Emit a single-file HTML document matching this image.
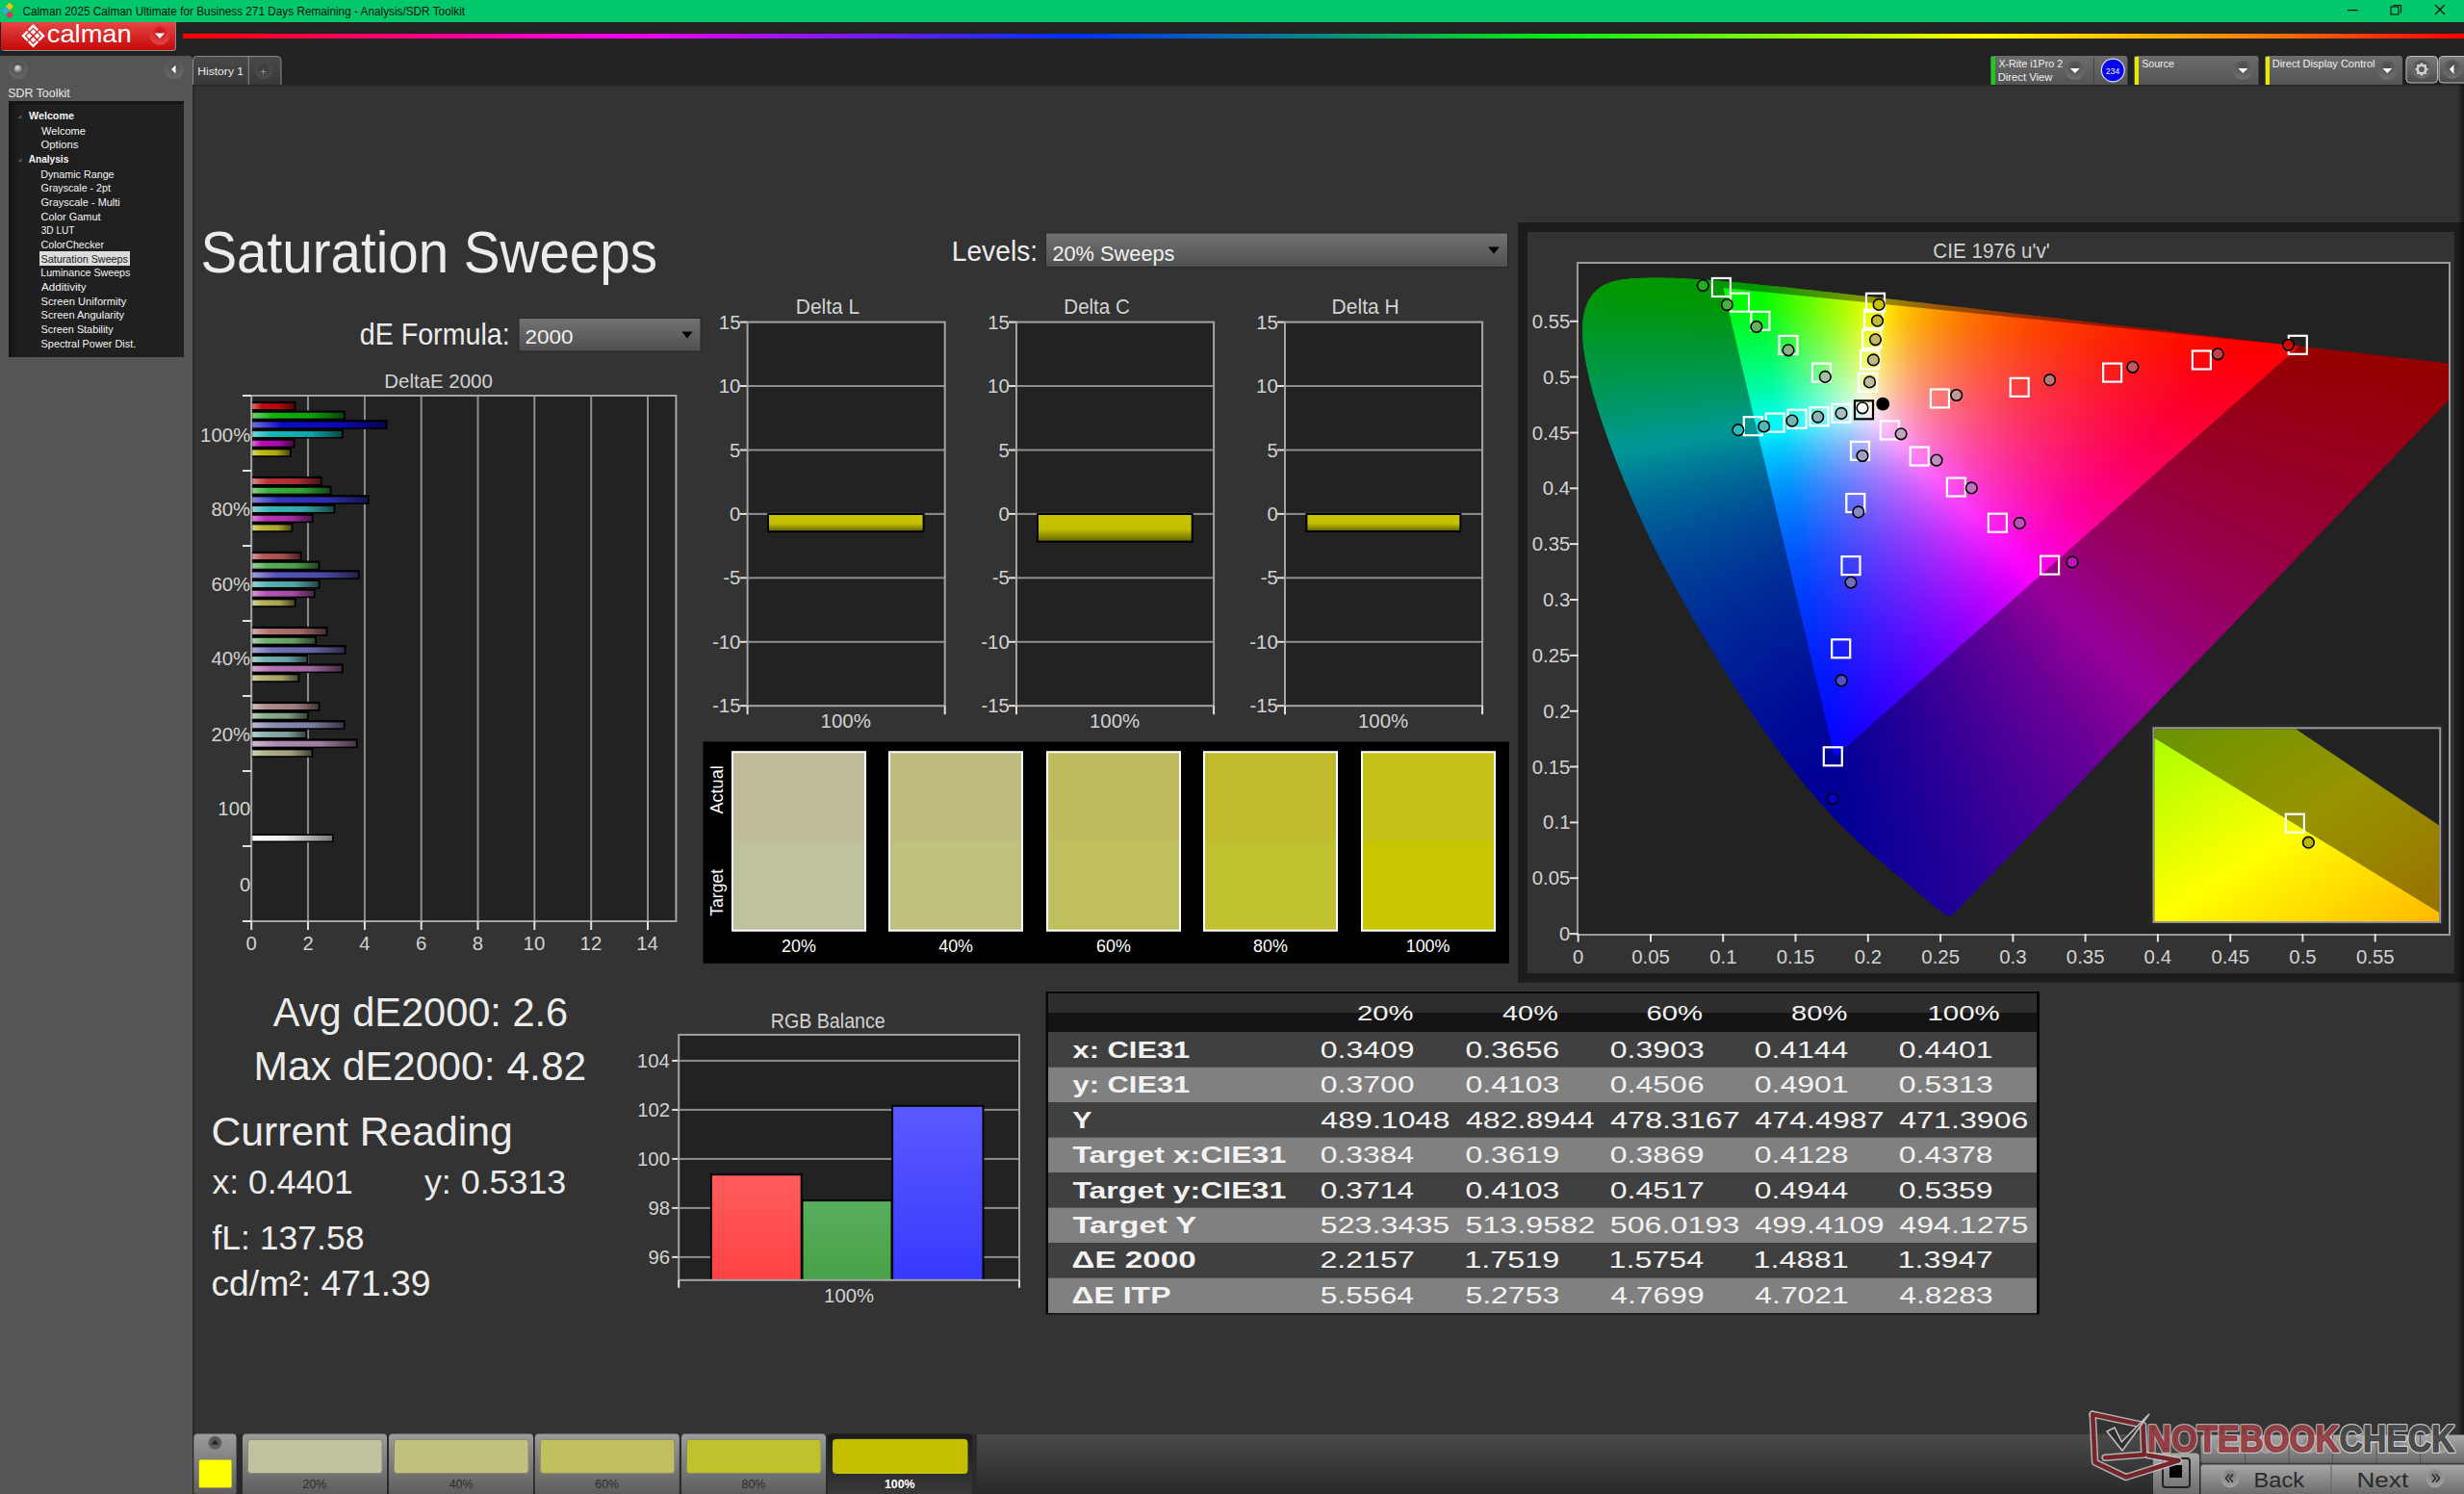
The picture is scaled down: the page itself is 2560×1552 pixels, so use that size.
<!DOCTYPE html>
<html><head><meta charset="utf-8"><title>Calman Saturation Sweeps</title><style>html,body{margin:0;padding:0;width:2560px;height:1552px;overflow:hidden;background:#222;font-family:"Liberation Sans",sans-serif}</style></head><body>
<svg width="2560" height="1552" viewBox="0 0 2560 1552" font-family="Liberation Sans, sans-serif" style="position:absolute;left:0;top:0;display:block">
<defs>
<linearGradient id="redbtn" x1="0" x2="0" y1="0" y2="1"><stop offset="0" stop-color="#e84545"/><stop offset="1" stop-color="#c50808"/></linearGradient>
<radialGradient id="reddd" cx="0.5" cy="0.3" r="0.6"><stop offset="0" stop-color="#c81018"/><stop offset="1" stop-color="#e04444"/></radialGradient>
<linearGradient id="rainbow" x1="0" x2="1" y1="0" y2="0"><stop offset="0" stop-color="#ff0000"/><stop offset="0.19" stop-color="#ff00f0"/><stop offset="0.39" stop-color="#0030ff"/><stop offset="0.50" stop-color="#008a80"/><stop offset="0.60" stop-color="#00ee10"/><stop offset="0.79" stop-color="#ffff00"/><stop offset="0.90" stop-color="#ff8800"/><stop offset="1" stop-color="#ff0000"/></linearGradient>
<radialGradient id="knob" cx="0.5" cy="0.35" r="0.65"><stop offset="0" stop-color="#4a4a4a"/><stop offset="1" stop-color="#6a6a6a"/></radialGradient>
<radialGradient id="ball" cx="0.4" cy="0.35" r="0.6"><stop offset="0" stop-color="#e0e0e0"/><stop offset="1" stop-color="#777"/></radialGradient>
<linearGradient id="treesh" x1="0" x2="1" y1="0" y2="0"><stop offset="0" stop-color="#121212"/><stop offset="0.06" stop-color="#1f1f1f"/><stop offset="1" stop-color="#202020"/></linearGradient>
<linearGradient id="tab" x1="0" x2="0" y1="0" y2="1"><stop offset="0" stop-color="#4a4a4a"/><stop offset="1" stop-color="#383838"/></linearGradient>
<radialGradient id="knob2" cx="0.5" cy="0.4" r="0.6"><stop offset="0" stop-color="#383838"/><stop offset="1" stop-color="#505050"/></radialGradient>
<linearGradient id="ctl" x1="0" x2="0" y1="0" y2="1"><stop offset="0" stop-color="#6c6c6c"/><stop offset="1" stop-color="#545454"/></linearGradient>
<radialGradient id="ddk" cx="0.5" cy="0.3" r="0.65"><stop offset="0" stop-color="#4a4a4a"/><stop offset="1" stop-color="#6e6e6e"/></radialGradient>
<linearGradient id="gbtn" x1="0" x2="0" y1="0" y2="1"><stop offset="0" stop-color="#7a7a7a"/><stop offset="1" stop-color="#4a4a4a"/></linearGradient>
<linearGradient id="dd" x1="0" x2="0" y1="0" y2="1"><stop offset="0" stop-color="#727272"/><stop offset="1" stop-color="#505050"/></linearGradient>
<linearGradient id="bg1" x1="0" x2="1" y1="0" y2="0"><stop offset="0" stop-color="rgb(219, 109, 109)"/><stop offset="0.22" stop-color="rgb(195, 12, 12)"/><stop offset="0.65" stop-color="rgb(175, 10, 10)"/><stop offset="1" stop-color="rgb(78, 4, 4)"/></linearGradient>
<linearGradient id="bg2" x1="0" x2="1" y1="0" y2="0"><stop offset="0" stop-color="rgb(111, 208, 111)"/><stop offset="0.22" stop-color="rgb(16, 178, 16)"/><stop offset="0.65" stop-color="rgb(14, 160, 14)"/><stop offset="1" stop-color="rgb(6, 71, 6)"/></linearGradient>
<linearGradient id="bg3" x1="0" x2="1" y1="0" y2="0"><stop offset="0" stop-color="rgb(109, 109, 222)"/><stop offset="0.22" stop-color="rgb(12, 12, 200)"/><stop offset="0.65" stop-color="rgb(10, 10, 180)"/><stop offset="1" stop-color="rgb(4, 4, 80)"/></linearGradient>
<linearGradient id="bg4" x1="0" x2="1" y1="0" y2="0"><stop offset="0" stop-color="rgb(111, 213, 213)"/><stop offset="0.22" stop-color="rgb(16, 186, 186)"/><stop offset="0.65" stop-color="rgb(14, 167, 167)"/><stop offset="1" stop-color="rgb(6, 74, 74)"/></linearGradient>
<linearGradient id="bg5" x1="0" x2="1" y1="0" y2="0"><stop offset="0" stop-color="rgb(214, 109, 214)"/><stop offset="0.22" stop-color="rgb(188, 12, 188)"/><stop offset="0.65" stop-color="rgb(169, 10, 169)"/><stop offset="1" stop-color="rgb(75, 4, 75)"/></linearGradient>
<linearGradient id="bg6" x1="0" x2="1" y1="0" y2="0"><stop offset="0" stop-color="rgb(218, 213, 111)"/><stop offset="0.22" stop-color="rgb(194, 186, 16)"/><stop offset="0.65" stop-color="rgb(174, 167, 14)"/><stop offset="1" stop-color="rgb(77, 74, 6)"/></linearGradient>
<linearGradient id="bg7" x1="0" x2="1" y1="0" y2="0"><stop offset="0" stop-color="rgb(216, 133, 133)"/><stop offset="0.22" stop-color="rgb(190, 52, 52)"/><stop offset="0.65" stop-color="rgb(171, 46, 46)"/><stop offset="1" stop-color="rgb(76, 20, 20)"/></linearGradient>
<linearGradient id="bg8" x1="0" x2="1" y1="0" y2="0"><stop offset="0" stop-color="rgb(135, 208, 135)"/><stop offset="0.22" stop-color="rgb(55, 177, 55)"/><stop offset="0.65" stop-color="rgb(49, 159, 49)"/><stop offset="1" stop-color="rgb(22, 70, 22)"/></linearGradient>
<linearGradient id="bg9" x1="0" x2="1" y1="0" y2="0"><stop offset="0" stop-color="rgb(133, 133, 217)"/><stop offset="0.22" stop-color="rgb(52, 52, 193)"/><stop offset="0.65" stop-color="rgb(46, 46, 173)"/><stop offset="1" stop-color="rgb(20, 20, 77)"/></linearGradient>
<linearGradient id="bg10" x1="0" x2="1" y1="0" y2="0"><stop offset="0" stop-color="rgb(135, 211, 211)"/><stop offset="0.22" stop-color="rgb(55, 183, 183)"/><stop offset="0.65" stop-color="rgb(49, 164, 164)"/><stop offset="1" stop-color="rgb(22, 73, 73)"/></linearGradient>
<linearGradient id="bg11" x1="0" x2="1" y1="0" y2="0"><stop offset="0" stop-color="rgb(212, 133, 212)"/><stop offset="0.22" stop-color="rgb(184, 52, 184)"/><stop offset="0.65" stop-color="rgb(165, 46, 165)"/><stop offset="1" stop-color="rgb(73, 20, 73)"/></linearGradient>
<linearGradient id="bg12" x1="0" x2="1" y1="0" y2="0"><stop offset="0" stop-color="rgb(215, 211, 135)"/><stop offset="0.22" stop-color="rgb(189, 183, 55)"/><stop offset="0.65" stop-color="rgb(170, 164, 49)"/><stop offset="1" stop-color="rgb(75, 73, 22)"/></linearGradient>
<linearGradient id="bg13" x1="0" x2="1" y1="0" y2="0"><stop offset="0" stop-color="rgb(213, 153, 153)"/><stop offset="0.22" stop-color="rgb(186, 85, 85)"/><stop offset="0.65" stop-color="rgb(167, 76, 76)"/><stop offset="1" stop-color="rgb(74, 34, 34)"/></linearGradient>
<linearGradient id="bg14" x1="0" x2="1" y1="0" y2="0"><stop offset="0" stop-color="rgb(154, 207, 154)"/><stop offset="0.22" stop-color="rgb(87, 176, 87)"/><stop offset="0.65" stop-color="rgb(78, 158, 78)"/><stop offset="1" stop-color="rgb(34, 70, 34)"/></linearGradient>
<linearGradient id="bg15" x1="0" x2="1" y1="0" y2="0"><stop offset="0" stop-color="rgb(153, 153, 214)"/><stop offset="0.22" stop-color="rgb(85, 85, 188)"/><stop offset="0.65" stop-color="rgb(76, 76, 169)"/><stop offset="1" stop-color="rgb(34, 34, 75)"/></linearGradient>
<linearGradient id="bg16" x1="0" x2="1" y1="0" y2="0"><stop offset="0" stop-color="rgb(154, 210, 210)"/><stop offset="0.22" stop-color="rgb(87, 181, 181)"/><stop offset="0.65" stop-color="rgb(78, 162, 162)"/><stop offset="1" stop-color="rgb(34, 72, 72)"/></linearGradient>
<linearGradient id="bg17" x1="0" x2="1" y1="0" y2="0"><stop offset="0" stop-color="rgb(211, 153, 211)"/><stop offset="0.22" stop-color="rgb(182, 85, 182)"/><stop offset="0.65" stop-color="rgb(163, 76, 163)"/><stop offset="1" stop-color="rgb(72, 34, 72)"/></linearGradient>
<linearGradient id="bg18" x1="0" x2="1" y1="0" y2="0"><stop offset="0" stop-color="rgb(213, 210, 154)"/><stop offset="0.22" stop-color="rgb(185, 181, 87)"/><stop offset="0.65" stop-color="rgb(166, 162, 78)"/><stop offset="1" stop-color="rgb(74, 72, 34)"/></linearGradient>
<linearGradient id="bg19" x1="0" x2="1" y1="0" y2="0"><stop offset="0" stop-color="rgb(211, 169, 169)"/><stop offset="0.22" stop-color="rgb(182, 113, 113)"/><stop offset="0.65" stop-color="rgb(163, 101, 101)"/><stop offset="1" stop-color="rgb(72, 45, 45)"/></linearGradient>
<linearGradient id="bg20" x1="0" x2="1" y1="0" y2="0"><stop offset="0" stop-color="rgb(170, 207, 170)"/><stop offset="0.22" stop-color="rgb(114, 176, 114)"/><stop offset="0.65" stop-color="rgb(102, 158, 102)"/><stop offset="1" stop-color="rgb(45, 70, 45)"/></linearGradient>
<linearGradient id="bg21" x1="0" x2="1" y1="0" y2="0"><stop offset="0" stop-color="rgb(169, 169, 212)"/><stop offset="0.22" stop-color="rgb(113, 113, 184)"/><stop offset="0.65" stop-color="rgb(101, 101, 165)"/><stop offset="1" stop-color="rgb(45, 45, 73)"/></linearGradient>
<linearGradient id="bg22" x1="0" x2="1" y1="0" y2="0"><stop offset="0" stop-color="rgb(170, 209, 209)"/><stop offset="0.22" stop-color="rgb(114, 179, 179)"/><stop offset="0.65" stop-color="rgb(102, 161, 161)"/><stop offset="1" stop-color="rgb(45, 71, 71)"/></linearGradient>
<linearGradient id="bg23" x1="0" x2="1" y1="0" y2="0"><stop offset="0" stop-color="rgb(209, 169, 209)"/><stop offset="0.22" stop-color="rgb(179, 113, 179)"/><stop offset="0.65" stop-color="rgb(161, 101, 161)"/><stop offset="1" stop-color="rgb(71, 45, 71)"/></linearGradient>
<linearGradient id="bg24" x1="0" x2="1" y1="0" y2="0"><stop offset="0" stop-color="rgb(211, 209, 170)"/><stop offset="0.22" stop-color="rgb(182, 179, 114)"/><stop offset="0.65" stop-color="rgb(163, 161, 102)"/><stop offset="1" stop-color="rgb(72, 71, 45)"/></linearGradient>
<linearGradient id="bg25" x1="0" x2="1" y1="0" y2="0"><stop offset="0" stop-color="rgb(209, 185, 185)"/><stop offset="0.22" stop-color="rgb(179, 139, 139)"/><stop offset="0.65" stop-color="rgb(161, 125, 125)"/><stop offset="1" stop-color="rgb(71, 55, 55)"/></linearGradient>
<linearGradient id="bg26" x1="0" x2="1" y1="0" y2="0"><stop offset="0" stop-color="rgb(186, 207, 186)"/><stop offset="0.22" stop-color="rgb(140, 175, 140)"/><stop offset="0.65" stop-color="rgb(126, 157, 126)"/><stop offset="1" stop-color="rgb(56, 70, 56)"/></linearGradient>
<linearGradient id="bg27" x1="0" x2="1" y1="0" y2="0"><stop offset="0" stop-color="rgb(185, 185, 210)"/><stop offset="0.22" stop-color="rgb(139, 139, 180)"/><stop offset="0.65" stop-color="rgb(125, 125, 162)"/><stop offset="1" stop-color="rgb(55, 55, 72)"/></linearGradient>
<linearGradient id="bg28" x1="0" x2="1" y1="0" y2="0"><stop offset="0" stop-color="rgb(186, 208, 208)"/><stop offset="0.22" stop-color="rgb(140, 177, 177)"/><stop offset="0.65" stop-color="rgb(126, 159, 159)"/><stop offset="1" stop-color="rgb(56, 70, 70)"/></linearGradient>
<linearGradient id="bg29" x1="0" x2="1" y1="0" y2="0"><stop offset="0" stop-color="rgb(208, 185, 208)"/><stop offset="0.22" stop-color="rgb(177, 139, 177)"/><stop offset="0.65" stop-color="rgb(159, 125, 159)"/><stop offset="1" stop-color="rgb(70, 55, 70)"/></linearGradient>
<linearGradient id="bg30" x1="0" x2="1" y1="0" y2="0"><stop offset="0" stop-color="rgb(209, 208, 186)"/><stop offset="0.22" stop-color="rgb(179, 177, 140)"/><stop offset="0.65" stop-color="rgb(161, 159, 126)"/><stop offset="1" stop-color="rgb(71, 70, 56)"/></linearGradient>
<linearGradient id="bgw" x1="0" x2="1" y1="0" y2="0"><stop offset="0" stop-color="#fff"/><stop offset="0.4" stop-color="#eee"/><stop offset="1" stop-color="#777"/></linearGradient>
<linearGradient id="ybar" x1="0" x2="0" y1="0" y2="1"><stop offset="0" stop-color="#c8c400"/><stop offset="0.55" stop-color="#c4c000"/><stop offset="1" stop-color="#6e6a00"/></linearGradient>
<linearGradient id="rb" x1="0" x2="0" y1="0" y2="1"><stop offset="0" stop-color="#ff5c5c"/><stop offset="1" stop-color="#ff4242"/></linearGradient>
<linearGradient id="gb" x1="0" x2="0" y1="0" y2="1"><stop offset="0" stop-color="#5aae5e"/><stop offset="1" stop-color="#46a246"/></linearGradient>
<linearGradient id="bb" x1="0" x2="0" y1="0" y2="1"><stop offset="0" stop-color="#5a5aff"/><stop offset="1" stop-color="#3838ff"/></linearGradient>
<clipPath id="plotclip"><rect x="1640" y="274" width="905" height="696"/></clipPath>
<clipPath id="locclip"><path d="M2028.6 950.5 L2028.6 950.5 L2028.6 950.5 L2028.5 950.5 L2028.5 950.5 L2028.4 950.5 L2028.4 950.5 L2028.3 950.6 L2028.3 950.6 L2028.2 950.7 L2028.2 950.8 L2028.1 950.9 L2028.0 950.9 L2028.0 950.9 L2027.9 950.9 L2027.8 950.9 L2027.7 950.9 L2027.6 950.9 L2027.5 950.9 L2027.4 951.0 L2027.4 951.0 L2027.3 951.1 L2027.2 951.2 L2027.1 951.3 L2027.0 951.3 L2026.8 951.3 L2026.7 951.3 L2026.6 951.3 L2026.5 951.3 L2026.3 951.3 L2026.2 951.3 L2026.1 951.3 L2025.9 951.3 L2025.7 951.3 L2025.6 951.3 L2025.4 951.3 L2025.2 951.3 L2025.0 951.3 L2024.8 951.4 L2024.7 951.4 L2024.5 951.4 L2024.2 951.4 L2024.0 951.3 L2023.7 951.2 L2023.3 951.1 L2023.0 950.9 L2022.6 950.7 L2022.2 950.5 L2021.7 950.2 L2021.2 949.9 L2020.6 949.5 L2019.9 949.1 L2019.3 948.6 L2018.5 948.1 L2017.8 947.6 L2017.0 947.0 L2016.2 946.4 L2015.4 945.8 L2014.5 945.1 L2013.6 944.4 L2012.5 943.5 L2011.4 942.7 L2010.2 941.7 L2009.0 940.7 L2007.7 939.6 L2006.3 938.5 L2004.9 937.4 L2003.5 936.1 L2002.0 934.8 L2000.4 933.5 L1998.8 932.1 L1997.1 930.7 L1995.3 929.2 L1993.5 927.6 L1991.6 926.0 L1989.7 924.4 L1987.6 922.7 L1985.5 921.0 L1983.2 919.1 L1980.8 917.1 L1978.3 915.1 L1975.7 912.9 L1973.0 910.7 L1970.2 908.4 L1967.3 906.0 L1964.3 903.6 L1961.3 901.1 L1958.2 898.5 L1955.0 895.8 L1951.6 893.0 L1948.1 889.9 L1944.5 886.8 L1940.8 883.5 L1936.9 880.1 L1933.0 876.5 L1928.9 872.7 L1924.6 868.7 L1920.3 864.5 L1915.9 860.2 L1911.4 855.7 L1906.6 850.9 L1901.7 845.7 L1896.4 839.8 L1890.7 833.4 L1884.8 826.6 L1878.6 819.2 L1872.2 811.5 L1865.6 803.2 L1858.9 794.5 L1852.0 785.3 L1844.8 775.6 L1837.4 765.5 L1829.9 754.9 L1822.3 743.9 L1814.7 732.5 L1806.9 720.6 L1798.9 708.2 L1790.8 695.3 L1782.7 682.1 L1774.6 668.8 L1766.7 655.4 L1758.8 641.8 L1750.8 627.9 L1742.8 613.8 L1735.1 599.7 L1727.6 585.7 L1720.5 571.9 L1713.8 558.3 L1707.3 544.5 L1701.1 530.9 L1695.2 517.5 L1689.6 504.4 L1684.4 491.8 L1679.5 479.7 L1674.9 467.8 L1670.7 456.2 L1666.8 445.1 L1663.2 434.4 L1659.9 424.3 L1657.0 414.8 L1654.4 405.7 L1652.2 397.2 L1650.3 389.1 L1648.6 381.4 L1647.2 374.1 L1646.1 367.3 L1645.2 360.9 L1644.6 355.0 L1644.2 349.5 L1644.1 344.2 L1644.2 339.2 L1644.4 334.5 L1644.9 330.1 L1645.7 326.0 L1646.6 322.1 L1647.7 318.5 L1649.0 315.2 L1650.5 312.0 L1652.2 309.2 L1654.0 306.5 L1656.1 304.1 L1658.2 301.9 L1660.5 299.9 L1662.9 298.2 L1665.5 296.6 L1668.2 295.3 L1671.0 294.1 L1673.8 293.1 L1676.8 292.2 L1679.8 291.4 L1683.0 290.8 L1686.2 290.3 L1689.5 289.9 L1692.8 289.6 L1696.2 289.3 L1699.6 289.0 L1703.1 288.9 L1706.7 288.7 L1710.2 288.7 L1713.8 288.6 L1717.4 288.6 L1720.9 288.6 L1724.5 288.6 L1728.0 288.6 L1731.6 288.7 L1735.2 288.7 L1738.9 288.8 L1742.5 289.0 L1746.2 289.1 L1749.9 289.3 L1753.6 289.5 L1757.4 289.7 L1761.3 289.9 L1765.2 290.1 L1769.1 290.4 L1773.1 290.7 L1777.2 291.0 L1781.3 291.3 L1785.4 291.6 L1789.7 292.0 L1793.9 292.4 L1798.3 292.8 L1802.7 293.2 L1807.1 293.6 L1811.7 294.0 L1816.3 294.5 L1821.0 294.9 L1825.7 295.4 L1830.6 295.9 L1835.5 296.4 L1840.5 296.9 L1845.6 297.5 L1850.8 298.0 L1856.1 298.6 L1861.5 299.2 L1866.9 299.8 L1872.5 300.4 L1878.1 301.0 L1883.9 301.6 L1889.7 302.3 L1895.7 303.0 L1901.7 303.6 L1907.9 304.3 L1914.1 305.0 L1920.5 305.8 L1927.0 306.5 L1933.5 307.2 L1940.2 308.0 L1947.0 308.8 L1953.9 309.6 L1960.9 310.4 L1968.0 311.2 L1975.3 312.0 L1982.6 312.9 L1990.0 313.7 L1997.6 314.6 L2005.2 315.5 L2013.0 316.4 L2020.9 317.3 L2028.9 318.2 L2037.0 319.1 L2045.1 320.1 L2053.4 321.0 L2061.8 322.0 L2070.3 323.0 L2078.9 324.0 L2087.6 325.0 L2096.3 326.0 L2105.1 327.0 L2114.1 328.0 L2123.0 329.0 L2132.1 330.1 L2141.1 331.1 L2150.2 332.2 L2159.4 333.2 L2168.6 334.3 L2177.9 335.4 L2187.0 336.4 L2196.1 337.5 L2205.1 338.5 L2214.1 339.6 L2223.0 340.6 L2231.8 341.6 L2240.6 342.6 L2249.4 343.6 L2258.2 344.6 L2267.0 345.7 L2275.8 346.7 L2284.4 347.7 L2293.0 348.7 L2301.3 349.6 L2309.5 350.5 L2317.6 351.5 L2325.5 352.4 L2333.3 353.3 L2340.9 354.1 L2348.3 355.0 L2355.6 355.8 L2362.8 356.7 L2369.8 357.5 L2376.7 358.3 L2383.4 359.0 L2389.9 359.8 L2396.2 360.5 L2402.3 361.2 L2408.3 361.9 L2414.1 362.6 L2419.8 363.2 L2425.2 363.9 L2430.6 364.5 L2435.7 365.1 L2440.7 365.6 L2445.5 366.2 L2450.3 366.7 L2454.8 367.3 L2459.3 367.8 L2463.6 368.3 L2467.8 368.8 L2471.9 369.2 L2475.9 369.7 L2479.8 370.2 L2483.7 370.6 L2487.4 371.0 L2491.1 371.5 L2494.6 371.9 L2498.1 372.3 L2501.5 372.7 L2504.7 373.0 L2507.9 373.4 L2511.0 373.8 L2514.0 374.1 L2517.0 374.5 L2519.8 374.8 L2522.5 375.1 L2525.1 375.4 L2527.6 375.7 L2530.0 375.9 L2532.3 376.2 L2534.6 376.4 L2536.6 376.7 L2538.5 376.9 L2540.3 377.1 L2542.0 377.3 L2543.9 377.5 L2546.0 377.8 L2548.5 378.1 L2551.2 378.4 L2554.1 378.7 L2556.9 379.0 L2559.5 379.3 L2561.7 379.6 L2563.5 379.8 L2565.0 380.0 L2566.3 380.1 L2567.4 380.3 L2568.5 380.4 L2569.6 380.5 L2570.7 380.7 L2571.7 380.9 L2572.6 381.1 L2573.5 381.2 L2574.4 381.3 L2575.3 381.2 L2576.2 380.8 L2577.2 380.2 L2578.2 379.5 L2579.2 378.8 L2579.9 378.2 L2580.5 377.8 Z"/></clipPath>
<filter id="bl" x="-5%" y="-5%" width="110%" height="110%" color-interpolation-filters="sRGB"><feGaussianBlur stdDeviation="6"/></filter>
<linearGradient id="insb" x1="0" y1="0" x2="1" y2="1"><stop offset="0" stop-color="#a8ff00"/><stop offset="0.5" stop-color="#ffff00"/><stop offset="1" stop-color="#ffb800"/></linearGradient>
<linearGradient id="insd" x1="0" y1="0" x2="1" y2="1"><stop offset="0" stop-color="#689400"/><stop offset="0.5" stop-color="#989400"/><stop offset="1" stop-color="#987000"/></linearGradient>
<linearGradient id="rshadow" x1="0" x2="1" y1="0" y2="0"><stop offset="0" stop-color="#000" stop-opacity="0"/><stop offset="1" stop-color="#000" stop-opacity="0.55"/></linearGradient>
<linearGradient id="bbar" x1="0" x2="0" y1="0" y2="1"><stop offset="0" stop-color="#4a4a4a"/><stop offset="1" stop-color="#2a2a2a"/></linearGradient>
<linearGradient id="sbtn" x1="0" x2="0" y1="0" y2="1"><stop offset="0" stop-color="#9c9c9c"/><stop offset="1" stop-color="#5c5c5c"/></linearGradient>
<linearGradient id="sbtn2" x1="0" x2="0" y1="0" y2="1"><stop offset="0" stop-color="#1a1a1a"/><stop offset="1" stop-color="#3a3a3a"/></linearGradient>
<linearGradient id="cbtn" x1="0" x2="0" y1="0" y2="1"><stop offset="0" stop-color="#a8a8a8"/><stop offset="1" stop-color="#6a6a6a"/></linearGradient>
<radialGradient id="mknob" cx="0.5" cy="0.35" r="0.65"><stop offset="0" stop-color="#777"/><stop offset="1" stop-color="#a4a4a4"/></radialGradient>
</defs>
<rect x="0" y="0" width="2560" height="1552" fill="#222"/>
<rect x="200" y="88" width="2360" height="1402" fill="#333"/>
<rect x="200" y="88" width="2" height="1402" fill="#2a2a2a"/>
<rect x="200" y="88" width="2360" height="1.3" fill="#262626"/>
<rect x="0" y="0" width="2560" height="23" fill="#00c86b"/>
<path d="M10.0 2.5L14.0 6.5L10.0 10.5L6.0 6.5Z" fill="#f5c400"/>
<path d="M5.5 7.0L9.5 11.0L5.5 15.0L1.5 11.0Z" fill="#2ab0f0"/>
<path d="M14.5 7.0L18.5 11.0L14.5 15.0L10.5 11.0Z" fill="#22c040"/>
<path d="M10.0 11.5L14.0 15.5L10.0 19.5L6.0 15.5Z" fill="#e03060"/>
<text x="23.4" y="15.8" font-size="12.65" fill="#101010" textLength="459.7" lengthAdjust="spacingAndGlyphs">Calman 2025 Calman Ultimate for Business 271 Days Remaining  - Analysis/SDR Toolkit</text>
<rect x="2439" y="10" width="11" height="1.2" fill="#111"/>
<rect x="2484" y="7" width="8" height="8" fill="none" stroke="#111" stroke-width="1.1"/><path d="M2486.5 5.5H2494.5V13.5" fill="none" stroke="#111" stroke-width="1.1"/>
<path d="M2530 5L2540 15M2540 5L2530 15" stroke="#111" stroke-width="1.2"/>
<path d="M1 23H183V49A4 4 0 0 1 179 53H5A4 4 0 0 1 1 49Z" fill="#8a8a8a"/>
<path d="M1 23H182V48.5A3.5 3.5 0 0 1 178.5 52H4.5A3.5 3.5 0 0 1 1 48.5Z" fill="url(#redbtn)"/>
<path d="M34.5 25.1L46.7 37.3L34.5 49.5L22.3 37.3Z M34.5 28.5L43.3 37.3L34.5 46.1L25.7 37.3Z" fill="#fff" fill-rule="evenodd"/>
<rect x="28.60" y="29.55" width="1.3" height="5" fill="#d82424" transform="rotate(-45 29.25 32.05)"/>
<rect x="39.10" y="29.55" width="1.3" height="5" fill="#d82424" transform="rotate(45 39.75 32.05)"/>
<rect x="39.10" y="40.05" width="1.3" height="5" fill="#d82424" transform="rotate(-45 39.75 42.55)"/>
<rect x="28.60" y="40.05" width="1.3" height="5" fill="#d82424" transform="rotate(45 29.25 42.55)"/>
<path d="M30.4 34.4L33.3 37.3L30.4 40.2L27.5 37.3Z" fill="#fff"/>
<path d="M38.6 34.4L41.5 37.3L38.6 40.2L35.7 37.3Z" fill="#fff"/>
<path d="M34.5 30.3L37.4 33.2L34.5 36.1L31.6 33.2Z" fill="#fff"/>
<path d="M34.5 38.5L37.4 41.4L34.5 44.3L31.6 41.4Z" fill="#fff"/>
<text x="48.8" y="43.9" font-size="25.36" fill="#fff" textLength="87.9" lengthAdjust="spacingAndGlyphs">calman</text>
<circle cx="166" cy="37" r="10" fill="url(#reddd)"/>
<path d="M161 34.5H171L166 40Z" fill="#fff"/>
<rect x="190" y="35" width="2370" height="5" fill="url(#rainbow)"/>
<path d="M0 58H196A4 4 0 0 1 200 62V1552H0Z" fill="#555"/>
<circle cx="18.8" cy="72" r="10" fill="url(#knob)"/>
<circle cx="18.8" cy="71.5" r="4" fill="url(#ball)"/>
<circle cx="181" cy="72" r="10" fill="url(#knob)"/>
<path d="M178 72L182.5 67.5V76.5Z" fill="#fff"/>
<text x="8.3" y="100.6" font-size="12.21" fill="#e8e8e8" textLength="64.5" lengthAdjust="spacingAndGlyphs">SDR Toolkit</text>
<rect x="9" y="105" width="182" height="266" fill="url(#treesh)"/>
<rect x="9" y="105" width="182" height="3" fill="#151515"/>
<text x="30.0" y="124.0" font-size="11.63" font-weight="bold" fill="#f4f4f4" textLength="46.9" lengthAdjust="spacingAndGlyphs">Welcome</text>
<path d="M18.5 123.0L22.5 119.0V123.0Z" fill="#555"/>
<text x="43.1" y="139.9" font-size="11.63" fill="#f4f4f4" textLength="45.9" lengthAdjust="spacingAndGlyphs">Welcome</text>
<text x="42.6" y="154.0" font-size="11.63" fill="#f4f4f4" textLength="38.8" lengthAdjust="spacingAndGlyphs">Options</text>
<text x="29.7" y="169.0" font-size="11.63" font-weight="bold" fill="#f4f4f4" textLength="41.6" lengthAdjust="spacingAndGlyphs">Analysis</text>
<path d="M18.5 168.0L22.5 164.0V168.0Z" fill="#555"/>
<text x="42.2" y="185.3" font-size="11.63" fill="#f4f4f4" textLength="76.4" lengthAdjust="spacingAndGlyphs">Dynamic Range</text>
<text x="42.6" y="199.0" font-size="11.63" fill="#f4f4f4" textLength="72.3" lengthAdjust="spacingAndGlyphs">Grayscale - 2pt</text>
<text x="42.5" y="213.8" font-size="11.63" fill="#f4f4f4" textLength="82.3" lengthAdjust="spacingAndGlyphs">Grayscale - Multi</text>
<text x="42.5" y="229.0" font-size="11.63" fill="#f4f4f4" textLength="62.1" lengthAdjust="spacingAndGlyphs">Color Gamut</text>
<text x="42.7" y="243.0" font-size="11.63" fill="#f4f4f4" textLength="34.8" lengthAdjust="spacingAndGlyphs">3D LUT</text>
<text x="42.6" y="258.0" font-size="11.63" fill="#f4f4f4" textLength="65.4" lengthAdjust="spacingAndGlyphs">ColorChecker</text>
<rect x="41" y="261" width="94" height="15" fill="#dcdcdc"/>
<text x="42.6" y="272.9" font-size="11.63" fill="#1a1a1a" textLength="90.4" lengthAdjust="spacingAndGlyphs">Saturation Sweeps</text>
<text x="42.2" y="287.0" font-size="11.63" fill="#f4f4f4" textLength="93.2" lengthAdjust="spacingAndGlyphs">Luminance Sweeps</text>
<text x="43.1" y="302.0" font-size="11.63" fill="#f4f4f4" textLength="46.5" lengthAdjust="spacingAndGlyphs">Additivity</text>
<text x="42.6" y="317.1" font-size="11.63" fill="#f4f4f4" textLength="88.7" lengthAdjust="spacingAndGlyphs">Screen Uniformity</text>
<text x="42.6" y="331.2" font-size="11.63" fill="#f4f4f4" textLength="86.4" lengthAdjust="spacingAndGlyphs">Screen Angularity</text>
<text x="42.6" y="346.0" font-size="11.63" fill="#f4f4f4" textLength="75.2" lengthAdjust="spacingAndGlyphs">Screen Stability</text>
<text x="42.6" y="361.0" font-size="11.63" fill="#f4f4f4" textLength="98.7" lengthAdjust="spacingAndGlyphs">Spectral Power Dist.</text>
<path d="M200.5 88V62A4 4 0 0 1 204.5 58.5H288A4 4 0 0 1 292 62.5V88Z" fill="url(#tab)"/>
<path d="M200.5 88V62A4 4 0 0 1 204.5 58.5H288A4 4 0 0 1 292 62.5V88" fill="none" stroke="#8a8a8a" stroke-width="1"/>
<rect x="257.8" y="59" width="1" height="29" fill="#8a8a8a"/>
<text x="205.2" y="77.8" font-size="11.63" fill="#eaeaea" textLength="47.9" lengthAdjust="spacingAndGlyphs">History 1</text>
<circle cx="274" cy="73" r="9" fill="url(#knob2)"/>
<path d="M270.5 74.5H276.5M273.5 71.5V77.5" stroke="#8a8a8a" stroke-width="1"/>
<path d="M2068.0 88V61A3 3 0 0 1 2071.0 58H2207.4A3 3 0 0 1 2210.4 61V88Z" fill="url(#ctl)"/>
<rect x="2069.0" y="59" width="4" height="29" fill="#16d016"/>
<text x="2076.4" y="69.6" font-size="11.34" fill="#f0f0f0" textLength="66.8" lengthAdjust="spacingAndGlyphs">X-Rite i1Pro 2</text>
<text x="2075.7" y="83.6" font-size="11.34" fill="#f0f0f0" textLength="56.8" lengthAdjust="spacingAndGlyphs">Direct View</text>
<circle cx="2155.8" cy="73" r="10" fill="url(#ddk)"/>
<path d="M2150.8 71H2160.8L2155.8 76Z" fill="#fff"/>
<rect x="2175" y="60" width="1" height="28" fill="#444"/>
<circle cx="2195.3" cy="73" r="12.5" fill="#dcdcff"/><circle cx="2195.3" cy="73" r="11.3" fill="#0000ee"/>
<text x="2188.1" y="76.5" font-size="9.45" fill="#fff" textLength="14.2" lengthAdjust="spacingAndGlyphs">234</text>
<path d="M2217.0 88V61A3 3 0 0 1 2220.0 58H2343.5A3 3 0 0 1 2346.5 61V88Z" fill="url(#ctl)"/>
<rect x="2218.0" y="59" width="4" height="29" fill="#e8e800"/>
<text x="2225.2" y="69.6" font-size="11.34" fill="#f0f0f0" textLength="33.7" lengthAdjust="spacingAndGlyphs">Source</text>
<circle cx="2330.4" cy="73" r="10" fill="url(#ddk)"/>
<path d="M2325.4 71H2335.4L2330.4 76Z" fill="#fff"/>
<path d="M2353.0 88V61A3 3 0 0 1 2356.0 58H2493.0A3 3 0 0 1 2496.0 61V88Z" fill="url(#ctl)"/>
<rect x="2354.0" y="59" width="4" height="29" fill="#e8e800"/>
<text x="2360.7" y="69.6" font-size="11.34" fill="#f0f0f0" textLength="106.8" lengthAdjust="spacingAndGlyphs">Direct Display Control</text>
<circle cx="2480.3" cy="73" r="10" fill="url(#ddk)"/>
<path d="M2475.3 71H2485.3L2480.3 76Z" fill="#fff"/>
<rect x="2500" y="58.5" width="32.5" height="27.5" rx="4" fill="url(#gbtn)" stroke="#bdbdbd" stroke-width="1"/>
<circle cx="2516" cy="72" r="10" fill="url(#ddk)"/>
<path d="M2523.00 72.00 L2520.90 74.03 L2520.95 76.95 L2518.03 76.90 L2516.00 79.00 L2513.97 76.90 L2511.05 76.95 L2511.10 74.03 L2509.00 72.00 L2511.10 69.97 L2511.05 67.05 L2513.97 67.10 L2516.00 65.00 L2518.03 67.10 L2520.95 67.05 L2520.90 69.97Z" fill="#cfcfcf"/><circle cx="2516" cy="72" r="3" fill="#5a5a5a"/>
<rect x="2534" y="58.5" width="30" height="27.5" rx="4" fill="url(#gbtn)" stroke="#bdbdbd" stroke-width="1"/>
<circle cx="2548" cy="72" r="10" fill="url(#ddk)"/>
<path d="M2545 72L2549.5 67V77Z" fill="#fff"/>
<text x="208.4" y="283.0" font-size="61.05" fill="#ececec" textLength="474.6" lengthAdjust="spacingAndGlyphs">Saturation Sweeps</text>
<text x="373.8" y="358.0" font-size="30.52" fill="#ececec" textLength="155.8" lengthAdjust="spacingAndGlyphs">dE Formula:</text>
<rect x="538.5" y="330" width="190" height="35.5" fill="#262626"/>
<rect x="539.5" y="331" width="188" height="33.5" fill="url(#dd)"/>
<text x="545.4" y="357.4" font-size="21.08" fill="#f0f0f0" textLength="50.0" lengthAdjust="spacingAndGlyphs">2000</text>
<path d="M708.5 344.5H719.5L714 351.5Z" fill="#000"/>
<text x="988.7" y="270.6" font-size="29.07" fill="#ececec" textLength="89.5" lengthAdjust="spacingAndGlyphs">Levels:</text>
<rect x="1086" y="241.5" width="481" height="36.5" fill="#262626"/>
<rect x="1087" y="242.5" width="479" height="34.5" fill="url(#dd)"/>
<text x="1093.4" y="271.4" font-size="22.67" fill="#f0f0f0" textLength="127.1" lengthAdjust="spacingAndGlyphs">20% Sweeps</text>
<path d="M1546 256.5H1558L1552 263.5Z" fill="#000"/>
<text x="399.3" y="402.7" font-size="20.49" fill="#d2d2d2" textLength="112.5" lengthAdjust="spacingAndGlyphs">DeltaE 2000</text>
<rect x="261.2" y="411.0" width="441.2" height="546.0" fill="#222"/>
<rect x="319.0" y="411.0" width="2" height="546.0" fill="#8e8e8e"/>
<rect x="377.9" y="411.0" width="2" height="546.0" fill="#8e8e8e"/>
<rect x="436.7" y="411.0" width="2" height="546.0" fill="#8e8e8e"/>
<rect x="495.5" y="411.0" width="2" height="546.0" fill="#8e8e8e"/>
<rect x="554.3" y="411.0" width="2" height="546.0" fill="#8e8e8e"/>
<rect x="613.2" y="411.0" width="2" height="546.0" fill="#8e8e8e"/>
<rect x="672.0" y="411.0" width="2" height="546.0" fill="#8e8e8e"/>
<rect x="261.2" y="411.0" width="441.2" height="546.0" fill="none" stroke="#a4a4a4" stroke-width="2"/>
<rect x="252" y="410.0" width="9" height="2" fill="#e0e0e0"/>
<rect x="252" y="488.0" width="9" height="2" fill="#e0e0e0"/>
<rect x="252" y="566.0" width="9" height="2" fill="#e0e0e0"/>
<rect x="252" y="644.0" width="9" height="2" fill="#e0e0e0"/>
<rect x="252" y="722.0" width="9" height="2" fill="#e0e0e0"/>
<rect x="252" y="800.0" width="9" height="2" fill="#e0e0e0"/>
<rect x="252" y="878.0" width="9" height="2" fill="#e0e0e0"/>
<rect x="252" y="956.0" width="9" height="2" fill="#e0e0e0"/>
<rect x="260.2" y="957" width="2" height="9" fill="#e0e0e0"/>
<text x="255.5" y="986.5" font-size="20.35" fill="#d2d2d2" textLength="11.3" lengthAdjust="spacingAndGlyphs">0</text>
<rect x="319.0" y="957" width="2" height="9" fill="#e0e0e0"/>
<text x="314.4" y="986.5" font-size="20.35" fill="#d2d2d2" textLength="11.3" lengthAdjust="spacingAndGlyphs">2</text>
<rect x="377.9" y="957" width="2" height="9" fill="#e0e0e0"/>
<text x="373.2" y="986.5" font-size="20.35" fill="#d2d2d2" textLength="11.3" lengthAdjust="spacingAndGlyphs">4</text>
<rect x="436.7" y="957" width="2" height="9" fill="#e0e0e0"/>
<text x="431.9" y="986.5" font-size="20.35" fill="#d2d2d2" textLength="11.3" lengthAdjust="spacingAndGlyphs">6</text>
<rect x="495.5" y="957" width="2" height="9" fill="#e0e0e0"/>
<text x="490.8" y="986.5" font-size="20.35" fill="#d2d2d2" textLength="11.3" lengthAdjust="spacingAndGlyphs">8</text>
<rect x="554.3" y="957" width="2" height="9" fill="#e0e0e0"/>
<text x="543.6" y="986.5" font-size="20.35" fill="#d2d2d2" textLength="22.7" lengthAdjust="spacingAndGlyphs">10</text>
<rect x="613.2" y="957" width="2" height="9" fill="#e0e0e0"/>
<text x="602.6" y="986.5" font-size="20.35" fill="#d2d2d2" textLength="22.7" lengthAdjust="spacingAndGlyphs">12</text>
<rect x="672.0" y="957" width="2" height="9" fill="#e0e0e0"/>
<text x="661.2" y="986.5" font-size="20.35" fill="#d2d2d2" textLength="22.7" lengthAdjust="spacingAndGlyphs">14</text>
<text x="208.1" y="458.7" font-size="20.35" fill="#d2d2d2" textLength="52.2" lengthAdjust="spacingAndGlyphs">100%</text>
<text x="219.4" y="535.5" font-size="20.35" fill="#d2d2d2" textLength="40.8" lengthAdjust="spacingAndGlyphs">80%</text>
<text x="219.4" y="613.6" font-size="20.35" fill="#d2d2d2" textLength="40.8" lengthAdjust="spacingAndGlyphs">60%</text>
<text x="219.4" y="690.6" font-size="20.35" fill="#d2d2d2" textLength="40.8" lengthAdjust="spacingAndGlyphs">40%</text>
<text x="219.4" y="770.0" font-size="20.35" fill="#d2d2d2" textLength="40.8" lengthAdjust="spacingAndGlyphs">20%</text>
<text x="226.3" y="846.7" font-size="20.35" fill="#d2d2d2" textLength="34.0" lengthAdjust="spacingAndGlyphs">100</text>
<text x="249.0" y="925.5" font-size="20.35" fill="#d2d2d2" textLength="11.3" lengthAdjust="spacingAndGlyphs">0</text>
<rect x="262.2" y="416.80" width="45.4" height="9.75" fill="#000"/>
<rect x="262.2" y="419.10" width="43.6" height="5.9" fill="url(#bg1)"/>
<rect x="262.2" y="426.45" width="96.5" height="9.75" fill="#000"/>
<rect x="262.2" y="428.75" width="94.7" height="5.9" fill="url(#bg2)"/>
<rect x="262.2" y="436.10" width="140.4" height="9.75" fill="#000"/>
<rect x="262.2" y="438.40" width="138.6" height="5.9" fill="url(#bg3)"/>
<rect x="262.2" y="445.75" width="94.4" height="9.75" fill="#000"/>
<rect x="262.2" y="448.05" width="92.6" height="5.9" fill="url(#bg4)"/>
<rect x="262.2" y="455.40" width="44.4" height="9.75" fill="#000"/>
<rect x="262.2" y="457.70" width="42.6" height="5.9" fill="url(#bg5)"/>
<rect x="262.2" y="465.05" width="40.6" height="9.75" fill="#000"/>
<rect x="262.2" y="467.35" width="38.8" height="5.9" fill="url(#bg6)"/>
<rect x="262.2" y="494.80" width="72.5" height="9.75" fill="#000"/>
<rect x="262.2" y="497.10" width="70.7" height="5.9" fill="url(#bg7)"/>
<rect x="262.2" y="504.45" width="82.4" height="9.75" fill="#000"/>
<rect x="262.2" y="506.75" width="80.6" height="5.9" fill="url(#bg8)"/>
<rect x="262.2" y="514.10" width="121.4" height="9.75" fill="#000"/>
<rect x="262.2" y="516.40" width="119.6" height="5.9" fill="url(#bg9)"/>
<rect x="262.2" y="523.75" width="86.2" height="9.75" fill="#000"/>
<rect x="262.2" y="526.05" width="84.4" height="5.9" fill="url(#bg10)"/>
<rect x="262.2" y="533.40" width="63.4" height="9.75" fill="#000"/>
<rect x="262.2" y="535.70" width="61.6" height="5.9" fill="url(#bg11)"/>
<rect x="262.2" y="543.05" width="42.3" height="9.75" fill="#000"/>
<rect x="262.2" y="545.35" width="40.5" height="5.9" fill="url(#bg12)"/>
<rect x="262.2" y="572.80" width="51.3" height="9.75" fill="#000"/>
<rect x="262.2" y="575.10" width="49.5" height="5.9" fill="url(#bg13)"/>
<rect x="262.2" y="582.45" width="70.3" height="9.75" fill="#000"/>
<rect x="262.2" y="584.75" width="68.5" height="5.9" fill="url(#bg14)"/>
<rect x="262.2" y="592.10" width="111.5" height="9.75" fill="#000"/>
<rect x="262.2" y="594.40" width="109.7" height="5.9" fill="url(#bg15)"/>
<rect x="262.2" y="601.75" width="70.3" height="9.75" fill="#000"/>
<rect x="262.2" y="604.05" width="68.5" height="5.9" fill="url(#bg16)"/>
<rect x="262.2" y="611.40" width="65.5" height="9.75" fill="#000"/>
<rect x="262.2" y="613.70" width="63.7" height="5.9" fill="url(#bg17)"/>
<rect x="262.2" y="621.05" width="45.4" height="9.75" fill="#000"/>
<rect x="262.2" y="623.35" width="43.6" height="5.9" fill="url(#bg18)"/>
<rect x="262.2" y="650.80" width="78.3" height="9.75" fill="#000"/>
<rect x="262.2" y="653.10" width="76.5" height="5.9" fill="url(#bg19)"/>
<rect x="262.2" y="660.45" width="66.8" height="9.75" fill="#000"/>
<rect x="262.2" y="662.75" width="65.0" height="5.9" fill="url(#bg20)"/>
<rect x="262.2" y="670.10" width="97.3" height="9.75" fill="#000"/>
<rect x="262.2" y="672.40" width="95.5" height="5.9" fill="url(#bg21)"/>
<rect x="262.2" y="679.75" width="58.3" height="9.75" fill="#000"/>
<rect x="262.2" y="682.05" width="56.5" height="5.9" fill="url(#bg22)"/>
<rect x="262.2" y="689.40" width="94.4" height="9.75" fill="#000"/>
<rect x="262.2" y="691.70" width="92.6" height="5.9" fill="url(#bg23)"/>
<rect x="262.2" y="699.05" width="49.1" height="9.75" fill="#000"/>
<rect x="262.2" y="701.35" width="47.3" height="5.9" fill="url(#bg24)"/>
<rect x="262.2" y="728.80" width="70.3" height="9.75" fill="#000"/>
<rect x="262.2" y="731.10" width="68.5" height="5.9" fill="url(#bg25)"/>
<rect x="262.2" y="738.45" width="58.8" height="9.75" fill="#000"/>
<rect x="262.2" y="740.75" width="57.0" height="5.9" fill="url(#bg26)"/>
<rect x="262.2" y="748.10" width="96.4" height="9.75" fill="#000"/>
<rect x="262.2" y="750.40" width="94.6" height="5.9" fill="url(#bg27)"/>
<rect x="262.2" y="757.75" width="57.1" height="9.75" fill="#000"/>
<rect x="262.2" y="760.05" width="55.3" height="5.9" fill="url(#bg28)"/>
<rect x="262.2" y="767.40" width="109.4" height="9.75" fill="#000"/>
<rect x="262.2" y="769.70" width="107.6" height="5.9" fill="url(#bg29)"/>
<rect x="262.2" y="777.05" width="63.1" height="9.75" fill="#000"/>
<rect x="262.2" y="779.35" width="61.3" height="5.9" fill="url(#bg30)"/>
<rect x="262.2" y="866.5" width="84.3" height="8.5" fill="#000"/>
<rect x="262.2" y="868" width="82.8" height="5.5" fill="url(#bgw)"/>
<text x="826.8" y="325.8" font-size="21.51" fill="#d2d2d2" textLength="66.3" lengthAdjust="spacingAndGlyphs">Delta L</text>
<rect x="776.6" y="334.6" width="205.1" height="398.6" fill="#222"/>
<rect x="768.6" y="333.6" width="8" height="2" fill="#e0e0e0"/>
<text x="746.8" y="341.6" font-size="20.35" fill="#d2d2d2" textLength="22.7" lengthAdjust="spacingAndGlyphs">15</text>
<rect x="776.6" y="400.0" width="205.1" height="2" fill="#8e8e8e"/>
<rect x="768.6" y="400.0" width="8" height="2" fill="#e0e0e0"/>
<text x="746.7" y="408.0" font-size="20.35" fill="#d2d2d2" textLength="22.7" lengthAdjust="spacingAndGlyphs">10</text>
<rect x="776.6" y="466.5" width="205.1" height="2" fill="#8e8e8e"/>
<rect x="768.6" y="466.5" width="8" height="2" fill="#e0e0e0"/>
<text x="758.1" y="474.5" font-size="20.35" fill="#d2d2d2" textLength="11.3" lengthAdjust="spacingAndGlyphs">5</text>
<rect x="776.6" y="532.9" width="205.1" height="2" fill="#8e8e8e"/>
<rect x="768.6" y="532.9" width="8" height="2" fill="#e0e0e0"/>
<text x="758.1" y="540.9" font-size="20.35" fill="#d2d2d2" textLength="11.3" lengthAdjust="spacingAndGlyphs">0</text>
<rect x="776.6" y="599.3" width="205.1" height="2" fill="#8e8e8e"/>
<rect x="768.6" y="599.3" width="8" height="2" fill="#e0e0e0"/>
<text x="751.3" y="607.3" font-size="20.35" fill="#d2d2d2" textLength="18.1" lengthAdjust="spacingAndGlyphs">-5</text>
<rect x="776.6" y="665.8" width="205.1" height="2" fill="#8e8e8e"/>
<rect x="768.6" y="665.8" width="8" height="2" fill="#e0e0e0"/>
<text x="739.9" y="673.8" font-size="20.35" fill="#d2d2d2" textLength="29.5" lengthAdjust="spacingAndGlyphs">-10</text>
<rect x="768.6" y="732.2" width="8" height="2" fill="#e0e0e0"/>
<text x="740.0" y="740.2" font-size="20.35" fill="#d2d2d2" textLength="29.5" lengthAdjust="spacingAndGlyphs">-15</text>
<rect x="776.6" y="334.6" width="205.1" height="398.6" fill="none" stroke="#a4a4a4" stroke-width="2"/>
<rect x="775.6" y="733.2" width="2" height="9" fill="#e0e0e0"/><rect x="980.7" y="733.2" width="2" height="9" fill="#e0e0e0"/>
<text x="852.6" y="756.1" font-size="20.35" fill="#d2d2d2" textLength="52.2" lengthAdjust="spacingAndGlyphs">100%</text>
<rect x="797.0" y="533" width="163.6" height="20.2" fill="#000"/>
<rect x="799.0" y="535" width="159.6" height="16.2" fill="url(#ybar)"/>
<text x="1105.3" y="325.8" font-size="21.51" fill="#d2d2d2" textLength="68.5" lengthAdjust="spacingAndGlyphs">Delta C</text>
<rect x="1056.0" y="334.6" width="205.1" height="398.6" fill="#222"/>
<rect x="1048.0" y="333.6" width="8" height="2" fill="#e0e0e0"/>
<text x="1026.2" y="341.6" font-size="20.35" fill="#d2d2d2" textLength="22.7" lengthAdjust="spacingAndGlyphs">15</text>
<rect x="1056.0" y="400.0" width="205.1" height="2" fill="#8e8e8e"/>
<rect x="1048.0" y="400.0" width="8" height="2" fill="#e0e0e0"/>
<text x="1026.1" y="408.0" font-size="20.35" fill="#d2d2d2" textLength="22.7" lengthAdjust="spacingAndGlyphs">10</text>
<rect x="1056.0" y="466.5" width="205.1" height="2" fill="#8e8e8e"/>
<rect x="1048.0" y="466.5" width="8" height="2" fill="#e0e0e0"/>
<text x="1037.5" y="474.5" font-size="20.35" fill="#d2d2d2" textLength="11.3" lengthAdjust="spacingAndGlyphs">5</text>
<rect x="1056.0" y="532.9" width="205.1" height="2" fill="#8e8e8e"/>
<rect x="1048.0" y="532.9" width="8" height="2" fill="#e0e0e0"/>
<text x="1037.5" y="540.9" font-size="20.35" fill="#d2d2d2" textLength="11.3" lengthAdjust="spacingAndGlyphs">0</text>
<rect x="1056.0" y="599.3" width="205.1" height="2" fill="#8e8e8e"/>
<rect x="1048.0" y="599.3" width="8" height="2" fill="#e0e0e0"/>
<text x="1030.7" y="607.3" font-size="20.35" fill="#d2d2d2" textLength="18.1" lengthAdjust="spacingAndGlyphs">-5</text>
<rect x="1056.0" y="665.8" width="205.1" height="2" fill="#8e8e8e"/>
<rect x="1048.0" y="665.8" width="8" height="2" fill="#e0e0e0"/>
<text x="1019.3" y="673.8" font-size="20.35" fill="#d2d2d2" textLength="29.5" lengthAdjust="spacingAndGlyphs">-10</text>
<rect x="1048.0" y="732.2" width="8" height="2" fill="#e0e0e0"/>
<text x="1019.4" y="740.2" font-size="20.35" fill="#d2d2d2" textLength="29.5" lengthAdjust="spacingAndGlyphs">-15</text>
<rect x="1056.0" y="334.6" width="205.1" height="398.6" fill="none" stroke="#a4a4a4" stroke-width="2"/>
<rect x="1055.0" y="733.2" width="2" height="9" fill="#e0e0e0"/><rect x="1260.1" y="733.2" width="2" height="9" fill="#e0e0e0"/>
<text x="1132.0" y="756.1" font-size="20.35" fill="#d2d2d2" textLength="52.2" lengthAdjust="spacingAndGlyphs">100%</text>
<rect x="1077.0" y="533" width="162.7" height="30.6" fill="#000"/>
<rect x="1079.0" y="535" width="158.7" height="26.6" fill="url(#ybar)"/>
<text x="1383.6" y="325.8" font-size="21.51" fill="#d2d2d2" textLength="70.1" lengthAdjust="spacingAndGlyphs">Delta H</text>
<rect x="1335.0" y="334.6" width="205.1" height="398.6" fill="#222"/>
<rect x="1327.0" y="333.6" width="8" height="2" fill="#e0e0e0"/>
<text x="1305.2" y="341.6" font-size="20.35" fill="#d2d2d2" textLength="22.7" lengthAdjust="spacingAndGlyphs">15</text>
<rect x="1335.0" y="400.0" width="205.1" height="2" fill="#8e8e8e"/>
<rect x="1327.0" y="400.0" width="8" height="2" fill="#e0e0e0"/>
<text x="1305.1" y="408.0" font-size="20.35" fill="#d2d2d2" textLength="22.7" lengthAdjust="spacingAndGlyphs">10</text>
<rect x="1335.0" y="466.5" width="205.1" height="2" fill="#8e8e8e"/>
<rect x="1327.0" y="466.5" width="8" height="2" fill="#e0e0e0"/>
<text x="1316.5" y="474.5" font-size="20.35" fill="#d2d2d2" textLength="11.3" lengthAdjust="spacingAndGlyphs">5</text>
<rect x="1335.0" y="532.9" width="205.1" height="2" fill="#8e8e8e"/>
<rect x="1327.0" y="532.9" width="8" height="2" fill="#e0e0e0"/>
<text x="1316.5" y="540.9" font-size="20.35" fill="#d2d2d2" textLength="11.3" lengthAdjust="spacingAndGlyphs">0</text>
<rect x="1335.0" y="599.3" width="205.1" height="2" fill="#8e8e8e"/>
<rect x="1327.0" y="599.3" width="8" height="2" fill="#e0e0e0"/>
<text x="1309.7" y="607.3" font-size="20.35" fill="#d2d2d2" textLength="18.1" lengthAdjust="spacingAndGlyphs">-5</text>
<rect x="1335.0" y="665.8" width="205.1" height="2" fill="#8e8e8e"/>
<rect x="1327.0" y="665.8" width="8" height="2" fill="#e0e0e0"/>
<text x="1298.3" y="673.8" font-size="20.35" fill="#d2d2d2" textLength="29.5" lengthAdjust="spacingAndGlyphs">-10</text>
<rect x="1327.0" y="732.2" width="8" height="2" fill="#e0e0e0"/>
<text x="1298.4" y="740.2" font-size="20.35" fill="#d2d2d2" textLength="29.5" lengthAdjust="spacingAndGlyphs">-15</text>
<rect x="1335.0" y="334.6" width="205.1" height="398.6" fill="none" stroke="#a4a4a4" stroke-width="2"/>
<rect x="1334.0" y="733.2" width="2" height="9" fill="#e0e0e0"/><rect x="1539.1" y="733.2" width="2" height="9" fill="#e0e0e0"/>
<text x="1411.0" y="756.1" font-size="20.35" fill="#d2d2d2" textLength="52.2" lengthAdjust="spacingAndGlyphs">100%</text>
<rect x="1356.4" y="533" width="162.0" height="20.0" fill="#000"/>
<rect x="1358.4" y="535" width="158.0" height="16.0" fill="url(#ybar)"/>
<rect x="730.5" y="770.5" width="837.5" height="230.3" fill="#000"/>
<rect x="760.0" y="780.2" width="140" height="187.5" fill="#fff"/>
<rect x="762.0" y="873" width="136" height="92.7" fill="#c0c19f"/>
<rect x="762.0" y="782.2" width="136" height="91.3" fill="#bfbb9b"/>
<text x="812.0" y="989.3" font-size="17.88" fill="#fff" textLength="35.8" lengthAdjust="spacingAndGlyphs">20%</text>
<rect x="923.0" y="780.2" width="140" height="187.5" fill="#fff"/>
<rect x="925.0" y="873" width="136" height="92.7" fill="#c0c17f"/>
<rect x="925.0" y="782.2" width="136" height="91.3" fill="#bfbc7e"/>
<text x="975.2" y="989.3" font-size="17.88" fill="#fff" textLength="35.8" lengthAdjust="spacingAndGlyphs">40%</text>
<rect x="1087.0" y="780.2" width="140" height="187.5" fill="#fff"/>
<rect x="1089.0" y="873" width="136" height="92.7" fill="#c0c15e"/>
<rect x="1089.0" y="782.2" width="136" height="91.3" fill="#bfbb5c"/>
<text x="1139.0" y="989.3" font-size="17.88" fill="#fff" textLength="35.8" lengthAdjust="spacingAndGlyphs">60%</text>
<rect x="1250.0" y="780.2" width="140" height="187.5" fill="#fff"/>
<rect x="1252.0" y="873" width="136" height="92.7" fill="#c0c12e"/>
<rect x="1252.0" y="782.2" width="136" height="91.3" fill="#c0bb2d"/>
<text x="1302.0" y="989.3" font-size="17.88" fill="#fff" textLength="35.8" lengthAdjust="spacingAndGlyphs">80%</text>
<rect x="1414.0" y="780.2" width="140" height="187.5" fill="#fff"/>
<rect x="1416.0" y="873" width="136" height="92.7" fill="#c7c600"/>
<rect x="1416.0" y="782.2" width="136" height="91.3" fill="#c4c218"/>
<text x="1460.7" y="989.3" font-size="17.88" fill="#fff" textLength="45.8" lengthAdjust="spacingAndGlyphs">100%</text>
<g transform="translate(750.7 845.5) rotate(-90)"><text x="-0.0" y="0.0" font-size="17.73" fill="#fff" textLength="50.2" lengthAdjust="spacingAndGlyphs">Actual</text></g>
<g transform="translate(750.7 951.3) rotate(-90)"><text x="-0.4" y="0.0" font-size="17.73" fill="#fff" textLength="48.8" lengthAdjust="spacingAndGlyphs">Target</text></g>
<text x="283.8" y="1066.0" font-size="42.88" fill="#ececec" textLength="306.4" lengthAdjust="spacingAndGlyphs">Avg dE2000: 2.6</text>
<text x="263.5" y="1122.0" font-size="42.44" fill="#ececec" textLength="345.8" lengthAdjust="spacingAndGlyphs">Max dE2000: 4.82</text>
<text x="219.5" y="1190.2" font-size="43.02" fill="#ececec" textLength="313.2" lengthAdjust="spacingAndGlyphs">Current Reading</text>
<text x="220.6" y="1240.0" font-size="34.30" fill="#ececec" textLength="146.1" lengthAdjust="spacingAndGlyphs">x: 0.4401</text>
<text x="440.9" y="1240.0" font-size="34.30" fill="#ececec" textLength="147.4" lengthAdjust="spacingAndGlyphs">y: 0.5313</text>
<text x="220.5" y="1298.0" font-size="34.88" fill="#ececec" textLength="158.0" lengthAdjust="spacingAndGlyphs">fL: 137.58</text>
<text x="219.4" y="1346.0" font-size="36.34" fill="#ececec" textLength="228.2" lengthAdjust="spacingAndGlyphs">cd/m²: 471.39</text>
<text x="800.8" y="1067.6" font-size="21.22" fill="#d2d2d2" textLength="118.9" lengthAdjust="spacingAndGlyphs">RGB Balance</text>
<rect x="705.2" y="1074.9" width="353.8" height="254.9" fill="#222"/>
<rect x="705.2" y="1100.9" width="353.8" height="2" fill="#8e8e8e"/>
<rect x="698.2" y="1100.9" width="7" height="2" fill="#e0e0e0"/>
<text x="661.8" y="1108.8" font-size="20.35" fill="#d2d2d2" textLength="34.0" lengthAdjust="spacingAndGlyphs">104</text>
<rect x="705.2" y="1151.9" width="353.8" height="2" fill="#8e8e8e"/>
<rect x="698.2" y="1151.9" width="7" height="2" fill="#e0e0e0"/>
<text x="662.2" y="1159.8" font-size="20.35" fill="#d2d2d2" textLength="34.0" lengthAdjust="spacingAndGlyphs">102</text>
<rect x="705.2" y="1202.9" width="353.8" height="2" fill="#8e8e8e"/>
<rect x="698.2" y="1202.9" width="7" height="2" fill="#e0e0e0"/>
<text x="662.0" y="1210.8" font-size="20.35" fill="#d2d2d2" textLength="34.0" lengthAdjust="spacingAndGlyphs">100</text>
<rect x="705.2" y="1253.9" width="353.8" height="2" fill="#8e8e8e"/>
<rect x="698.2" y="1253.9" width="7" height="2" fill="#e0e0e0"/>
<text x="673.4" y="1261.8" font-size="20.35" fill="#d2d2d2" textLength="22.7" lengthAdjust="spacingAndGlyphs">98</text>
<rect x="705.2" y="1304.9" width="353.8" height="2" fill="#8e8e8e"/>
<rect x="698.2" y="1304.9" width="7" height="2" fill="#e0e0e0"/>
<text x="673.4" y="1312.8" font-size="20.35" fill="#d2d2d2" textLength="22.7" lengthAdjust="spacingAndGlyphs">96</text>
<rect x="737.9" y="1219.2" width="95.8" height="110.6" fill="#000"/>
<rect x="739.9" y="1221.2" width="91.8" height="108.6" fill="url(#rb)"/>
<rect x="832.5" y="1246.1" width="95.0" height="83.7" fill="#000"/>
<rect x="834.5" y="1248.1" width="91.0" height="81.7" fill="url(#gb)"/>
<rect x="926.1" y="1147.8" width="96.4" height="182.0" fill="#000"/>
<rect x="928.1" y="1149.8" width="92.4" height="180.0" fill="url(#bb)"/>
<rect x="705.2" y="1074.9" width="353.8" height="254.9" fill="none" stroke="#a4a4a4" stroke-width="2"/>
<rect x="704.2" y="1329.8" width="2" height="8" fill="#e0e0e0"/><rect x="1058.0" y="1329.8" width="2" height="8" fill="#e0e0e0"/>
<text x="856.1" y="1352.6" font-size="19.33" fill="#d2d2d2" textLength="52.0" lengthAdjust="spacingAndGlyphs">100%</text>
<rect x="1086.6" y="1030" width="1032.4" height="335.5" fill="#080808"/>
<rect x="1089" y="1032" width="1027" height="20" fill="#2e2e2e"/>
<rect x="1089" y="1052" width="1027" height="20" fill="#141414"/>
<rect x="1089" y="1072.0" width="1027" height="36.6" fill="#404040"/>
<text x="1114.6" y="1098.9" font-size="23.55" font-weight="bold" fill="#f2f2f2" textLength="121.7" lengthAdjust="spacingAndGlyphs">x: CIE31</text>
<text x="1371.7" y="1098.9" font-size="23.26" fill="#f2f2f2" textLength="98.0" lengthAdjust="spacingAndGlyphs">0.3409</text>
<text x="1522.5" y="1098.9" font-size="23.26" fill="#f2f2f2" textLength="97.9" lengthAdjust="spacingAndGlyphs">0.3656</text>
<text x="1672.8" y="1098.9" font-size="23.26" fill="#f2f2f2" textLength="97.9" lengthAdjust="spacingAndGlyphs">0.3903</text>
<text x="1822.8" y="1098.9" font-size="23.26" fill="#f2f2f2" textLength="97.4" lengthAdjust="spacingAndGlyphs">0.4144</text>
<text x="1972.7" y="1098.9" font-size="23.26" fill="#f2f2f2" textLength="98.0" lengthAdjust="spacingAndGlyphs">0.4401</text>
<rect x="1089" y="1108.5" width="1027" height="36.6" fill="#808080"/>
<text x="1114.6" y="1135.3" font-size="23.55" font-weight="bold" fill="#f2f2f2" textLength="121.7" lengthAdjust="spacingAndGlyphs">y: CIE31</text>
<text x="1371.8" y="1135.3" font-size="23.26" fill="#f2f2f2" textLength="97.7" lengthAdjust="spacingAndGlyphs">0.3700</text>
<text x="1522.5" y="1135.3" font-size="23.26" fill="#f2f2f2" textLength="97.9" lengthAdjust="spacingAndGlyphs">0.4103</text>
<text x="1672.8" y="1135.3" font-size="23.26" fill="#f2f2f2" textLength="97.9" lengthAdjust="spacingAndGlyphs">0.4506</text>
<text x="1822.7" y="1135.3" font-size="23.26" fill="#f2f2f2" textLength="98.0" lengthAdjust="spacingAndGlyphs">0.4901</text>
<text x="1972.8" y="1135.3" font-size="23.26" fill="#f2f2f2" textLength="97.9" lengthAdjust="spacingAndGlyphs">0.5313</text>
<rect x="1089" y="1145.0" width="1027" height="36.6" fill="#404040"/>
<text x="1114.3" y="1171.7" font-size="23.55" font-weight="bold" fill="#f2f2f2" textLength="20.3" lengthAdjust="spacingAndGlyphs">Y</text>
<text x="1372.3" y="1171.7" font-size="23.26" fill="#f2f2f2" textLength="134.1" lengthAdjust="spacingAndGlyphs">489.1048</text>
<text x="1523.0" y="1171.7" font-size="23.26" fill="#f2f2f2" textLength="133.7" lengthAdjust="spacingAndGlyphs">482.8944</text>
<text x="1673.3" y="1171.7" font-size="23.26" fill="#f2f2f2" textLength="134.4" lengthAdjust="spacingAndGlyphs">478.3167</text>
<text x="1823.3" y="1171.7" font-size="23.26" fill="#f2f2f2" textLength="134.4" lengthAdjust="spacingAndGlyphs">474.4987</text>
<text x="1973.3" y="1171.7" font-size="23.26" fill="#f2f2f2" textLength="134.2" lengthAdjust="spacingAndGlyphs">471.3906</text>
<rect x="1089" y="1181.5" width="1027" height="36.6" fill="#808080"/>
<text x="1114.4" y="1208.1" font-size="23.55" font-weight="bold" fill="#f2f2f2" textLength="221.8" lengthAdjust="spacingAndGlyphs">Target x:CIE31</text>
<text x="1371.8" y="1208.1" font-size="23.26" fill="#f2f2f2" textLength="97.4" lengthAdjust="spacingAndGlyphs">0.3384</text>
<text x="1522.4" y="1208.1" font-size="23.26" fill="#f2f2f2" textLength="98.0" lengthAdjust="spacingAndGlyphs">0.3619</text>
<text x="1672.7" y="1208.1" font-size="23.26" fill="#f2f2f2" textLength="98.0" lengthAdjust="spacingAndGlyphs">0.3869</text>
<text x="1822.8" y="1208.1" font-size="23.26" fill="#f2f2f2" textLength="97.8" lengthAdjust="spacingAndGlyphs">0.4128</text>
<text x="1972.8" y="1208.1" font-size="23.26" fill="#f2f2f2" textLength="97.8" lengthAdjust="spacingAndGlyphs">0.4378</text>
<rect x="1089" y="1218.0" width="1027" height="36.6" fill="#404040"/>
<text x="1114.4" y="1244.5" font-size="23.55" font-weight="bold" fill="#f2f2f2" textLength="221.8" lengthAdjust="spacingAndGlyphs">Target y:CIE31</text>
<text x="1371.8" y="1244.5" font-size="23.26" fill="#f2f2f2" textLength="97.4" lengthAdjust="spacingAndGlyphs">0.3714</text>
<text x="1522.5" y="1244.5" font-size="23.26" fill="#f2f2f2" textLength="97.9" lengthAdjust="spacingAndGlyphs">0.4103</text>
<text x="1672.7" y="1244.5" font-size="23.26" fill="#f2f2f2" textLength="98.1" lengthAdjust="spacingAndGlyphs">0.4517</text>
<text x="1822.8" y="1244.5" font-size="23.26" fill="#f2f2f2" textLength="97.4" lengthAdjust="spacingAndGlyphs">0.4944</text>
<text x="1972.7" y="1244.5" font-size="23.26" fill="#f2f2f2" textLength="98.0" lengthAdjust="spacingAndGlyphs">0.5359</text>
<rect x="1089" y="1254.5" width="1027" height="36.6" fill="#808080"/>
<text x="1114.4" y="1280.9" font-size="23.55" font-weight="bold" fill="#f2f2f2" textLength="129.0" lengthAdjust="spacingAndGlyphs">Target Y</text>
<text x="1371.7" y="1280.9" font-size="23.26" fill="#f2f2f2" textLength="134.6" lengthAdjust="spacingAndGlyphs">523.3435</text>
<text x="1522.4" y="1280.9" font-size="23.26" fill="#f2f2f2" textLength="134.9" lengthAdjust="spacingAndGlyphs">513.9582</text>
<text x="1672.7" y="1280.9" font-size="23.26" fill="#f2f2f2" textLength="134.7" lengthAdjust="spacingAndGlyphs">506.0193</text>
<text x="1823.3" y="1280.9" font-size="23.26" fill="#f2f2f2" textLength="134.3" lengthAdjust="spacingAndGlyphs">499.4109</text>
<text x="1973.3" y="1280.9" font-size="23.26" fill="#f2f2f2" textLength="134.1" lengthAdjust="spacingAndGlyphs">494.1275</text>
<rect x="1089" y="1291.0" width="1027" height="36.6" fill="#404040"/>
<text x="1113.5" y="1317.3" font-size="23.55" font-weight="bold" fill="#f2f2f2" textLength="129.2" lengthAdjust="spacingAndGlyphs">ΔE 2000</text>
<text x="1371.4" y="1317.3" font-size="23.26" fill="#f2f2f2" textLength="98.4" lengthAdjust="spacingAndGlyphs">2.2157</text>
<text x="1521.2" y="1317.3" font-size="23.26" fill="#f2f2f2" textLength="99.2" lengthAdjust="spacingAndGlyphs">1.7519</text>
<text x="1671.5" y="1317.3" font-size="23.26" fill="#f2f2f2" textLength="98.6" lengthAdjust="spacingAndGlyphs">1.5754</text>
<text x="1821.5" y="1317.3" font-size="23.26" fill="#f2f2f2" textLength="99.3" lengthAdjust="spacingAndGlyphs">1.4881</text>
<text x="1971.5" y="1317.3" font-size="23.26" fill="#f2f2f2" textLength="99.3" lengthAdjust="spacingAndGlyphs">1.3947</text>
<rect x="1089" y="1327.5" width="1027" height="36.6" fill="#808080"/>
<text x="1113.5" y="1353.7" font-size="23.55" font-weight="bold" fill="#f2f2f2" textLength="103.0" lengthAdjust="spacingAndGlyphs">ΔE ITP</text>
<text x="1371.7" y="1353.7" font-size="23.26" fill="#f2f2f2" textLength="97.4" lengthAdjust="spacingAndGlyphs">5.5564</text>
<text x="1522.4" y="1353.7" font-size="23.26" fill="#f2f2f2" textLength="97.9" lengthAdjust="spacingAndGlyphs">5.2753</text>
<text x="1673.3" y="1353.7" font-size="23.26" fill="#f2f2f2" textLength="97.4" lengthAdjust="spacingAndGlyphs">4.7699</text>
<text x="1823.3" y="1353.7" font-size="23.26" fill="#f2f2f2" textLength="97.5" lengthAdjust="spacingAndGlyphs">4.7021</text>
<text x="1973.3" y="1353.7" font-size="23.26" fill="#f2f2f2" textLength="97.3" lengthAdjust="spacingAndGlyphs">4.8283</text>
<text x="1410.0" y="1060.0" font-size="22.24" fill="#f4f4f4" textLength="58.5" lengthAdjust="spacingAndGlyphs">20%</text>
<text x="1561.1" y="1060.0" font-size="22.24" fill="#f4f4f4" textLength="57.7" lengthAdjust="spacingAndGlyphs">40%</text>
<text x="1710.6" y="1060.0" font-size="22.24" fill="#f4f4f4" textLength="58.5" lengthAdjust="spacingAndGlyphs">60%</text>
<text x="1861.1" y="1060.0" font-size="22.24" fill="#f4f4f4" textLength="58.3" lengthAdjust="spacingAndGlyphs">80%</text>
<text x="2002.5" y="1060.0" font-size="22.24" fill="#f4f4f4" textLength="75.3" lengthAdjust="spacingAndGlyphs">100%</text>
<rect x="1577" y="231" width="983" height="789.5" fill="#1c1c1c"/>
<rect x="1587" y="241" width="962.8" height="770" fill="#333"/>
<text x="2008.3" y="267.7" font-size="22.09" fill="#d2d2d2" textLength="121.4" lengthAdjust="spacingAndGlyphs">CIE 1976 u'v'</text>
<rect x="1640" y="274" width="905" height="696" fill="#222"/>
<g clip-path="url(#plotclip)"><g clip-path="url(#locclip)"><g filter="url(#bl)"><path fill="#00fc00" d="M1632 272h16v16h-16zM1648 272h16v16h-16zM1664 272h16v16h-16zM1680 272h16v16h-16zM1696 272h16v16h-16zM1712 272h16v16h-16zM1728 272h16v16h-16zM1744 272h16v16h-16zM1760 272h16v16h-16zM1776 272h16v16h-16zM1792 272h16v16h-16zM1808 272h16v16h-16zM1632 288h16v16h-16zM1648 288h16v16h-16zM1664 288h16v16h-16zM1680 288h16v16h-16zM1696 288h16v16h-16zM1712 288h16v16h-16zM1728 288h16v16h-16zM1744 288h16v16h-16zM1760 288h16v16h-16zM1776 288h16v16h-16zM1792 288h16v16h-16zM1808 288h16v16h-16zM1824 296h8v8h-8zM1720 304h8v8h-8zM1728 304h8v8h-8zM1736 304h8v8h-8zM1744 304h8v8h-8zM1752 304h8v8h-8zM1760 304h8v8h-8zM1768 304h8v8h-8zM1776 304h8v8h-8zM1784 304h8v8h-8zM1792 304h8v8h-8zM1800 304h8v8h-8zM1808 304h16v16h-16zM1824 304h8v8h-8zM1824 312h8v8h-8z"/>
<path fill="#0cfc00" d="M1824 272h8v8h-8zM1832 312h8v8h-8z"/>
<path fill="#18fc00" d="M1832 272h8v8h-8zM1832 280h8v8h-8z"/>
<path fill="#06fc00" d="M1824 280h8v8h-8zM1824 288h8v8h-8z"/>
<path fill="#2afc00" d="M1840 272h8v8h-8z"/>
<path fill="#36fc00" d="M1848 272h8v8h-8zM1848 280h8v8h-8z"/>
<path fill="#24fc00" d="M1840 280h8v8h-8zM1840 288h8v8h-8zM1840 296h8v8h-8z"/>
<path fill="#42fc00" d="M1856 272h8v8h-8zM1856 280h8v8h-8zM1856 288h8v8h-8zM1856 296h8v8h-8z"/>
<path fill="#54fc00" d="M1864 272h8v8h-8zM1864 280h8v8h-8z"/>
<path fill="#60fc00" d="M1872 280h8v8h-8zM1872 288h8v8h-8zM1872 296h8v8h-8zM1872 304h8v8h-8z"/>
<path fill="#72fc00" d="M1880 280h8v8h-8z"/>
<path fill="#7efc00" d="M1888 280h8v8h-8zM1888 288h8v8h-8zM1888 296h8v8h-8zM1888 304h8v8h-8zM1888 312h8v8h-8z"/>
<path fill="#90fc00" d="M1896 280h8v8h-8zM1896 288h8v8h-8zM1896 296h8v8h-8zM1896 304h8v8h-8zM1896 312h8v8h-8zM1896 320h8v8h-8z"/>
<path fill="#9cfc00" d="M1904 280h8v8h-8zM1904 288h8v8h-8zM1904 296h8v8h-8zM1904 304h8v8h-8zM1904 312h8v8h-8zM1904 320h8v8h-8z"/>
<path fill="#aefc00" d="M1912 280h8v8h-8zM1912 288h8v8h-8zM1912 296h8v8h-8zM1912 304h8v8h-8zM1912 312h8v8h-8zM1912 320h8v8h-8z"/>
<path fill="#c0fc00" d="M1920 280h8v8h-8zM1920 288h8v8h-8zM1920 296h8v8h-8zM1920 304h8v8h-8zM1920 312h8v8h-8zM1920 320h8v8h-8z"/>
<path fill="#d2fc00" d="M1928 280h8v8h-8zM1928 288h8v8h-8zM1928 296h8v8h-8zM1928 304h8v8h-8zM1928 312h8v8h-8zM1928 320h8v8h-8z"/>
<path fill="#e4fc00" d="M1936 280h8v8h-8zM1936 288h8v8h-8zM1936 296h8v8h-8zM1936 304h8v8h-8zM1936 312h8v8h-8z"/>
<path fill="#12fc00" d="M1832 288h8v8h-8zM1832 296h8v8h-8zM1832 304h8v8h-8z"/>
<path fill="#30fc00" d="M1848 288h8v8h-8zM1848 296h8v8h-8zM1848 304h8v8h-8zM1848 312h8v8h-8z"/>
<path fill="#4efc00" d="M1864 288h8v8h-8zM1864 296h8v8h-8zM1864 304h8v8h-8zM1864 312h8v8h-8z"/>
<path fill="#6cfc00" d="M1880 288h8v8h-8zM1880 296h8v8h-8zM1880 304h8v8h-8zM1880 312h8v8h-8z"/>
<path fill="#f6fc00" d="M1944 288h8v8h-8zM1944 296h8v8h-8zM1944 304h8v8h-8z"/>
<path fill="#fcf600" d="M1952 288h8v8h-8zM1952 296h8v8h-8zM1952 304h8v8h-8z"/>
<path fill="#fce400" d="M1960 288h8v8h-8zM1960 296h8v8h-8zM1960 304h8v8h-8z"/>
<path fill="#fcd800" d="M1968 288h8v8h-8z"/>
<path fill="#fccc00" d="M1976 288h8v8h-8zM1968 320h8v8h-8z"/>
<path fill="#fcd200" d="M1968 296h8v8h-8zM1968 304h8v8h-8zM1968 312h8v8h-8z"/>
<path fill="#fcc600" d="M1976 296h8v8h-8zM1976 304h8v8h-8zM1976 312h8v8h-8z"/>
<path fill="#fcba00" d="M1984 288h8v8h-8zM1984 296h8v8h-8zM1984 304h8v8h-8z"/>
<path fill="#fcb400" d="M1992 288h8v8h-8zM1984 312h8v8h-8zM1984 320h8v8h-8zM1984 328h8v8h-8z"/>
<path fill="#fcae00" d="M1992 296h8v8h-8zM1992 304h8v8h-8zM1992 312h8v8h-8z"/>
<path fill="#fca800" d="M2000 288h8v8h-8zM2000 296h8v8h-8zM1992 320h8v8h-8zM1992 328h8v8h-8z"/>
<path fill="#fc9c00" d="M2008 288h8v8h-8zM2008 296h8v8h-8zM2008 304h8v8h-8zM2000 328h8v8h-8z"/>
<path fill="#fc9600" d="M2016 296h8v8h-8zM2008 312h8v8h-8zM2008 320h8v8h-8zM2008 328h8v8h-8z"/>
<path fill="#fc8a00" d="M2024 296h8v8h-8zM2024 304h8v8h-8zM2016 328h8v8h-8z"/>
<path fill="#fc8400" d="M2032 296h8v8h-8zM2024 312h8v8h-8zM2032 304h8v8h-8zM2024 320h8v8h-8zM2024 328h8v8h-8z"/>
<path fill="#fc7e00" d="M2040 296h8v8h-8zM2032 312h8v8h-8zM2032 320h8v8h-8zM2032 328h8v8h-8z"/>
<path fill="#fc7800" d="M2048 296h8v8h-8zM2040 304h8v8h-8zM2040 312h8v8h-8zM2040 320h8v8h-8z"/>
<path fill="#fc7200" d="M2056 296h8v8h-8zM2048 304h8v8h-8zM2048 312h8v8h-8zM2040 328h8v8h-8zM2048 320h8v8h-8z"/>
<path fill="#fc6c00" d="M2064 296h8v8h-8zM2056 304h8v8h-8zM2056 312h8v8h-8zM2056 320h8v8h-8zM2048 328h8v8h-8z"/>
<path fill="#fc6600" d="M2072 296h8v8h-8zM2064 304h8v8h-8zM2064 312h8v8h-8zM2056 328h8v8h-8zM2064 320h8v8h-8zM2056 336h8v8h-8z"/>
<path fill="#00fc0c" d="M1632 304h8v8h-8zM1640 304h8v8h-8zM1648 304h8v8h-8zM1656 304h8v8h-8zM1664 304h8v8h-8zM1672 304h8v8h-8zM1736 312h8v8h-8zM1744 312h8v8h-8zM1752 312h8v8h-8zM1760 312h8v8h-8zM1768 312h8v8h-8z"/>
<path fill="#00fc18" d="M1632 312h8v8h-8zM1640 312h8v8h-8zM1648 312h8v8h-8zM1656 312h8v8h-8zM1664 312h8v8h-8zM1672 312h8v8h-8zM1736 320h8v8h-8zM1744 320h8v8h-8zM1752 320h8v8h-8zM1760 320h8v8h-8zM1768 320h8v8h-8zM1776 320h8v8h-8zM1784 320h8v8h-8z"/>
<path fill="#00fc06" d="M1680 304h8v8h-8zM1688 304h8v8h-8zM1696 304h8v8h-8zM1704 304h8v8h-8zM1712 304h8v8h-8zM1776 312h8v8h-8zM1784 312h8v8h-8zM1792 312h8v8h-8zM1800 312h8v8h-8z"/>
<path fill="#00fc12" d="M1680 312h8v8h-8zM1688 312h8v8h-8zM1696 312h8v8h-8zM1704 312h8v8h-8zM1712 312h8v8h-8zM1720 312h8v8h-8zM1728 312h8v8h-8zM1792 320h8v8h-8zM1800 320h8v8h-8zM1808 320h8v8h-8zM1816 320h8v8h-8zM1824 320h8v8h-8z"/>
<path fill="#1efc00" d="M1840 304h8v8h-8zM1840 312h8v8h-8z"/>
<path fill="#3cfc00" d="M1856 304h8v8h-8zM1856 312h8v8h-8z"/>
<path fill="#5afc00" d="M1872 312h8v8h-8z"/>
<path fill="#fcfc00" d="M1944 312h8v8h-8zM1944 320h8v8h-8z"/>
<path fill="#fcf000" d="M1952 312h8v8h-8zM1952 320h8v8h-8z"/>
<path fill="#fcde00" d="M1960 312h8v8h-8zM1960 320h8v8h-8z"/>
<path fill="#fca200" d="M2000 304h8v8h-8zM2000 312h8v8h-8zM2000 320h8v8h-8z"/>
<path fill="#fc9000" d="M2016 304h8v8h-8zM2016 312h8v8h-8zM2016 320h8v8h-8z"/>
<path fill="#fc6000" d="M2072 304h8v8h-8zM2072 312h8v8h-8zM2080 304h8v8h-8zM2072 320h8v8h-8zM2064 328h8v8h-8zM2064 336h8v8h-8z"/>
<path fill="#fc5a00" d="M2088 304h8v8h-8zM2080 312h8v8h-8zM2072 328h8v8h-8zM2080 320h8v8h-8zM2080 328h8v8h-8zM2072 336h8v8h-8z"/>
<path fill="#fc5400" d="M2088 312h8v8h-8zM2096 304h8v8h-8zM2096 312h8v8h-8zM2088 320h8v8h-8zM2088 328h8v8h-8zM2080 336h8v8h-8zM2088 336h8v8h-8z"/>
<path fill="#fc4e00" d="M2104 304h8v8h-8zM2104 312h8v8h-8zM2096 320h8v8h-8zM2104 320h8v8h-8zM2096 328h8v8h-8zM2096 336h8v8h-8z"/>
<path fill="#fc4800" d="M2112 304h16v16h-16zM2104 328h8v8h-8zM2112 320h16v16h-16zM2104 336h8v8h-8z"/>
<path fill="#fc4200" d="M2128 304h16v16h-16zM2112 336h16v16h-16z"/>
<path fill="#fc3c00" d="M2144 304h16v16h-16zM2128 320h16v16h-16zM2128 336h16v16h-16z"/>
<path fill="#fc3600" d="M2160 304h16v16h-16zM2144 320h16v16h-16zM2144 336h16v16h-16z"/>
<path fill="#fc3000" d="M2176 304h16v16h-16zM2160 320h16v16h-16zM2160 336h16v16h-16z"/>
<path fill="#fc2a00" d="M2192 304h16v16h-16zM2176 320h16v16h-16zM2176 336h16v16h-16z"/>
<path fill="#fc2400" d="M2208 304h16v16h-16zM2192 320h16v16h-16zM2208 320h16v16h-16zM2192 336h16v16h-16z"/>
<path fill="#00fc24" d="M1632 320h8v8h-8zM1640 320h8v8h-8zM1648 320h8v8h-8zM1656 320h8v8h-8zM1664 320h8v8h-8zM1744 328h8v8h-8zM1752 328h8v8h-8zM1760 328h8v8h-8zM1768 328h8v8h-8zM1776 328h8v8h-8zM1784 328h8v8h-8zM1792 328h8v8h-8zM1800 328h8v8h-8z"/>
<path fill="#00fc30" d="M1632 328h8v8h-8zM1640 328h8v8h-8zM1648 328h8v8h-8zM1752 336h8v8h-8zM1760 336h8v8h-8zM1768 336h8v8h-8zM1776 336h8v8h-8zM1784 336h8v8h-8zM1792 336h8v8h-8zM1800 336h8v8h-8zM1808 336h8v8h-8zM1816 336h8v8h-8zM1824 336h8v8h-8z"/>
<path fill="#00fc2a" d="M1656 328h8v8h-8zM1664 328h8v8h-8zM1672 328h8v8h-8zM1680 328h8v8h-8zM1688 328h8v8h-8zM1696 328h8v8h-8zM1704 328h8v8h-8zM1712 328h8v8h-8zM1720 328h8v8h-8zM1728 328h8v8h-8zM1736 328h8v8h-8z"/>
<path fill="#00fc1e" d="M1672 320h8v8h-8zM1680 320h8v8h-8zM1688 320h8v8h-8zM1696 320h8v8h-8zM1704 320h8v8h-8zM1712 320h8v8h-8zM1720 320h8v8h-8zM1728 320h8v8h-8zM1808 328h8v8h-8zM1816 328h8v8h-8zM1824 328h8v8h-8z"/>
<path fill="#0cfc0c" d="M1832 320h8v8h-8z"/>
<path fill="#06fc1e" d="M1832 328h8v8h-8z"/>
<path fill="#1efc0c" d="M1840 320h8v8h-8z"/>
<path fill="#2afc0c" d="M1848 320h8v8h-8z"/>
<path fill="#18fc1e" d="M1840 328h8v8h-8z"/>
<path fill="#2afc1e" d="M1848 328h8v8h-8z"/>
<path fill="#3cfc0c" d="M1856 320h8v8h-8z"/>
<path fill="#4efc0c" d="M1864 320h8v8h-8z"/>
<path fill="#3cfc18" d="M1856 328h8v8h-8z"/>
<path fill="#48fc18" d="M1864 328h8v8h-8z"/>
<path fill="#5afc06" d="M1872 320h8v8h-8z"/>
<path fill="#6cfc06" d="M1880 320h8v8h-8z"/>
<path fill="#5afc18" d="M1872 328h8v8h-8z"/>
<path fill="#6cfc18" d="M1880 328h8v8h-8z"/>
<path fill="#7efc06" d="M1888 320h8v8h-8z"/>
<path fill="#7efc18" d="M1888 328h8v8h-8z"/>
<path fill="#90fc12" d="M1896 328h8v8h-8z"/>
<path fill="#9cfc12" d="M1904 328h8v8h-8z"/>
<path fill="#aefc12" d="M1912 328h8v8h-8z"/>
<path fill="#c0fc12" d="M1920 328h8v8h-8z"/>
<path fill="#d8fc12" d="M1928 328h8v8h-8z"/>
<path fill="#eafc00" d="M1936 320h8v8h-8z"/>
<path fill="#eafc0c" d="M1936 328h8v8h-8z"/>
<path fill="#fcfc0c" d="M1944 328h8v8h-8z"/>
<path fill="#fcf00c" d="M1952 328h8v8h-8z"/>
<path fill="#fcde06" d="M1960 328h8v8h-8z"/>
<path fill="#fcc000" d="M1976 320h8v8h-8z"/>
<path fill="#fccc06" d="M1968 328h8v8h-8z"/>
<path fill="#fcc006" d="M1976 328h8v8h-8z"/>
<path fill="#fc1e00" d="M2224 320h16v16h-16zM2208 336h16v16h-16z"/>
<path fill="#fc1800" d="M2240 320h16v16h-16zM2224 336h16v16h-16zM2240 336h16v16h-16zM2216 352h8v8h-8zM2224 352h8v8h-8zM2232 352h8v8h-8z"/>
<path fill="#fc1200" d="M2256 320h16v16h-16zM2272 320h16v16h-16zM2256 336h16v16h-16z"/>
<path fill="#fc0c00" d="M2288 320h16v16h-16zM2304 320h16v16h-16zM2272 336h16v16h-16zM2288 336h16v16h-16zM2256 352h16v16h-16zM2272 352h16v16h-16z"/>
<path fill="#fc0600" d="M2320 320h16v16h-16zM2304 336h16v16h-16zM2288 352h16v16h-16z"/>
<path fill="#fc0000" d="M2336 320h16v16h-16zM2352 320h16v16h-16zM2320 336h16v16h-16zM2336 336h16v16h-16zM2352 336h16v16h-16zM2368 336h16v16h-16zM2384 336h16v16h-16zM2400 336h16v16h-16zM2416 336h16v16h-16zM2432 336h16v16h-16zM2448 336h16v16h-16zM2464 336h16v16h-16zM2480 336h16v16h-16zM2496 336h16v16h-16zM2304 352h16v16h-16zM2320 352h16v16h-16zM2336 352h16v16h-16zM2352 352h16v16h-16zM2368 352h16v16h-16zM2384 352h16v16h-16zM2400 352h16v16h-16zM2416 352h16v16h-16zM2432 352h16v16h-16zM2448 352h16v16h-16zM2464 352h16v16h-16zM2480 352h16v16h-16zM2496 352h16v16h-16zM2512 352h16v16h-16zM2528 352h16v16h-16zM2544 352h16v16h-16zM2416 368h16v16h-16zM2432 368h16v16h-16zM2448 368h16v16h-16zM2464 368h16v16h-16zM2480 368h16v16h-16zM2496 368h16v16h-16zM2512 368h16v16h-16zM2528 368h16v16h-16zM2544 368h16v16h-16z"/>
<path fill="#00fc36" d="M1632 336h8v8h-8zM1640 336h8v8h-8zM1648 336h8v8h-8zM1656 336h8v8h-8zM1664 336h8v8h-8zM1672 336h8v8h-8zM1680 336h8v8h-8zM1688 336h8v8h-8zM1696 336h8v8h-8zM1704 336h8v8h-8zM1712 336h8v8h-8zM1720 336h8v8h-8zM1728 336h8v8h-8zM1736 336h8v8h-8zM1744 336h8v8h-8z"/>
<path fill="#00fc42" d="M1632 344h8v8h-8zM1640 344h8v8h-8zM1648 344h8v8h-8zM1656 344h8v8h-8zM1664 344h8v8h-8zM1672 344h8v8h-8zM1680 344h8v8h-8zM1688 344h8v8h-8zM1696 344h8v8h-8zM1704 344h8v8h-8zM1712 344h8v8h-8zM1720 344h8v8h-8zM1728 344h8v8h-8zM1736 344h8v8h-8zM1744 344h8v8h-8zM1752 344h8v8h-8z"/>
<path fill="#00fc3c" d="M1760 344h8v8h-8zM1768 344h8v8h-8zM1776 344h8v8h-8zM1784 344h8v8h-8zM1792 344h8v8h-8zM1800 344h8v8h-8zM1808 344h8v8h-8zM1816 344h8v8h-8zM1824 344h8v8h-8zM1832 344h8v8h-8z"/>
<path fill="#06fc2a" d="M1832 336h8v8h-8z"/>
<path fill="#18fc2a" d="M1840 336h8v8h-8z"/>
<path fill="#2afc2a" d="M1848 336h8v8h-8z"/>
<path fill="#12fc3c" d="M1840 344h8v8h-8z"/>
<path fill="#24fc3c" d="M1848 344h8v8h-8z"/>
<path fill="#36fc2a" d="M1856 336h8v8h-8z"/>
<path fill="#48fc2a" d="M1864 336h8v8h-8z"/>
<path fill="#36fc3c" d="M1856 344h8v8h-8z"/>
<path fill="#48fc3c" d="M1864 344h8v8h-8z"/>
<path fill="#5afc2a" d="M1872 336h8v8h-8z"/>
<path fill="#6cfc2a" d="M1880 336h8v8h-8z"/>
<path fill="#5afc36" d="M1872 344h8v8h-8z"/>
<path fill="#6cfc36" d="M1880 344h8v8h-8z"/>
<path fill="#7efc2a" d="M1888 336h8v8h-8z"/>
<path fill="#8afc24" d="M1896 336h8v8h-8z"/>
<path fill="#78fc36" d="M1888 344h8v8h-8z"/>
<path fill="#8afc36" d="M1896 344h8v8h-8z"/>
<path fill="#9cfc24" d="M1904 336h8v8h-8z"/>
<path fill="#aefc24" d="M1912 336h8v8h-8z"/>
<path fill="#9cfc36" d="M1904 344h8v8h-8z"/>
<path fill="#b4fc36" d="M1912 344h8v8h-8z"/>
<path fill="#c6fc24" d="M1920 336h8v8h-8z"/>
<path fill="#d8fc24" d="M1928 336h8v8h-8z"/>
<path fill="#c6fc36" d="M1920 344h8v8h-8z"/>
<path fill="#d8fc36" d="M1928 344h8v8h-8z"/>
<path fill="#eafc24" d="M1936 336h8v8h-8z"/>
<path fill="#fcfc1e" d="M1944 336h8v8h-8z"/>
<path fill="#eafc36" d="M1936 344h8v8h-8z"/>
<path fill="#fcfc30" d="M1944 344h8v8h-8z"/>
<path fill="#fcea1e" d="M1952 336h8v8h-8z"/>
<path fill="#fcd818" d="M1960 336h8v8h-8z"/>
<path fill="#fcea30" d="M1952 344h8v8h-8z"/>
<path fill="#fcd82a" d="M1960 344h8v8h-8z"/>
<path fill="#fccc18" d="M1968 336h8v8h-8z"/>
<path fill="#fcba12" d="M1976 336h8v8h-8z"/>
<path fill="#fcc624" d="M1968 344h8v8h-8z"/>
<path fill="#fcba24" d="M1976 344h8v8h-8z"/>
<path fill="#fcae12" d="M1984 336h8v8h-8z"/>
<path fill="#fca812" d="M1992 336h8v8h-8z"/>
<path fill="#fcae1e" d="M1984 344h8v8h-8z"/>
<path fill="#fca21e" d="M1992 344h8v8h-8z"/>
<path fill="#fc9c0c" d="M2000 336h8v8h-8z"/>
<path fill="#fc900c" d="M2008 336h8v8h-8z"/>
<path fill="#fc9618" d="M2000 344h8v8h-8z"/>
<path fill="#fc9018" d="M2008 344h8v8h-8z"/>
<path fill="#fc8a0c" d="M2016 336h8v8h-8z"/>
<path fill="#fc7e06" d="M2024 336h8v8h-8z"/>
<path fill="#fc8418" d="M2016 344h8v8h-8z"/>
<path fill="#fc7e12" d="M2024 344h8v8h-8z"/>
<path fill="#fc7806" d="M2032 336h8v8h-8z"/>
<path fill="#fc7206" d="M2040 336h8v8h-8z"/>
<path fill="#fc7812" d="M2032 344h8v8h-8z"/>
<path fill="#fc7212" d="M2040 344h8v8h-8z"/>
<path fill="#fc6c06" d="M2048 336h8v8h-8z"/>
<path fill="#fc6c12" d="M2048 344h8v8h-8z"/>
<path fill="#fc660c" d="M2056 344h8v8h-8z"/>
<path fill="#fc600c" d="M2064 344h8v8h-8z"/>
<path fill="#fc5a0c" d="M2072 344h8v8h-8z"/>
<path fill="#fc540c" d="M2080 344h8v8h-8z"/>
<path fill="#fc4e06" d="M2088 344h8v8h-8z"/>
<path fill="#fc4806" d="M2096 344h8v8h-8zM2104 344h8v8h-8z"/>
<path fill="#00fc4e" d="M1632 352h8v8h-8zM1640 352h8v8h-8zM1648 352h8v8h-8zM1656 352h8v8h-8zM1664 352h8v8h-8zM1672 352h8v8h-8zM1680 352h8v8h-8zM1688 352h8v8h-8zM1696 352h8v8h-8zM1704 352h8v8h-8zM1712 352h8v8h-8zM1720 352h8v8h-8zM1728 352h8v8h-8zM1736 352h8v8h-8zM1744 352h8v8h-8zM1752 352h8v8h-8zM1760 352h8v8h-8zM1768 352h8v8h-8zM1776 352h8v8h-8zM1784 352h8v8h-8zM1792 352h8v8h-8z"/>
<path fill="#00fc5a" d="M1632 360h8v8h-8zM1640 360h8v8h-8zM1648 360h8v8h-8zM1656 360h8v8h-8zM1664 360h8v8h-8zM1672 360h8v8h-8zM1680 360h8v8h-8zM1688 360h8v8h-8zM1696 360h8v8h-8zM1704 360h8v8h-8zM1712 360h8v8h-8zM1720 360h8v8h-8zM1728 360h8v8h-8zM1736 360h8v8h-8zM1744 360h8v8h-8zM1752 360h8v8h-8zM1760 360h8v8h-8zM1768 360h8v8h-8zM1776 360h8v8h-8zM1784 360h8v8h-8zM1792 360h8v8h-8zM1800 360h8v8h-8zM1808 360h8v8h-8zM1816 360h8v8h-8zM1824 360h8v8h-8zM1832 360h8v8h-8z"/>
<path fill="#00fc48" d="M1800 352h8v8h-8zM1808 352h8v8h-8zM1816 352h8v8h-8zM1824 352h8v8h-8zM1832 352h8v8h-8z"/>
<path fill="#12fc48" d="M1840 352h8v8h-8z"/>
<path fill="#24fc48" d="M1848 352h8v8h-8z"/>
<path fill="#12fc5a" d="M1840 360h8v8h-8z"/>
<path fill="#24fc5a" d="M1848 360h8v8h-8z"/>
<path fill="#36fc48" d="M1856 352h8v8h-8z"/>
<path fill="#48fc48" d="M1864 352h8v8h-8z"/>
<path fill="#36fc5a" d="M1856 360h8v8h-8z"/>
<path fill="#42fc5a" d="M1864 360h8v8h-8z"/>
<path fill="#5afc48" d="M1872 352h8v8h-8z"/>
<path fill="#66fc48" d="M1880 352h8v8h-8z"/>
<path fill="#54fc5a" d="M1872 360h8v8h-8z"/>
<path fill="#66fc5a" d="M1880 360h8v8h-8z"/>
<path fill="#78fc48" d="M1888 352h8v8h-8z"/>
<path fill="#8afc48" d="M1896 352h8v8h-8z"/>
<path fill="#78fc5a" d="M1888 360h8v8h-8z"/>
<path fill="#8afc5a" d="M1896 360h8v8h-8z"/>
<path fill="#9cfc48" d="M1904 352h8v8h-8z"/>
<path fill="#b4fc48" d="M1912 352h8v8h-8z"/>
<path fill="#9cfc5a" d="M1904 360h8v8h-8z"/>
<path fill="#b4fc5a" d="M1912 360h8v8h-8z"/>
<path fill="#c6fc48" d="M1920 352h8v8h-8z"/>
<path fill="#d8fc48" d="M1928 352h8v8h-8z"/>
<path fill="#c6fc5a" d="M1920 360h8v8h-8z"/>
<path fill="#d8fc5a" d="M1928 360h8v8h-8z"/>
<path fill="#f0fc48" d="M1936 352h8v8h-8z"/>
<path fill="#fcfc48" d="M1944 352h8v8h-8z"/>
<path fill="#f0fc5a" d="M1936 360h8v8h-8z"/>
<path fill="#fcf65a" d="M1944 360h8v8h-8z"/>
<path fill="#fcea42" d="M1952 352h8v8h-8z"/>
<path fill="#fcd83c" d="M1960 352h8v8h-8z"/>
<path fill="#fce44e" d="M1952 360h8v8h-8z"/>
<path fill="#fcd248" d="M1960 360h8v8h-8z"/>
<path fill="#fcc636" d="M1968 352h8v8h-8z"/>
<path fill="#fcba30" d="M1976 352h8v8h-8z"/>
<path fill="#fcc648" d="M1968 360h8v8h-8z"/>
<path fill="#fcb442" d="M1976 360h8v8h-8z"/>
<path fill="#fcae30" d="M1984 352h8v8h-8z"/>
<path fill="#fca22a" d="M1992 352h8v8h-8z"/>
<path fill="#fca83c" d="M1984 360h8v8h-8z"/>
<path fill="#fc9c36" d="M1992 360h8v8h-8z"/>
<path fill="#fc962a" d="M2000 352h8v8h-8z"/>
<path fill="#fc9024" d="M2008 352h8v8h-8z"/>
<path fill="#fc9636" d="M2000 360h8v8h-8z"/>
<path fill="#fc8a30" d="M2008 360h8v8h-8z"/>
<path fill="#fc8424" d="M2016 352h8v8h-8z"/>
<path fill="#fc7e1e" d="M2024 352h8v8h-8z"/>
<path fill="#fc8430" d="M2016 360h8v8h-8z"/>
<path fill="#fc782a" d="M2024 360h8v8h-8z"/>
<path fill="#fc781e" d="M2032 352h8v8h-8z"/>
<path fill="#fc6c1e" d="M2040 352h8v8h-8z"/>
<path fill="#fc722a" d="M2032 360h8v8h-8z"/>
<path fill="#fc6c24" d="M2040 360h8v8h-8z"/>
<path fill="#fc6618" d="M2048 352h8v8h-8z"/>
<path fill="#fc6018" d="M2056 352h8v8h-8z"/>
<path fill="#fc6624" d="M2048 360h8v8h-8z"/>
<path fill="#fc6024" d="M2056 360h8v8h-8z"/>
<path fill="#fc5a18" d="M2064 352h8v8h-8z"/>
<path fill="#fc5418" d="M2072 352h8v8h-8z"/>
<path fill="#fc5a1e" d="M2064 360h8v8h-8z"/>
<path fill="#fc541e" d="M2072 360h8v8h-8z"/>
<path fill="#fc5412" d="M2080 352h8v8h-8z"/>
<path fill="#fc4e12" d="M2088 352h8v8h-8z"/>
<path fill="#fc4e1e" d="M2080 360h8v8h-8zM2088 360h8v8h-8z"/>
<path fill="#fc4812" d="M2096 352h8v8h-8z"/>
<path fill="#fc4212" d="M2104 352h8v8h-8z"/>
<path fill="#fc4818" d="M2096 360h8v8h-8z"/>
<path fill="#fc4218" d="M2104 360h8v8h-8z"/>
<path fill="#fc420c" d="M2112 352h8v8h-8z"/>
<path fill="#fc3c0c" d="M2120 352h8v8h-8zM2128 352h8v8h-8z"/>
<path fill="#fc3c18" d="M2112 360h8v8h-8zM2120 360h8v8h-8z"/>
<path fill="#fc360c" d="M2136 352h8v8h-8z"/>
<path fill="#fc3612" d="M2128 360h8v8h-8zM2136 360h8v8h-8z"/>
<path fill="#fc300c" d="M2144 352h8v8h-8zM2152 352h8v8h-8z"/>
<path fill="#fc3012" d="M2144 360h8v8h-8zM2152 360h8v8h-8z"/>
<path fill="#fc2a06" d="M2160 352h8v8h-8zM2168 352h8v8h-8z"/>
<path fill="#fc2a12" d="M2160 360h8v8h-8z"/>
<path fill="#fc2a0c" d="M2168 360h8v8h-8z"/>
<path fill="#fc2406" d="M2176 352h8v8h-8zM2184 352h8v8h-8zM2192 352h8v8h-8z"/>
<path fill="#fc240c" d="M2176 360h8v8h-8zM2184 360h8v8h-8z"/>
<path fill="#fc1e06" d="M2200 352h8v8h-8zM2208 352h8v8h-8z"/>
<path fill="#fc1e0c" d="M2192 360h8v8h-8zM2200 360h8v8h-8zM2208 360h8v8h-8z"/>
<path fill="#fc180c" d="M2216 360h8v8h-8z"/>
<path fill="#fc1806" d="M2224 360h8v8h-8z"/>
<path fill="#fc1206" d="M2232 360h8v8h-8zM2240 352h16v16h-16z"/>
<path fill="#00fc66" d="M1632 368h8v8h-8zM1640 368h8v8h-8zM1648 368h8v8h-8zM1656 368h8v8h-8zM1664 368h8v8h-8zM1672 368h8v8h-8zM1680 368h8v8h-8zM1688 368h8v8h-8zM1696 368h8v8h-8zM1704 368h8v8h-8zM1712 368h8v8h-8zM1720 368h8v8h-8zM1728 368h8v8h-8zM1736 368h8v8h-8zM1744 368h8v8h-8zM1752 368h8v8h-8zM1760 368h8v8h-8zM1768 368h8v8h-8zM1776 368h8v8h-8zM1784 368h8v8h-8zM1792 368h8v8h-8zM1800 368h8v8h-8zM1808 368h8v8h-8zM1816 368h8v8h-8zM1824 368h8v8h-8zM1832 368h8v8h-8z"/>
<path fill="#00fc6c" d="M1632 376h8v8h-8zM1640 376h8v8h-8zM1648 376h8v8h-8zM1656 376h8v8h-8z"/>
<path fill="#00fc72" d="M1664 376h8v8h-8zM1672 376h8v8h-8zM1680 376h8v8h-8zM1688 376h8v8h-8zM1696 376h8v8h-8zM1704 376h8v8h-8zM1712 376h8v8h-8zM1720 376h8v8h-8zM1728 376h8v8h-8zM1736 376h8v8h-8zM1744 376h8v8h-8zM1752 376h8v8h-8zM1760 376h8v8h-8zM1768 376h8v8h-8zM1776 376h8v8h-8zM1784 376h8v8h-8z"/>
<path fill="#00fc78" d="M1792 376h8v8h-8zM1800 376h8v8h-8zM1808 376h8v8h-8zM1816 376h8v8h-8zM1824 376h8v8h-8zM1832 376h8v8h-8zM1632 384h8v8h-8zM1640 384h8v8h-8zM1648 384h8v8h-8zM1656 384h8v8h-8zM1664 384h8v8h-8z"/>
<path fill="#0cfc66" d="M1840 368h8v8h-8z"/>
<path fill="#1efc66" d="M1848 368h8v8h-8z"/>
<path fill="#0cfc78" d="M1840 376h8v8h-8z"/>
<path fill="#1efc78" d="M1848 376h8v8h-8z"/>
<path fill="#30fc6c" d="M1856 368h8v8h-8z"/>
<path fill="#42fc6c" d="M1864 368h8v8h-8z"/>
<path fill="#30fc78" d="M1856 376h8v8h-8z"/>
<path fill="#42fc78" d="M1864 376h8v8h-8z"/>
<path fill="#54fc6c" d="M1872 368h8v8h-8z"/>
<path fill="#66fc6c" d="M1880 368h8v8h-8z"/>
<path fill="#54fc78" d="M1872 376h8v8h-8z"/>
<path fill="#66fc7e" d="M1880 376h8v8h-8z"/>
<path fill="#78fc6c" d="M1888 368h8v8h-8z"/>
<path fill="#8afc6c" d="M1896 368h8v8h-8z"/>
<path fill="#78fc7e" d="M1888 376h8v8h-8z"/>
<path fill="#8afc7e" d="M1896 376h8v8h-8z"/>
<path fill="#9cfc6c" d="M1904 368h8v8h-8z"/>
<path fill="#b4fc6c" d="M1912 368h8v8h-8z"/>
<path fill="#a2fc7e" d="M1904 376h8v8h-8z"/>
<path fill="#b4fc7e" d="M1912 376h8v8h-8z"/>
<path fill="#c6fc6c" d="M1920 368h8v8h-8z"/>
<path fill="#defc6c" d="M1928 368h8v8h-8z"/>
<path fill="#c6fc7e" d="M1920 376h8v8h-8z"/>
<path fill="#defc7e" d="M1928 376h8v8h-8z"/>
<path fill="#f0fc6c" d="M1936 368h8v8h-8z"/>
<path fill="#fcf66c" d="M1944 368h8v8h-8z"/>
<path fill="#f6fc7e" d="M1936 376h8v8h-8z"/>
<path fill="#fcf67e" d="M1944 376h8v8h-8z"/>
<path fill="#fce460" d="M1952 368h8v8h-8z"/>
<path fill="#fcd25a" d="M1960 368h8v8h-8z"/>
<path fill="#fcde72" d="M1952 376h8v8h-8z"/>
<path fill="#fcd26c" d="M1960 376h8v8h-8z"/>
<path fill="#fcc054" d="M1968 368h8v8h-8z"/>
<path fill="#fcb44e" d="M1976 368h8v8h-8z"/>
<path fill="#fcc066" d="M1968 376h8v8h-8z"/>
<path fill="#fcb460" d="M1976 376h8v8h-8z"/>
<path fill="#fca848" d="M1984 368h8v8h-8z"/>
<path fill="#fc9c48" d="M1992 368h8v8h-8z"/>
<path fill="#fca85a" d="M1984 376h8v8h-8z"/>
<path fill="#fc9c54" d="M1992 376h8v8h-8z"/>
<path fill="#fc9042" d="M2000 368h8v8h-8z"/>
<path fill="#fc8a3c" d="M2008 368h8v8h-8z"/>
<path fill="#fc904e" d="M2000 376h8v8h-8z"/>
<path fill="#fc8448" d="M2008 376h8v8h-8z"/>
<path fill="#fc7e3c" d="M2016 368h8v8h-8z"/>
<path fill="#fc7836" d="M2024 368h8v8h-8z"/>
<path fill="#fc7e48" d="M2016 376h8v8h-8z"/>
<path fill="#fc7842" d="M2024 376h8v8h-8z"/>
<path fill="#fc7236" d="M2032 368h8v8h-8z"/>
<path fill="#fc6c30" d="M2040 368h8v8h-8z"/>
<path fill="#fc6c3c" d="M2032 376h8v8h-8z"/>
<path fill="#fc663c" d="M2040 376h8v8h-8z"/>
<path fill="#fc6630" d="M2048 368h8v8h-8z"/>
<path fill="#fc602a" d="M2056 368h8v8h-8z"/>
<path fill="#fc6036" d="M2048 376h8v8h-8z"/>
<path fill="#fc5a36" d="M2056 376h8v8h-8z"/>
<path fill="#fc5a2a" d="M2064 368h8v8h-8z"/>
<path fill="#fc542a" d="M2072 368h8v8h-8z"/>
<path fill="#fc5430" d="M2064 376h8v8h-8z"/>
<path fill="#fc4e30" d="M2072 376h8v8h-8zM2080 376h8v8h-8z"/>
<path fill="#fc4e24" d="M2080 368h8v8h-8z"/>
<path fill="#fc4824" d="M2088 368h8v8h-8zM2096 368h8v8h-8z"/>
<path fill="#fc482a" d="M2088 376h8v8h-8z"/>
<path fill="#fc421e" d="M2104 368h8v8h-8z"/>
<path fill="#fc422a" d="M2096 376h8v8h-8z"/>
<path fill="#fc3c2a" d="M2104 376h8v8h-8z"/>
<path fill="#fc3c1e" d="M2112 368h8v8h-8zM2120 368h8v8h-8z"/>
<path fill="#fc3c24" d="M2112 376h8v8h-8z"/>
<path fill="#fc3624" d="M2120 376h8v8h-8zM2128 376h8v8h-8z"/>
<path fill="#fc361e" d="M2128 368h8v8h-8z"/>
<path fill="#fc3018" d="M2136 368h8v8h-8zM2144 368h8v8h-8z"/>
<path fill="#fc3024" d="M2136 376h8v8h-8z"/>
<path fill="#fc2a18" d="M2152 368h8v8h-8zM2160 368h8v8h-8z"/>
<path fill="#fc301e" d="M2144 376h8v8h-8z"/>
<path fill="#fc2a1e" d="M2152 376h8v8h-8zM2160 376h8v8h-8z"/>
<path fill="#fc2418" d="M2168 368h8v8h-8z"/>
<path fill="#fc241e" d="M2168 376h8v8h-8zM2176 376h8v8h-8z"/>
<path fill="#fc2412" d="M2176 368h8v8h-8z"/>
<path fill="#fc1e12" d="M2184 368h8v8h-8zM2192 368h8v8h-8zM2200 368h8v8h-8z"/>
<path fill="#fc1e18" d="M2184 376h8v8h-8zM2192 376h8v8h-8z"/>
<path fill="#fc1818" d="M2200 376h8v8h-8zM2208 376h8v8h-8zM2216 376h8v8h-8z"/>
<path fill="#fc1812" d="M2208 368h8v8h-8zM2216 368h8v8h-8z"/>
<path fill="#fc120c" d="M2224 368h8v8h-8zM2232 368h8v8h-8zM2240 368h8v8h-8z"/>
<path fill="#fc1212" d="M2224 376h8v8h-8zM2232 376h8v8h-8z"/>
<path fill="#fc0c0c" d="M2248 368h8v8h-8zM2256 368h8v8h-8zM2264 368h8v8h-8z"/>
<path fill="#fc0c12" d="M2240 376h8v8h-8zM2248 376h8v8h-8zM2256 376h8v8h-8z"/>
<path fill="#fc0612" d="M2264 376h8v8h-8zM2272 376h8v8h-8zM2280 376h8v8h-8zM2280 384h8v8h-8z"/>
<path fill="#fc060c" d="M2272 368h8v8h-8zM2280 368h8v8h-8zM2288 368h8v8h-8zM2288 376h8v8h-8z"/>
<path fill="#fc0606" d="M2296 368h8v8h-8z"/>
<path fill="#fc000c" d="M2296 376h8v8h-8zM2304 368h16v16h-16zM2368 384h16v16h-16zM2384 384h16v16h-16zM2400 384h16v16h-16zM2416 384h16v16h-16zM2432 384h16v16h-16zM2448 384h16v16h-16zM2480 400h16v16h-16zM2496 400h16v16h-16zM2512 400h16v16h-16zM2528 400h16v16h-16zM2544 400h16v16h-16z"/>
<path fill="#fc0006" d="M2320 368h16v16h-16zM2336 368h16v16h-16zM2352 368h16v16h-16zM2368 368h16v16h-16zM2384 368h16v16h-16zM2400 368h16v16h-16zM2464 384h16v16h-16zM2480 384h16v16h-16zM2496 384h16v16h-16zM2512 384h16v16h-16zM2528 384h16v16h-16zM2544 384h16v16h-16z"/>
<path fill="#00fc84" d="M1632 392h8v8h-8zM1640 392h8v8h-8zM1648 392h8v8h-8zM1656 392h8v8h-8zM1664 392h8v8h-8zM1672 392h8v8h-8zM1768 384h8v8h-8zM1776 384h8v8h-8zM1784 384h8v8h-8zM1792 384h8v8h-8zM1800 384h8v8h-8zM1808 384h8v8h-8zM1816 384h8v8h-8zM1824 384h8v8h-8z"/>
<path fill="#00fc7e" d="M1672 384h8v8h-8zM1680 384h8v8h-8zM1688 384h8v8h-8zM1696 384h8v8h-8zM1704 384h8v8h-8zM1712 384h8v8h-8zM1720 384h8v8h-8zM1728 384h8v8h-8zM1736 384h8v8h-8zM1744 384h8v8h-8zM1752 384h8v8h-8zM1760 384h8v8h-8z"/>
<path fill="#00fc8a" d="M1680 392h8v8h-8zM1688 392h8v8h-8zM1696 392h8v8h-8zM1704 392h8v8h-8zM1712 392h8v8h-8zM1720 392h8v8h-8zM1728 392h8v8h-8zM1736 392h8v8h-8zM1832 384h8v8h-8z"/>
<path fill="#00fc90" d="M1744 392h8v8h-8zM1752 392h8v8h-8zM1760 392h8v8h-8zM1768 392h8v8h-8zM1776 392h8v8h-8zM1784 392h8v8h-8zM1792 392h8v8h-8zM1632 400h8v8h-8zM1640 400h8v8h-8zM1648 400h8v8h-8zM1656 400h8v8h-8zM1664 400h8v8h-8zM1672 400h8v8h-8z"/>
<path fill="#00fc96" d="M1800 392h8v8h-8zM1808 392h8v8h-8zM1816 392h8v8h-8zM1824 392h8v8h-8zM1832 392h8v8h-8zM1680 400h8v8h-8zM1688 400h8v8h-8zM1696 400h8v8h-8zM1704 400h8v8h-8zM1712 400h8v8h-8zM1720 400h8v8h-8zM1728 400h8v8h-8z"/>
<path fill="#06fc8a" d="M1840 384h8v8h-8z"/>
<path fill="#18fc8a" d="M1848 384h8v8h-8z"/>
<path fill="#06fc96" d="M1840 392h8v8h-8z"/>
<path fill="#18fc9c" d="M1848 392h8v8h-8z"/>
<path fill="#2afc8a" d="M1856 384h8v8h-8z"/>
<path fill="#42fc8a" d="M1864 384h8v8h-8z"/>
<path fill="#2afc9c" d="M1856 392h8v8h-8z"/>
<path fill="#3cfc9c" d="M1864 392h8v8h-8z"/>
<path fill="#54fc8a" d="M1872 384h8v8h-8z"/>
<path fill="#66fc8a" d="M1880 384h8v8h-8z"/>
<path fill="#4efc9c" d="M1872 392h8v8h-8z"/>
<path fill="#66fc9c" d="M1880 392h8v8h-8z"/>
<path fill="#78fc90" d="M1888 384h8v8h-8z"/>
<path fill="#8afc90" d="M1896 384h8v8h-8z"/>
<path fill="#78fca2" d="M1888 392h8v8h-8z"/>
<path fill="#8afca2" d="M1896 392h8v8h-8z"/>
<path fill="#a2fc90" d="M1904 384h8v8h-8z"/>
<path fill="#b4fc90" d="M1912 384h8v8h-8z"/>
<path fill="#a2fca2" d="M1904 392h8v8h-8z"/>
<path fill="#b4fca2" d="M1912 392h8v8h-8z"/>
<path fill="#c6fc90" d="M1920 384h8v8h-8z"/>
<path fill="#defc96" d="M1928 384h8v8h-8z"/>
<path fill="#ccfca8" d="M1920 392h8v8h-8z"/>
<path fill="#defca8" d="M1928 392h8v8h-8z"/>
<path fill="#f6fc96" d="M1936 384h8v8h-8z"/>
<path fill="#fcf090" d="M1944 384h8v8h-8z"/>
<path fill="#f6fca8" d="M1936 392h8v8h-8z"/>
<path fill="#fcf0a2" d="M1944 392h8v8h-8z"/>
<path fill="#fcde84" d="M1952 384h8v8h-8z"/>
<path fill="#fccc7e" d="M1960 384h8v8h-8z"/>
<path fill="#fcde96" d="M1952 392h8v8h-8z"/>
<path fill="#fccc8a" d="M1960 392h8v8h-8z"/>
<path fill="#fcc072" d="M1968 384h8v8h-8z"/>
<path fill="#fcae6c" d="M1976 384h8v8h-8z"/>
<path fill="#fcba84" d="M1968 392h8v8h-8z"/>
<path fill="#fcae78" d="M1976 392h8v8h-8z"/>
<path fill="#fca266" d="M1984 384h8v8h-8z"/>
<path fill="#fc9660" d="M1992 384h8v8h-8z"/>
<path fill="#fca272" d="M1984 392h8v8h-8z"/>
<path fill="#fc966c" d="M1992 392h8v8h-8z"/>
<path fill="#fc905a" d="M2000 384h8v8h-8z"/>
<path fill="#fc8454" d="M2008 384h8v8h-8z"/>
<path fill="#fc8a66" d="M2000 392h8v8h-8z"/>
<path fill="#fc8460" d="M2008 392h8v8h-8z"/>
<path fill="#fc7e4e" d="M2016 384h8v8h-8z"/>
<path fill="#fc724e" d="M2024 384h8v8h-8z"/>
<path fill="#fc785a" d="M2016 392h8v8h-8z"/>
<path fill="#fc725a" d="M2024 392h8v8h-8z"/>
<path fill="#fc6c48" d="M2032 384h8v8h-8z"/>
<path fill="#fc6648" d="M2040 384h8v8h-8z"/>
<path fill="#fc6c54" d="M2032 392h8v8h-8z"/>
<path fill="#fc664e" d="M2040 392h8v8h-8z"/>
<path fill="#fc6042" d="M2048 384h8v8h-8z"/>
<path fill="#fc5a3c" d="M2056 384h8v8h-8z"/>
<path fill="#fc5a4e" d="M2048 392h8v8h-8z"/>
<path fill="#fc5a48" d="M2056 392h8v8h-8z"/>
<path fill="#fc543c" d="M2064 384h8v8h-8z"/>
<path fill="#fc4e3c" d="M2072 384h8v8h-8z"/>
<path fill="#fc5448" d="M2064 392h8v8h-8z"/>
<path fill="#fc4e42" d="M2072 392h8v8h-8z"/>
<path fill="#fc4836" d="M2080 384h8v8h-8zM2088 384h8v8h-8z"/>
<path fill="#fc4842" d="M2080 392h8v8h-8z"/>
<path fill="#fc423c" d="M2088 392h8v8h-8z"/>
<path fill="#fc4230" d="M2096 384h8v8h-8z"/>
<path fill="#fc3c30" d="M2104 384h8v8h-8zM2112 384h8v8h-8z"/>
<path fill="#fc3c3c" d="M2096 392h8v8h-8z"/>
<path fill="#fc3c36" d="M2104 392h8v8h-8z"/>
<path fill="#fc362a" d="M2120 384h8v8h-8z"/>
<path fill="#fc3636" d="M2112 392h8v8h-8zM2120 392h8v8h-8z"/>
<path fill="#fc302a" d="M2128 384h8v8h-8zM2136 384h8v8h-8z"/>
<path fill="#fc3030" d="M2128 392h8v8h-8z"/>
<path fill="#fc2a30" d="M2136 392h8v8h-8zM2144 392h8v8h-8z"/>
<path fill="#fc2a2a" d="M2144 384h8v8h-8z"/>
<path fill="#fc2a24" d="M2152 384h8v8h-8z"/>
<path fill="#fc242a" d="M2152 392h8v8h-8zM2160 392h8v8h-8z"/>
<path fill="#fc2424" d="M2160 384h8v8h-8zM2168 384h8v8h-8z"/>
<path fill="#fc1e2a" d="M2168 392h8v8h-8zM2176 392h8v8h-8z"/>
<path fill="#fc1e24" d="M2176 384h8v8h-8zM2184 392h8v8h-8z"/>
<path fill="#fc1e1e" d="M2184 384h8v8h-8z"/>
<path fill="#fc181e" d="M2192 384h8v8h-8zM2200 384h8v8h-8zM2208 384h8v8h-8z"/>
<path fill="#fc1824" d="M2192 392h8v8h-8zM2200 392h8v8h-8z"/>
<path fill="#fc121e" d="M2216 384h8v8h-8zM2224 392h8v8h-8z"/>
<path fill="#fc1224" d="M2208 392h8v8h-8zM2216 392h8v8h-8z"/>
<path fill="#fc1218" d="M2224 384h8v8h-8zM2232 384h8v8h-8z"/>
<path fill="#fc0c1e" d="M2232 392h8v8h-8zM2240 392h8v8h-8zM2248 392h8v8h-8z"/>
<path fill="#fc0c18" d="M2240 384h8v8h-8zM2248 384h8v8h-8zM2256 384h8v8h-8z"/>
<path fill="#fc0618" d="M2264 384h8v8h-8zM2272 384h8v8h-8zM2272 392h8v8h-8z"/>
<path fill="#fc061e" d="M2256 392h8v8h-8zM2264 392h8v8h-8zM2264 400h8v8h-8z"/>
<path fill="#fc0018" d="M2280 392h8v8h-8zM2288 384h16v16h-16zM2336 400h16v16h-16zM2352 400h16v16h-16zM2368 400h16v16h-16zM2384 400h16v16h-16zM2432 416h16v16h-16zM2448 416h16v16h-16zM2464 416h16v16h-16zM2480 416h16v16h-16zM2512 432h16v16h-16zM2528 432h16v16h-16zM2544 432h16v16h-16z"/>
<path fill="#fc0012" d="M2304 384h16v16h-16zM2320 384h16v16h-16zM2336 384h16v16h-16zM2352 384h16v16h-16zM2400 400h16v16h-16zM2416 400h16v16h-16zM2432 400h16v16h-16zM2448 400h16v16h-16zM2464 400h16v16h-16zM2496 416h16v16h-16zM2512 416h16v16h-16zM2528 416h16v16h-16zM2544 416h16v16h-16z"/>
<path fill="#00fc9c" d="M1632 408h8v8h-8zM1640 408h8v8h-8zM1648 408h8v8h-8zM1656 408h8v8h-8zM1664 408h8v8h-8zM1736 400h8v8h-8zM1744 400h8v8h-8zM1752 400h8v8h-8zM1760 400h8v8h-8zM1768 400h8v8h-8z"/>
<path fill="#00fca2" d="M1672 408h8v8h-8zM1680 408h8v8h-8zM1688 408h8v8h-8zM1696 408h8v8h-8zM1704 408h8v8h-8zM1712 408h8v8h-8zM1776 400h8v8h-8zM1784 400h8v8h-8zM1792 400h8v8h-8zM1800 400h8v8h-8zM1808 400h8v8h-8z"/>
<path fill="#00fca8" d="M1720 408h8v8h-8zM1728 408h8v8h-8zM1736 408h8v8h-8zM1744 408h8v8h-8zM1752 408h8v8h-8zM1816 400h8v8h-8zM1824 400h8v8h-8zM1832 400h8v8h-8zM1840 400h8v8h-8zM1632 416h8v8h-8zM1640 416h8v8h-8zM1648 416h8v8h-8zM1656 416h8v8h-8zM1664 416h8v8h-8z"/>
<path fill="#00fcae" d="M1760 408h8v8h-8zM1768 408h8v8h-8zM1776 408h8v8h-8zM1784 408h8v8h-8zM1792 408h8v8h-8zM1672 416h8v8h-8zM1680 416h8v8h-8zM1688 416h8v8h-8zM1696 416h8v8h-8zM1704 416h8v8h-8z"/>
<path fill="#00fcb4" d="M1800 408h8v8h-8zM1808 408h8v8h-8zM1816 408h8v8h-8zM1824 408h8v8h-8zM1632 424h8v8h-8zM1640 424h8v8h-8zM1648 424h8v8h-8zM1656 424h8v8h-8zM1664 424h8v8h-8zM1712 416h8v8h-8zM1720 416h8v8h-8zM1728 416h8v8h-8zM1736 416h8v8h-8zM1744 416h8v8h-8z"/>
<path fill="#00fcba" d="M1832 408h8v8h-8zM1840 408h8v8h-8zM1672 424h8v8h-8zM1680 424h8v8h-8zM1688 424h8v8h-8zM1696 424h8v8h-8zM1752 416h8v8h-8zM1760 416h8v8h-8zM1768 416h8v8h-8z"/>
<path fill="#12fca8" d="M1848 400h8v8h-8z"/>
<path fill="#12fcba" d="M1848 408h8v8h-8z"/>
<path fill="#2afcae" d="M1856 400h8v8h-8z"/>
<path fill="#3cfcae" d="M1864 400h8v8h-8z"/>
<path fill="#24fcc0" d="M1856 408h8v8h-8z"/>
<path fill="#3cfcc0" d="M1864 408h8v8h-8z"/>
<path fill="#4efcae" d="M1872 400h8v8h-8z"/>
<path fill="#60fcb4" d="M1880 400h8v8h-8z"/>
<path fill="#4efcc0" d="M1872 408h8v8h-8z"/>
<path fill="#60fcc6" d="M1880 408h8v8h-8z"/>
<path fill="#78fcb4" d="M1888 400h8v8h-8z"/>
<path fill="#8afcb4" d="M1896 400h8v8h-8z"/>
<path fill="#78fcc6" d="M1888 408h8v8h-8z"/>
<path fill="#8afcc6" d="M1896 408h8v8h-8z"/>
<path fill="#a2fcb4" d="M1904 400h8v8h-8z"/>
<path fill="#b4fcba" d="M1912 400h8v8h-8z"/>
<path fill="#a2fccc" d="M1904 408h8v8h-8z"/>
<path fill="#b4fccc" d="M1912 408h8v8h-8z"/>
<path fill="#ccfcba" d="M1920 400h8v8h-8z"/>
<path fill="#e4fcc0" d="M1928 400h8v8h-8z"/>
<path fill="#ccfcd2" d="M1920 408h8v8h-8z"/>
<path fill="#e4fcd2" d="M1928 408h8v8h-8z"/>
<path fill="#fcfcc0" d="M1936 400h8v8h-8z"/>
<path fill="#fcf0b4" d="M1944 400h8v8h-8z"/>
<path fill="#fcfcd8" d="M1936 408h8v8h-8z"/>
<path fill="#fceac6" d="M1944 408h8v8h-8z"/>
<path fill="#fcd8a8" d="M1952 400h8v8h-8z"/>
<path fill="#fcc69c" d="M1960 400h8v8h-8z"/>
<path fill="#fcd8ba" d="M1952 408h8v8h-8z"/>
<path fill="#fcc6ae" d="M1960 408h8v8h-8z"/>
<path fill="#fcba90" d="M1968 400h8v8h-8z"/>
<path fill="#fca88a" d="M1976 400h8v8h-8z"/>
<path fill="#fcb4a2" d="M1968 408h8v8h-8z"/>
<path fill="#fca896" d="M1976 408h8v8h-8z"/>
<path fill="#fc9c7e" d="M1984 400h8v8h-8z"/>
<path fill="#fc9078" d="M1992 400h8v8h-8z"/>
<path fill="#fc9c90" d="M1984 408h8v8h-8z"/>
<path fill="#fc9084" d="M1992 408h8v8h-8z"/>
<path fill="#fc8a72" d="M2000 400h8v8h-8z"/>
<path fill="#fc7e6c" d="M2008 400h8v8h-8z"/>
<path fill="#fc847e" d="M2000 408h8v8h-8z"/>
<path fill="#fc7e78" d="M2008 408h8v8h-8z"/>
<path fill="#fc7866" d="M2016 400h8v8h-8z"/>
<path fill="#fc6c60" d="M2024 400h8v8h-8z"/>
<path fill="#fc7272" d="M2016 408h8v8h-8z"/>
<path fill="#fc6c6c" d="M2024 408h8v8h-8z"/>
<path fill="#fc6660" d="M2032 400h8v8h-8z"/>
<path fill="#fc605a" d="M2040 400h8v8h-8z"/>
<path fill="#fc6666" d="M2032 408h8v8h-8z"/>
<path fill="#fc6066" d="M2040 408h8v8h-8z"/>
<path fill="#fc5a54" d="M2048 400h8v8h-8z"/>
<path fill="#fc5454" d="M2056 400h8v8h-8z"/>
<path fill="#fc5a60" d="M2048 408h8v8h-8z"/>
<path fill="#fc545a" d="M2056 408h8v8h-8z"/>
<path fill="#fc4e4e" d="M2064 400h8v8h-8z"/>
<path fill="#fc484e" d="M2072 400h8v8h-8z"/>
<path fill="#fc4e5a" d="M2064 408h8v8h-8z"/>
<path fill="#fc4854" d="M2072 408h8v8h-8z"/>
<path fill="#fc4848" d="M2080 400h8v8h-8z"/>
<path fill="#fc4248" d="M2088 400h8v8h-8z"/>
<path fill="#fc424e" d="M2080 408h8v8h-8z"/>
<path fill="#fc3c4e" d="M2088 408h8v8h-8z"/>
<path fill="#fc3c42" d="M2096 400h8v8h-8z"/>
<path fill="#fc3642" d="M2104 400h8v8h-8z"/>
<path fill="#fc3c48" d="M2096 408h8v8h-8z"/>
<path fill="#fc3648" d="M2104 408h8v8h-8z"/>
<path fill="#fc363c" d="M2112 400h8v8h-8z"/>
<path fill="#fc303c" d="M2120 400h8v8h-8zM2128 400h8v8h-8z"/>
<path fill="#fc3048" d="M2112 408h8v8h-8zM2120 416h8v8h-8z"/>
<path fill="#fc3042" d="M2120 408h8v8h-8z"/>
<path fill="#fc2a36" d="M2136 400h8v8h-8zM2144 400h8v8h-8z"/>
<path fill="#fc2a42" d="M2128 408h8v8h-8z"/>
<path fill="#fc2a3c" d="M2136 408h8v8h-8z"/>
<path fill="#fc2436" d="M2152 400h8v8h-8z"/>
<path fill="#fc243c" d="M2144 408h8v8h-8zM2152 408h8v8h-8z"/>
<path fill="#fc2430" d="M2160 400h8v8h-8z"/>
<path fill="#fc1e30" d="M2168 400h8v8h-8zM2176 400h8v8h-8z"/>
<path fill="#fc1e36" d="M2160 408h8v8h-8zM2168 408h8v8h-8z"/>
<path fill="#fc182a" d="M2184 400h8v8h-8zM2192 400h8v8h-8z"/>
<path fill="#fc1836" d="M2176 408h8v8h-8zM2184 408h8v8h-8z"/>
<path fill="#fc122a" d="M2200 400h8v8h-8zM2208 400h8v8h-8zM2216 400h8v8h-8z"/>
<path fill="#fc1830" d="M2192 408h8v8h-8z"/>
<path fill="#fc1230" d="M2200 408h8v8h-8zM2208 408h8v8h-8z"/>
<path fill="#fc0c30" d="M2216 408h8v8h-8zM2216 416h8v8h-8zM2224 416h8v8h-8z"/>
<path fill="#fc0c24" d="M2224 400h8v8h-8zM2232 400h8v8h-8zM2240 400h8v8h-8z"/>
<path fill="#fc0c2a" d="M2224 408h8v8h-8zM2232 408h8v8h-8z"/>
<path fill="#fc0624" d="M2248 400h8v8h-8zM2256 400h8v8h-8zM2256 408h8v8h-8z"/>
<path fill="#fc062a" d="M2240 408h8v8h-8zM2248 408h8v8h-8z"/>
<path fill="#fc0024" d="M2264 408h8v8h-8zM2272 408h8v8h-8zM2280 408h8v8h-8zM2304 416h16v16h-16zM2320 416h16v16h-16zM2336 416h16v16h-16zM2352 416h16v16h-16zM2384 432h16v16h-16zM2400 432h16v16h-16zM2416 432h16v16h-16zM2432 432h16v16h-16zM2448 448h16v16h-16zM2464 448h16v16h-16zM2480 448h16v16h-16zM2496 448h16v16h-16zM2512 448h16v16h-16zM2528 464h16v16h-16z"/>
<path fill="#fc001e" d="M2272 400h8v8h-8zM2280 400h8v8h-8zM2288 400h16v16h-16zM2304 400h16v16h-16zM2320 400h16v16h-16zM2368 416h16v16h-16zM2384 416h16v16h-16zM2400 416h16v16h-16zM2416 416h16v16h-16zM2448 432h16v16h-16zM2464 432h16v16h-16zM2480 432h16v16h-16zM2496 432h16v16h-16zM2528 448h16v16h-16zM2544 448h16v16h-16z"/>
<path fill="#00fcc0" d="M1704 424h8v8h-8zM1712 424h8v8h-8zM1720 424h8v8h-8zM1728 424h8v8h-8zM1776 416h8v8h-8zM1784 416h8v8h-8zM1792 416h8v8h-8zM1800 416h8v8h-8zM1632 432h8v8h-8zM1640 432h8v8h-8zM1648 432h8v8h-8zM1656 432h8v8h-8z"/>
<path fill="#00fcc6" d="M1736 424h8v8h-8zM1744 424h8v8h-8zM1752 424h8v8h-8zM1760 424h8v8h-8zM1808 416h8v8h-8zM1816 416h8v8h-8zM1824 416h8v8h-8zM1664 432h8v8h-8zM1672 432h8v8h-8zM1680 432h8v8h-8zM1688 432h8v8h-8z"/>
<path fill="#00fccc" d="M1768 424h8v8h-8zM1776 424h8v8h-8zM1784 424h8v8h-8zM1832 416h8v8h-8zM1840 416h8v8h-8zM1640 440h8v8h-8zM1648 440h8v8h-8zM1696 432h8v8h-8zM1704 432h8v8h-8zM1712 432h8v8h-8zM1720 432h8v8h-8z"/>
<path fill="#00fcd2" d="M1792 424h8v8h-8zM1800 424h8v8h-8zM1808 424h8v8h-8zM1656 440h8v8h-8zM1664 440h8v8h-8zM1672 440h8v8h-8zM1680 440h8v8h-8zM1728 432h8v8h-8zM1736 432h8v8h-8zM1744 432h8v8h-8z"/>
<path fill="#00fcd8" d="M1816 424h8v8h-8zM1824 424h8v8h-8zM1688 440h8v8h-8zM1696 440h8v8h-8zM1704 440h8v8h-8zM1752 432h8v8h-8zM1760 432h8v8h-8zM1768 432h8v8h-8zM1640 448h8v8h-8zM1648 448h8v8h-8z"/>
<path fill="#00fcde" d="M1832 424h8v8h-8zM1840 424h8v8h-8zM1712 440h8v8h-8zM1720 440h8v8h-8zM1728 440h8v8h-8zM1776 432h8v8h-8zM1784 432h8v8h-8zM1656 448h8v8h-8zM1664 448h8v8h-8zM1672 448h8v8h-8z"/>
<path fill="#12fccc" d="M1848 416h8v8h-8z"/>
<path fill="#0cfcde" d="M1848 424h8v8h-8z"/>
<path fill="#24fcd2" d="M1856 416h8v8h-8z"/>
<path fill="#36fcd2" d="M1864 416h8v8h-8z"/>
<path fill="#24fce4" d="M1856 424h8v8h-8z"/>
<path fill="#36fce4" d="M1864 424h8v8h-8z"/>
<path fill="#4efcd8" d="M1872 416h8v8h-8z"/>
<path fill="#60fcd8" d="M1880 416h8v8h-8z"/>
<path fill="#48fcea" d="M1872 424h8v8h-8z"/>
<path fill="#60fcea" d="M1880 424h8v8h-8z"/>
<path fill="#72fcd8" d="M1888 416h8v8h-8z"/>
<path fill="#8afcde" d="M1896 416h8v8h-8z"/>
<path fill="#72fcf0" d="M1888 424h8v8h-8z"/>
<path fill="#8afcf0" d="M1896 424h8v8h-8z"/>
<path fill="#a2fcde" d="M1904 416h8v8h-8z"/>
<path fill="#b4fce4" d="M1912 416h8v8h-8z"/>
<path fill="#a2fcf6" d="M1904 424h8v8h-8z"/>
<path fill="#b4fcfc" d="M1912 424h8v8h-8z"/>
<path fill="#ccfce4" d="M1920 416h8v8h-8z"/>
<path fill="#e4fcea" d="M1928 416h8v8h-8z"/>
<path fill="#ccfcfc" d="M1920 424h8v8h-8z"/>
<path fill="#e4fcfc" d="M1928 424h8v8h-8z"/>
<path fill="#fcfcea" d="M1936 416h8v8h-8z"/>
<path fill="#fceade" d="M1944 416h8v8h-8z"/>
<path fill="#fcfcfc" d="M1936 424h8v8h-8z"/>
<path fill="#fce4f0" d="M1944 424h8v8h-8z"/>
<path fill="#fcd2cc" d="M1952 416h8v8h-8z"/>
<path fill="#fcc0c0" d="M1960 416h8v8h-8z"/>
<path fill="#fcd2de" d="M1952 424h8v8h-8z"/>
<path fill="#fcc0cc" d="M1960 424h8v8h-8z"/>
<path fill="#fcb4b4" d="M1968 416h8v8h-8z"/>
<path fill="#fca8a8" d="M1976 416h8v8h-8z"/>
<path fill="#fcaec0" d="M1968 424h8v8h-8z"/>
<path fill="#fca2b4" d="M1976 424h8v8h-8z"/>
<path fill="#fc969c" d="M1984 416h8v8h-8z"/>
<path fill="#fc9096" d="M1992 416h8v8h-8z"/>
<path fill="#fc96a8" d="M1984 424h8v8h-8z"/>
<path fill="#fc8aa2" d="M1992 424h8v8h-8z"/>
<path fill="#fc848a" d="M2000 416h8v8h-8z"/>
<path fill="#fc7884" d="M2008 416h8v8h-8z"/>
<path fill="#fc7e96" d="M2000 424h8v8h-8z"/>
<path fill="#fc7890" d="M2008 424h8v8h-8z"/>
<path fill="#fc727e" d="M2016 416h8v8h-8z"/>
<path fill="#fc6c78" d="M2024 416h8v8h-8z"/>
<path fill="#fc728a" d="M2016 424h8v8h-8z"/>
<path fill="#fc6684" d="M2024 424h8v8h-8z"/>
<path fill="#fc6072" d="M2032 416h8v8h-8z"/>
<path fill="#fc5a6c" d="M2040 416h8v8h-8z"/>
<path fill="#fc607e" d="M2032 424h8v8h-8z"/>
<path fill="#fc5a78" d="M2040 424h8v8h-8z"/>
<path fill="#fc546c" d="M2048 416h8v8h-8z"/>
<path fill="#fc4e66" d="M2056 416h8v8h-8z"/>
<path fill="#fc5472" d="M2048 424h8v8h-8z"/>
<path fill="#fc4e6c" d="M2056 424h8v8h-8z"/>
<path fill="#fc4860" d="M2064 416h8v8h-8z"/>
<path fill="#fc485a" d="M2072 416h8v8h-8z"/>
<path fill="#fc486c" d="M2064 424h8v8h-8z"/>
<path fill="#fc4266" d="M2072 424h8v8h-8z"/>
<path fill="#fc425a" d="M2080 416h8v8h-8z"/>
<path fill="#fc3c54" d="M2088 416h8v8h-8z"/>
<path fill="#fc3c60" d="M2080 424h8v8h-8zM2088 424h8v8h-8z"/>
<path fill="#fc3654" d="M2096 416h8v8h-8z"/>
<path fill="#fc364e" d="M2104 416h8v8h-8z"/>
<path fill="#fc365a" d="M2096 424h8v8h-8z"/>
<path fill="#fc305a" d="M2104 424h8v8h-8z"/>
<path fill="#fc304e" d="M2112 416h8v8h-8z"/>
<path fill="#fc3054" d="M2112 424h8v8h-8z"/>
<path fill="#fc2a54" d="M2120 424h8v8h-8z"/>
<path fill="#fc2a48" d="M2128 416h8v8h-8z"/>
<path fill="#fc2448" d="M2136 416h8v8h-8zM2144 424h8v8h-8z"/>
<path fill="#fc2a4e" d="M2128 424h8v8h-8z"/>
<path fill="#fc244e" d="M2136 424h8v8h-8z"/>
<path fill="#fc2442" d="M2144 416h8v8h-8z"/>
<path fill="#fc1e42" d="M2152 416h8v8h-8z"/>
<path fill="#fc1e48" d="M2152 424h8v8h-8zM2160 424h8v8h-8z"/>
<path fill="#fc1e3c" d="M2160 416h8v8h-8z"/>
<path fill="#fc183c" d="M2168 416h8v8h-8zM2176 416h8v8h-8zM2184 416h8v8h-8z"/>
<path fill="#fc1842" d="M2168 424h8v8h-8zM2176 424h8v8h-8z"/>
<path fill="#fc1242" d="M2184 424h8v8h-8zM2192 432h8v8h-8z"/>
<path fill="#fc1236" d="M2192 416h8v8h-8zM2200 416h8v8h-8z"/>
<path fill="#fc123c" d="M2192 424h8v8h-8z"/>
<path fill="#fc0c3c" d="M2200 424h8v8h-8zM2208 424h8v8h-8z"/>
<path fill="#fc0c36" d="M2208 416h8v8h-8zM2216 424h8v8h-8z"/>
<path fill="#fc0630" d="M2232 416h8v8h-8zM2240 416h8v8h-8zM2248 416h8v8h-8z"/>
<path fill="#fc0636" d="M2224 424h8v8h-8zM2232 424h8v8h-8zM2240 424h8v8h-8z"/>
<path fill="#fc0030" d="M2248 424h8v8h-8zM2256 424h8v8h-8zM2264 424h8v8h-8zM2272 424h8v8h-8zM2280 424h8v8h-8zM2280 432h8v8h-8zM2288 432h16v16h-16zM2304 432h16v16h-16zM2320 432h16v16h-16zM2352 448h16v16h-16zM2368 448h16v16h-16zM2384 448h16v16h-16zM2416 464h16v16h-16zM2432 464h16v16h-16zM2448 464h16v16h-16zM2480 480h16v16h-16zM2496 480h16v16h-16zM2512 480h16v16h-16z"/>
<path fill="#fc002a" d="M2256 416h8v8h-8zM2264 416h8v8h-8zM2272 416h8v8h-8zM2280 416h8v8h-8zM2288 416h16v16h-16zM2336 432h16v16h-16zM2352 432h16v16h-16zM2368 432h16v16h-16zM2400 448h16v16h-16zM2416 448h16v16h-16zM2432 448h16v16h-16zM2464 464h16v16h-16zM2480 464h16v16h-16zM2496 464h16v16h-16zM2512 464h16v16h-16z"/>
<path fill="#00fce4" d="M1736 440h8v8h-8zM1744 440h8v8h-8zM1752 440h8v8h-8zM1792 432h8v8h-8zM1800 432h8v8h-8zM1808 432h8v8h-8zM1640 456h8v8h-8zM1680 448h8v8h-8zM1688 448h8v8h-8zM1696 448h8v8h-8z"/>
<path fill="#00fcea" d="M1760 440h8v8h-8zM1768 440h8v8h-8zM1776 440h8v8h-8zM1816 432h8v8h-8zM1824 432h8v8h-8zM1648 456h8v8h-8zM1656 456h8v8h-8zM1664 456h8v8h-8zM1704 448h8v8h-8zM1712 448h8v8h-8zM1720 448h8v8h-8z"/>
<path fill="#00fcf0" d="M1784 440h8v8h-8zM1792 440h8v8h-8zM1832 432h8v8h-8zM1840 432h8v8h-8zM1672 456h8v8h-8zM1680 456h8v8h-8zM1688 456h8v8h-8zM1728 448h8v8h-8zM1736 448h8v8h-8z"/>
<path fill="#00fcf6" d="M1800 440h8v8h-8zM1808 440h8v8h-8zM1696 456h8v8h-8zM1704 456h8v8h-8zM1712 456h8v8h-8zM1744 448h8v8h-8zM1752 448h8v8h-8zM1760 448h8v8h-8zM1648 464h8v8h-8zM1656 464h8v8h-8z"/>
<path fill="#00fcfc" d="M1816 440h8v8h-8zM1824 440h8v8h-8zM1832 440h8v8h-8zM1840 440h8v8h-8zM1720 456h8v8h-8zM1728 456h8v8h-8zM1736 456h8v8h-8zM1744 456h8v8h-8zM1768 448h8v8h-8zM1776 448h8v8h-8zM1784 448h8v8h-8zM1792 448h8v8h-8zM1648 472h8v8h-8zM1656 472h8v8h-8zM1664 464h8v8h-8zM1672 464h8v8h-8zM1680 464h8v8h-8zM1688 464h8v8h-8zM1696 464h8v8h-8z"/>
<path fill="#06fcf6" d="M1848 432h8v8h-8z"/>
<path fill="#06f6fc" d="M1848 440h8v8h-8z"/>
<path fill="#1efcf6" d="M1856 432h8v8h-8z"/>
<path fill="#36fcfc" d="M1864 432h8v8h-8z"/>
<path fill="#18f6fc" d="M1856 440h8v8h-8z"/>
<path fill="#30f0fc" d="M1864 440h8v8h-8z"/>
<path fill="#48fcfc" d="M1872 432h8v8h-8z"/>
<path fill="#5afcfc" d="M1880 432h8v8h-8z"/>
<path fill="#42f0fc" d="M1872 440h8v8h-8z"/>
<path fill="#54eafc" d="M1880 440h8v8h-8z"/>
<path fill="#72fcfc" d="M1888 432h8v8h-8z"/>
<path fill="#84f6fc" d="M1896 432h8v8h-8z"/>
<path fill="#66e4fc" d="M1888 440h8v8h-8z"/>
<path fill="#78e4fc" d="M1896 440h8v8h-8z"/>
<path fill="#96f0fc" d="M1904 432h8v8h-8z"/>
<path fill="#aef0fc" d="M1912 432h8v8h-8z"/>
<path fill="#8adefc" d="M1904 440h8v8h-8z"/>
<path fill="#9cdefc" d="M1912 440h8v8h-8z"/>
<path fill="#c0eafc" d="M1920 432h8v8h-8z"/>
<path fill="#d2eafc" d="M1928 432h8v8h-8z"/>
<path fill="#aed8fc" d="M1920 440h8v8h-8z"/>
<path fill="#c6d2fc" d="M1928 440h8v8h-8z"/>
<path fill="#e4e4fc" d="M1936 432h8v8h-8z"/>
<path fill="#fcdefc" d="M1944 432h8v8h-8z"/>
<path fill="#d8d2fc" d="M1936 440h8v8h-8z"/>
<path fill="#eaccfc" d="M1944 440h8v8h-8z"/>
<path fill="#fcd2f0" d="M1952 432h8v8h-8z"/>
<path fill="#fcc0de" d="M1960 432h8v8h-8z"/>
<path fill="#fcc6fc" d="M1952 440h8v8h-8z"/>
<path fill="#fcbaf0" d="M1960 440h8v8h-8z"/>
<path fill="#fcaed2" d="M1968 432h8v8h-8z"/>
<path fill="#fca2c6" d="M1976 432h8v8h-8z"/>
<path fill="#fca8e4" d="M1968 440h8v8h-8z"/>
<path fill="#fc9cd2" d="M1976 440h8v8h-8z"/>
<path fill="#fc96ba" d="M1984 432h8v8h-8z"/>
<path fill="#fc8aae" d="M1992 432h8v8h-8z"/>
<path fill="#fc90c6" d="M1984 440h8v8h-8z"/>
<path fill="#fc84ba" d="M1992 440h8v8h-8z"/>
<path fill="#fc7ea8" d="M2000 432h8v8h-8z"/>
<path fill="#fc729c" d="M2008 432h8v8h-8z"/>
<path fill="#fc7eb4" d="M2000 440h8v8h-8z"/>
<path fill="#fc72a8" d="M2008 440h8v8h-8z"/>
<path fill="#fc6c96" d="M2016 432h8v8h-8z"/>
<path fill="#fc6690" d="M2024 432h8v8h-8z"/>
<path fill="#fc6ca2" d="M2016 440h8v8h-8z"/>
<path fill="#fc609c" d="M2024 440h8v8h-8z"/>
<path fill="#fc608a" d="M2032 432h8v8h-8z"/>
<path fill="#fc5a84" d="M2040 432h8v8h-8z"/>
<path fill="#fc5a90" d="M2032 440h8v8h-8z"/>
<path fill="#fc548a" d="M2040 440h8v8h-8z"/>
<path fill="#fc547e" d="M2048 432h8v8h-8z"/>
<path fill="#fc4e78" d="M2056 432h8v8h-8z"/>
<path fill="#fc4e84" d="M2048 440h8v8h-8z"/>
<path fill="#fc4884" d="M2056 440h8v8h-8z"/>
<path fill="#fc4872" d="M2064 432h8v8h-8z"/>
<path fill="#fc426c" d="M2072 432h8v8h-8z"/>
<path fill="#fc427e" d="M2064 440h8v8h-8z"/>
<path fill="#fc4278" d="M2072 440h8v8h-8z"/>
<path fill="#fc3c6c" d="M2080 432h8v8h-8z"/>
<path fill="#fc3666" d="M2088 432h8v8h-8z"/>
<path fill="#fc3c72" d="M2080 440h8v8h-8z"/>
<path fill="#fc366c" d="M2088 440h8v8h-8z"/>
<path fill="#fc3660" d="M2096 432h8v8h-8z"/>
<path fill="#fc3060" d="M2104 432h8v8h-8z"/>
<path fill="#fc306c" d="M2096 440h8v8h-8z"/>
<path fill="#fc3066" d="M2104 440h8v8h-8z"/>
<path fill="#fc2a5a" d="M2112 432h8v8h-8zM2120 432h8v8h-8z"/>
<path fill="#fc2a66" d="M2112 440h8v8h-8z"/>
<path fill="#fc2460" d="M2120 440h8v8h-8zM2128 440h8v8h-8z"/>
<path fill="#fc2454" d="M2128 432h8v8h-8zM2136 432h8v8h-8z"/>
<path fill="#fc1e5a" d="M2136 440h8v8h-8zM2144 440h8v8h-8z"/>
<path fill="#fc1e4e" d="M2144 432h8v8h-8zM2152 432h8v8h-8z"/>
<path fill="#fc1854" d="M2152 440h8v8h-8zM2160 440h8v8h-8z"/>
<path fill="#fc184e" d="M2160 432h8v8h-8z"/>
<path fill="#fc1848" d="M2168 432h8v8h-8z"/>
<path fill="#fc124e" d="M2168 440h8v8h-8zM2176 440h8v8h-8zM2184 440h8v8h-8z"/>
<path fill="#fc1248" d="M2176 432h8v8h-8zM2184 432h8v8h-8z"/>
<path fill="#fc0c42" d="M2200 432h8v8h-8zM2208 432h8v8h-8z"/>
<path fill="#fc0c48" d="M2192 440h8v8h-8zM2200 440h8v8h-8z"/>
<path fill="#fc063c" d="M2216 432h8v8h-8zM2224 432h8v8h-8zM2232 432h8v8h-8z"/>
<path fill="#fc0648" d="M2208 440h8v8h-8zM2208 448h8v8h-8zM2216 448h8v8h-8z"/>
<path fill="#fc0642" d="M2216 440h8v8h-8zM2224 440h8v8h-8z"/>
<path fill="#fc0042" d="M2232 440h8v8h-8zM2240 448h8v8h-8zM2248 448h8v8h-8zM2256 448h8v8h-8zM2264 456h8v8h-8zM2272 456h8v8h-8zM2280 456h8v8h-8zM2288 456h8v8h-8zM2288 464h8v8h-8zM2296 464h8v8h-8zM2304 464h16v16h-16zM2320 464h16v16h-16zM2352 480h16v16h-16zM2368 480h16v16h-16zM2400 496h16v16h-16zM2416 496h16v16h-16zM2448 512h16v16h-16zM2464 512h16v16h-16z"/>
<path fill="#fc003c" d="M2240 432h8v8h-8zM2240 440h8v8h-8zM2248 440h8v8h-8zM2256 440h8v8h-8zM2264 440h8v8h-8zM2264 448h8v8h-8zM2272 448h8v8h-8zM2280 448h8v8h-8zM2288 448h8v8h-8zM2296 456h8v8h-8zM2304 448h16v16h-16zM2336 464h16v16h-16zM2352 464h16v16h-16zM2384 480h16v16h-16zM2400 480h16v16h-16zM2416 480h16v16h-16zM2432 496h16v16h-16zM2448 496h16v16h-16zM2464 496h16v16h-16zM2480 512h16v16h-16z"/>
<path fill="#fc0036" d="M2248 432h8v8h-8zM2256 432h8v8h-8zM2264 432h8v8h-8zM2272 432h8v8h-8zM2272 440h8v8h-8zM2280 440h8v8h-8zM2296 448h8v8h-8zM2320 448h16v16h-16zM2336 448h16v16h-16zM2368 464h16v16h-16zM2384 464h16v16h-16zM2400 464h16v16h-16zM2432 480h16v16h-16zM2448 480h16v16h-16zM2464 480h16v16h-16zM2480 496h16v16h-16zM2496 496h16v16h-16z"/>
<path fill="#00f6fc" d="M1752 456h8v8h-8zM1760 456h8v8h-8zM1800 448h8v8h-8zM1808 448h8v8h-8zM1664 472h8v8h-8zM1672 472h8v8h-8zM1704 464h8v8h-8zM1712 464h8v8h-8zM1720 464h8v8h-8z"/>
<path fill="#00f0fc" d="M1768 456h8v8h-8zM1776 456h8v8h-8zM1784 456h8v8h-8zM1816 448h8v8h-8zM1824 448h8v8h-8zM1680 472h8v8h-8zM1688 472h8v8h-8zM1696 472h8v8h-8zM1728 464h8v8h-8zM1736 464h8v8h-8zM1648 480h8v8h-8z"/>
<path fill="#00eafc" d="M1792 456h8v8h-8zM1800 456h8v8h-8zM1832 448h8v8h-8zM1840 448h8v8h-8zM1704 472h8v8h-8zM1712 472h8v8h-8zM1744 464h8v8h-8zM1752 464h8v8h-8zM1656 480h8v8h-8zM1664 480h8v8h-8zM1672 480h8v8h-8z"/>
<path fill="#00e4fc" d="M1808 456h8v8h-8zM1816 456h8v8h-8zM1848 448h8v8h-8zM1720 472h8v8h-8zM1728 472h8v8h-8zM1736 472h8v8h-8zM1760 464h8v8h-8zM1768 464h8v8h-8zM1776 464h8v8h-8zM1680 480h8v8h-8zM1688 480h8v8h-8z"/>
<path fill="#00defc" d="M1824 456h8v8h-8zM1832 456h8v8h-8zM1744 472h8v8h-8zM1752 472h8v8h-8zM1784 464h8v8h-8zM1792 464h8v8h-8zM1656 488h8v8h-8zM1664 488h8v8h-8zM1672 488h8v8h-8zM1696 480h8v8h-8zM1704 480h8v8h-8zM1712 480h8v8h-8z"/>
<path fill="#00d8fc" d="M1840 456h8v8h-8zM1848 456h8v8h-8zM1760 472h8v8h-8zM1768 472h8v8h-8zM1800 464h8v8h-8zM1808 464h8v8h-8zM1680 488h8v8h-8zM1688 488h8v8h-8zM1696 488h8v8h-8zM1720 480h8v8h-8zM1728 480h8v8h-8zM1656 496h8v8h-8z"/>
<path fill="#18e4fc" d="M1856 448h8v8h-8z"/>
<path fill="#2adefc" d="M1864 448h8v8h-8z"/>
<path fill="#12d2fc" d="M1856 456h8v8h-8z"/>
<path fill="#24d2fc" d="M1864 456h8v8h-8z"/>
<path fill="#3cdefc" d="M1872 448h8v8h-8z"/>
<path fill="#4ed8fc" d="M1880 448h8v8h-8z"/>
<path fill="#36ccfc" d="M1872 456h8v8h-8z"/>
<path fill="#48c6fc" d="M1880 456h8v8h-8z"/>
<path fill="#60d8fc" d="M1888 448h8v8h-8z"/>
<path fill="#72d2fc" d="M1896 448h8v8h-8z"/>
<path fill="#5ac6fc" d="M1888 456h8v8h-8z"/>
<path fill="#66c0fc" d="M1896 456h8v8h-8z"/>
<path fill="#84ccfc" d="M1904 448h8v8h-8z"/>
<path fill="#90ccfc" d="M1912 448h8v8h-8z"/>
<path fill="#78c0fc" d="M1904 456h8v8h-8z"/>
<path fill="#8abafc" d="M1912 456h8v8h-8z"/>
<path fill="#a2c6fc" d="M1920 448h8v8h-8z"/>
<path fill="#b4c6fc" d="M1928 448h8v8h-8z"/>
<path fill="#96bafc" d="M1920 456h8v8h-8z"/>
<path fill="#a8b4fc" d="M1928 456h8v8h-8z"/>
<path fill="#c6c0fc" d="M1936 448h8v8h-8z"/>
<path fill="#d8bafc" d="M1944 448h8v8h-8z"/>
<path fill="#bab4fc" d="M1936 456h8v8h-8z"/>
<path fill="#ccaefc" d="M1944 456h8v8h-8z"/>
<path fill="#eabafc" d="M1952 448h8v8h-8z"/>
<path fill="#fcb4fc" d="M1960 448h8v8h-8z"/>
<path fill="#d8a8fc" d="M1952 456h8v8h-8z"/>
<path fill="#eaa8fc" d="M1960 456h8v8h-8z"/>
<path fill="#fca8f0" d="M1968 448h8v8h-8z"/>
<path fill="#fc9ce4" d="M1976 448h8v8h-8z"/>
<path fill="#fca2fc" d="M1968 456h8v8h-8z"/>
<path fill="#fc96f0" d="M1976 456h8v8h-8z"/>
<path fill="#fc90d8" d="M1984 448h8v8h-8z"/>
<path fill="#fc84cc" d="M1992 448h8v8h-8z"/>
<path fill="#fc8ae4" d="M1984 456h8v8h-8z"/>
<path fill="#fc7ed8" d="M1992 456h8v8h-8z"/>
<path fill="#fc78c0" d="M2000 448h8v8h-8z"/>
<path fill="#fc72b4" d="M2008 448h8v8h-8z"/>
<path fill="#fc78cc" d="M2000 456h8v8h-8z"/>
<path fill="#fc6cc0" d="M2008 456h8v8h-8z"/>
<path fill="#fc66ae" d="M2016 448h8v8h-8z"/>
<path fill="#fc60a2" d="M2024 448h8v8h-8z"/>
<path fill="#fc66ba" d="M2016 456h8v8h-8z"/>
<path fill="#fc60ae" d="M2024 456h8v8h-8z"/>
<path fill="#fc5a9c" d="M2032 448h8v8h-8z"/>
<path fill="#fc5496" d="M2040 448h8v8h-8z"/>
<path fill="#fc54a8" d="M2032 456h8v8h-8z"/>
<path fill="#fc4ea2" d="M2040 456h8v8h-8z"/>
<path fill="#fc4e90" d="M2048 448h8v8h-8z"/>
<path fill="#fc488a" d="M2056 448h8v8h-8z"/>
<path fill="#fc489c" d="M2048 456h8v8h-8z"/>
<path fill="#fc4296" d="M2056 456h8v8h-8z"/>
<path fill="#fc4284" d="M2064 448h8v8h-8z"/>
<path fill="#fc3c7e" d="M2072 448h8v8h-8z"/>
<path fill="#fc4290" d="M2064 456h8v8h-8z"/>
<path fill="#fc3c8a" d="M2072 456h8v8h-8z"/>
<path fill="#fc367e" d="M2080 448h8v8h-8z"/>
<path fill="#fc3678" d="M2088 448h8v8h-8z"/>
<path fill="#fc3684" d="M2080 456h8v8h-8z"/>
<path fill="#fc307e" d="M2088 456h8v8h-8z"/>
<path fill="#fc3072" d="M2096 448h8v8h-8z"/>
<path fill="#fc2a6c" d="M2104 448h8v8h-8zM2112 448h8v8h-8z"/>
<path fill="#fc3078" d="M2096 456h8v8h-8z"/>
<path fill="#fc2a78" d="M2104 456h8v8h-8z"/>
<path fill="#fc2466" d="M2120 448h8v8h-8zM2128 448h8v8h-8z"/>
<path fill="#fc2472" d="M2112 456h8v8h-8zM2120 456h8v8h-8z"/>
<path fill="#fc1e60" d="M2136 448h8v8h-8zM2144 448h8v8h-8z"/>
<path fill="#fc1e6c" d="M2128 456h8v8h-8z"/>
<path fill="#fc1e66" d="M2136 456h8v8h-8z"/>
<path fill="#fc185a" d="M2152 448h8v8h-8zM2160 448h8v8h-8z"/>
<path fill="#fc1866" d="M2144 456h8v8h-8z"/>
<path fill="#fc1860" d="M2152 456h8v8h-8z"/>
<path fill="#fc1254" d="M2168 448h8v8h-8zM2176 448h8v8h-8z"/>
<path fill="#fc1260" d="M2160 456h8v8h-8z"/>
<path fill="#fc125a" d="M2168 456h8v8h-8z"/>
<path fill="#fc0c54" d="M2184 448h8v8h-8zM2192 456h8v8h-8z"/>
<path fill="#fc0c5a" d="M2176 456h8v8h-8zM2184 456h8v8h-8z"/>
<path fill="#fc0c4e" d="M2192 448h8v8h-8z"/>
<path fill="#fc064e" d="M2200 448h8v8h-8zM2208 456h8v8h-8z"/>
<path fill="#fc0654" d="M2200 456h8v8h-8z"/>
<path fill="#fc004e" d="M2216 456h8v8h-8zM2224 456h8v8h-8zM2232 464h8v8h-8zM2240 464h8v8h-8zM2248 464h8v8h-8zM2256 472h8v8h-8zM2264 472h8v8h-8zM2272 472h8v8h-8zM2272 480h8v8h-8zM2280 480h8v8h-8zM2288 480h8v8h-8zM2296 480h8v8h-8zM2296 488h8v8h-8zM2304 488h8v8h-8zM2312 488h8v8h-8zM2320 496h16v16h-16zM2336 496h16v16h-16zM2368 512h16v16h-16zM2384 512h16v16h-16zM2416 528h16v16h-16zM2432 528h16v16h-16zM2448 544h16v16h-16z"/>
<path fill="#fc0048" d="M2224 448h8v8h-8zM2232 448h8v8h-8zM2232 456h8v8h-8zM2240 456h8v8h-8zM2248 456h8v8h-8zM2256 456h8v8h-8zM2256 464h8v8h-8zM2264 464h8v8h-8zM2272 464h8v8h-8zM2280 464h8v8h-8zM2280 472h8v8h-8zM2288 472h8v8h-8zM2296 472h8v8h-8zM2304 480h8v8h-8zM2312 480h8v8h-8zM2320 480h16v16h-16zM2336 480h16v16h-16zM2352 496h16v16h-16zM2368 496h16v16h-16zM2384 496h16v16h-16zM2400 512h16v16h-16zM2416 512h16v16h-16zM2432 512h16v16h-16zM2448 528h16v16h-16zM2464 528h16v16h-16z"/>
<path fill="#00d2fc" d="M1776 472h8v8h-8zM1784 472h8v8h-8zM1816 464h8v8h-8zM1824 464h8v8h-8zM1704 488h8v8h-8zM1712 488h8v8h-8zM1736 480h8v8h-8zM1744 480h8v8h-8zM1752 480h8v8h-8zM1664 496h8v8h-8zM1672 496h8v8h-8z"/>
<path fill="#00ccfc" d="M1792 472h8v8h-8zM1800 472h8v8h-8zM1808 472h8v8h-8zM1832 464h8v8h-8zM1840 464h8v8h-8zM1720 488h8v8h-8zM1728 488h8v8h-8zM1736 488h8v8h-8zM1760 480h8v8h-8zM1768 480h8v8h-8zM1664 504h8v8h-8zM1680 496h8v8h-8zM1688 496h8v8h-8zM1696 496h8v8h-8z"/>
<path fill="#00c6fc" d="M1816 472h8v8h-8zM1824 472h8v8h-8zM1848 464h8v8h-8zM1744 488h8v8h-8zM1752 488h8v8h-8zM1776 480h8v8h-8zM1784 480h8v8h-8zM1672 504h8v8h-8zM1680 504h8v8h-8zM1704 496h8v8h-8zM1712 496h8v8h-8zM1720 496h8v8h-8z"/>
<path fill="#00c0fc" d="M1832 472h8v8h-8zM1840 472h8v8h-8zM1760 488h8v8h-8zM1768 488h8v8h-8zM1792 480h8v8h-8zM1800 480h8v8h-8zM1808 480h8v8h-8zM1688 504h8v8h-8zM1696 504h8v8h-8zM1704 504h8v8h-8zM1728 496h8v8h-8zM1736 496h8v8h-8zM1664 512h8v8h-8zM1672 512h8v8h-8z"/>
<path fill="#00bafc" d="M1848 472h8v8h-8zM1776 488h8v8h-8zM1784 488h8v8h-8zM1792 488h8v8h-8zM1816 480h8v8h-8zM1824 480h8v8h-8zM1712 504h8v8h-8zM1720 504h8v8h-8zM1728 504h8v8h-8zM1744 496h8v8h-8zM1752 496h8v8h-8zM1760 496h8v8h-8zM1680 512h8v8h-8zM1688 512h8v8h-8z"/>
<path fill="#0cc6fc" d="M1856 464h8v8h-8z"/>
<path fill="#1ec0fc" d="M1864 464h8v8h-8z"/>
<path fill="#0cbafc" d="M1856 472h8v8h-8z"/>
<path fill="#1eb4fc" d="M1864 472h8v8h-8z"/>
<path fill="#30c0fc" d="M1872 464h8v8h-8z"/>
<path fill="#42bafc" d="M1880 464h8v8h-8z"/>
<path fill="#2ab4fc" d="M1872 472h8v8h-8z"/>
<path fill="#3caefc" d="M1880 472h8v8h-8z"/>
<path fill="#4ebafc" d="M1888 464h8v8h-8z"/>
<path fill="#60b4fc" d="M1896 464h8v8h-8z"/>
<path fill="#48aefc" d="M1888 472h8v8h-8z"/>
<path fill="#5aa8fc" d="M1896 472h8v8h-8z"/>
<path fill="#72b4fc" d="M1904 464h8v8h-8z"/>
<path fill="#7eaefc" d="M1912 464h8v8h-8z"/>
<path fill="#66a8fc" d="M1904 472h8v8h-8z"/>
<path fill="#78a2fc" d="M1912 472h8v8h-8z"/>
<path fill="#90a8fc" d="M1920 464h8v8h-8z"/>
<path fill="#9ca8fc" d="M1928 464h8v8h-8z"/>
<path fill="#849cfc" d="M1920 472h8v8h-8z"/>
<path fill="#969cfc" d="M1928 472h8v8h-8z"/>
<path fill="#aea2fc" d="M1936 464h8v8h-8z"/>
<path fill="#c0a2fc" d="M1944 464h8v8h-8z"/>
<path fill="#a296fc" d="M1936 472h8v8h-8z"/>
<path fill="#b496fc" d="M1944 472h8v8h-8z"/>
<path fill="#cc9cfc" d="M1952 464h8v8h-8z"/>
<path fill="#de9cfc" d="M1960 464h8v8h-8z"/>
<path fill="#c090fc" d="M1952 472h8v8h-8z"/>
<path fill="#d290fc" d="M1960 472h8v8h-8z"/>
<path fill="#ea96fc" d="M1968 464h8v8h-8z"/>
<path fill="#fc90fc" d="M1976 464h8v8h-8z"/>
<path fill="#de8afc" d="M1968 472h8v8h-8z"/>
<path fill="#ea84fc" d="M1976 472h8v8h-8z"/>
<path fill="#fc8af6" d="M1984 464h8v8h-8z"/>
<path fill="#fc7ee4" d="M1992 464h8v8h-8z"/>
<path fill="#fc84fc" d="M1984 472h8v8h-8z"/>
<path fill="#fc78f6" d="M1992 472h8v8h-8z"/>
<path fill="#fc72d8" d="M2000 464h8v8h-8z"/>
<path fill="#fc6ccc" d="M2008 464h8v8h-8z"/>
<path fill="#fc72ea" d="M2000 472h8v8h-8z"/>
<path fill="#fc66de" d="M2008 472h8v8h-8z"/>
<path fill="#fc60c6" d="M2016 464h8v8h-8z"/>
<path fill="#fc5aba" d="M2024 464h8v8h-8z"/>
<path fill="#fc60d2" d="M2016 472h8v8h-8z"/>
<path fill="#fc5ac6" d="M2024 472h8v8h-8z"/>
<path fill="#fc54b4" d="M2032 464h8v8h-8z"/>
<path fill="#fc4eae" d="M2040 464h8v8h-8z"/>
<path fill="#fc4ec0" d="M2032 472h8v8h-8z"/>
<path fill="#fc48b4" d="M2040 472h8v8h-8z"/>
<path fill="#fc48a2" d="M2048 464h8v8h-8z"/>
<path fill="#fc429c" d="M2056 464h8v8h-8z"/>
<path fill="#fc42ae" d="M2048 472h8v8h-8z"/>
<path fill="#fc42a8" d="M2056 472h8v8h-8z"/>
<path fill="#fc3c96" d="M2064 464h8v8h-8z"/>
<path fill="#fc3690" d="M2072 464h8v8h-8z"/>
<path fill="#fc3ca2" d="M2064 472h8v8h-8z"/>
<path fill="#fc369c" d="M2072 472h8v8h-8z"/>
<path fill="#fc368a" d="M2080 464h8v8h-8z"/>
<path fill="#fc308a" d="M2088 464h8v8h-8z"/>
<path fill="#fc3096" d="M2080 472h8v8h-8z"/>
<path fill="#fc2a90" d="M2088 472h8v8h-8z"/>
<path fill="#fc2a84" d="M2096 464h8v8h-8z"/>
<path fill="#fc2a7e" d="M2104 464h8v8h-8z"/>
<path fill="#fc2a8a" d="M2096 472h8v8h-8z"/>
<path fill="#fc2484" d="M2104 472h8v8h-8zM2112 472h8v8h-8z"/>
<path fill="#fc2478" d="M2112 464h8v8h-8z"/>
<path fill="#fc1e78" d="M2120 464h8v8h-8z"/>
<path fill="#fc1e7e" d="M2120 472h8v8h-8z"/>
<path fill="#fc1e72" d="M2128 464h8v8h-8z"/>
<path fill="#fc1872" d="M2136 464h8v8h-8z"/>
<path fill="#fc1878" d="M2128 472h8v8h-8zM2136 472h8v8h-8z"/>
<path fill="#fc186c" d="M2144 464h8v8h-8z"/>
<path fill="#fc1266" d="M2152 464h8v8h-8zM2160 464h8v8h-8z"/>
<path fill="#fc1272" d="M2144 472h8v8h-8zM2152 472h8v8h-8z"/>
<path fill="#fc0c60" d="M2168 464h8v8h-8zM2176 464h8v8h-8zM2184 464h8v8h-8z"/>
<path fill="#fc126c" d="M2160 472h8v8h-8z"/>
<path fill="#fc0c6c" d="M2168 472h8v8h-8z"/>
<path fill="#fc0c66" d="M2176 472h8v8h-8z"/>
<path fill="#fc0666" d="M2184 472h8v8h-8z"/>
<path fill="#fc065a" d="M2192 464h8v8h-8zM2200 464h8v8h-8z"/>
<path fill="#fc0660" d="M2192 472h8v8h-8z"/>
<path fill="#fc0060" d="M2200 472h8v8h-8zM2208 480h8v8h-8zM2216 480h8v8h-8zM2224 488h8v8h-8zM2232 488h8v8h-8zM2240 488h8v8h-8zM2240 496h8v8h-8zM2248 496h8v8h-8zM2256 496h8v8h-8zM2264 504h8v8h-8zM2272 504h8v8h-8zM2280 504h8v8h-8zM2280 512h8v8h-8zM2288 512h8v8h-8zM2296 512h8v8h-8zM2296 520h8v8h-8zM2304 520h8v8h-8zM2312 520h8v8h-8zM2312 528h8v8h-8zM2320 528h8v8h-8zM2328 528h8v8h-8zM2336 528h8v8h-8zM2336 536h8v8h-8zM2344 536h8v8h-8zM2368 544h16v16h-16zM2400 560h16v16h-16zM2416 560h16v16h-16z"/>
<path fill="#fc0054" d="M2208 464h8v8h-8zM2216 464h8v8h-8zM2224 464h8v8h-8zM2232 472h8v8h-8zM2240 472h8v8h-8zM2248 472h8v8h-8zM2248 480h8v8h-8zM2256 480h8v8h-8zM2264 480h8v8h-8zM2272 488h8v8h-8zM2280 488h8v8h-8zM2288 488h8v8h-8zM2288 496h8v8h-8zM2296 496h8v8h-8zM2304 496h8v8h-8zM2312 496h8v8h-8zM2312 504h8v8h-8zM2328 512h8v8h-8zM2336 512h16v16h-16zM2352 512h16v16h-16zM2384 528h16v16h-16zM2400 528h16v16h-16zM2416 544h16v16h-16zM2432 544h16v16h-16z"/>
<path fill="#fc005a" d="M2208 472h8v8h-8zM2216 472h8v8h-8zM2224 472h8v8h-8zM2224 480h8v8h-8zM2232 480h8v8h-8zM2240 480h8v8h-8zM2248 488h8v8h-8zM2256 488h8v8h-8zM2264 488h8v8h-8zM2264 496h8v8h-8zM2272 496h8v8h-8zM2280 496h8v8h-8zM2288 504h8v8h-8zM2296 504h8v8h-8zM2304 504h8v8h-8zM2304 512h8v8h-8zM2312 512h8v8h-8zM2320 512h8v8h-8zM2320 520h8v8h-8zM2328 520h8v8h-8zM2344 528h8v8h-8zM2352 528h16v16h-16zM2368 528h16v16h-16zM2384 544h16v16h-16zM2400 544h16v16h-16zM2432 560h16v16h-16z"/>
<path fill="#00b4fc" d="M1800 488h8v8h-8zM1808 488h8v8h-8zM1832 480h8v8h-8zM1840 480h8v8h-8zM1736 504h8v8h-8zM1744 504h8v8h-8zM1768 496h8v8h-8zM1776 496h8v8h-8zM1664 520h8v8h-8zM1672 520h8v8h-8zM1680 520h8v8h-8zM1696 512h8v8h-8zM1704 512h8v8h-8zM1712 512h8v8h-8z"/>
<path fill="#00aefc" d="M1816 488h8v8h-8zM1824 488h8v8h-8zM1848 480h8v8h-8zM1752 504h8v8h-8zM1760 504h8v8h-8zM1768 504h8v8h-8zM1784 496h8v8h-8zM1792 496h8v8h-8zM1688 520h8v8h-8zM1696 520h8v8h-8zM1704 520h8v8h-8zM1720 512h8v8h-8zM1728 512h8v8h-8zM1736 512h8v8h-8zM1672 528h8v8h-8z"/>
<path fill="#00a8fc" d="M1832 488h8v8h-8zM1840 488h8v8h-8zM1776 504h8v8h-8zM1784 504h8v8h-8zM1800 496h8v8h-8zM1808 496h8v8h-8zM1816 496h8v8h-8zM1712 520h8v8h-8zM1720 520h8v8h-8zM1728 520h8v8h-8zM1744 512h8v8h-8zM1752 512h8v8h-8zM1680 528h8v8h-8zM1688 528h8v8h-8zM1696 528h8v8h-8z"/>
<path fill="#00a2fc" d="M1848 488h8v8h-8zM1792 504h8v8h-8zM1800 504h8v8h-8zM1824 496h8v8h-8zM1832 496h8v8h-8zM1736 520h8v8h-8zM1744 520h8v8h-8zM1760 512h8v8h-8zM1768 512h8v8h-8zM1776 512h8v8h-8zM1672 536h8v8h-8zM1680 536h8v8h-8zM1688 536h8v8h-8zM1704 528h8v8h-8zM1712 528h8v8h-8zM1720 528h8v8h-8z"/>
<path fill="#06aefc" d="M1856 480h8v8h-8z"/>
<path fill="#18a8fc" d="M1864 480h8v8h-8z"/>
<path fill="#06a2fc" d="M1856 488h8v8h-8z"/>
<path fill="#129cfc" d="M1864 488h8v8h-8z"/>
<path fill="#24a8fc" d="M1872 480h8v8h-8z"/>
<path fill="#36a2fc" d="M1880 480h8v8h-8z"/>
<path fill="#249cfc" d="M1872 488h8v8h-8z"/>
<path fill="#3096fc" d="M1880 488h8v8h-8z"/>
<path fill="#42a2fc" d="M1888 480h8v8h-8z"/>
<path fill="#549cfc" d="M1896 480h8v8h-8z"/>
<path fill="#4296fc" d="M1888 488h8v8h-8z"/>
<path fill="#4e90fc" d="M1896 488h8v8h-8z"/>
<path fill="#609cfc" d="M1904 480h8v8h-8z"/>
<path fill="#7296fc" d="M1912 480h8v8h-8z"/>
<path fill="#5a90fc" d="M1904 488h8v8h-8z"/>
<path fill="#668afc" d="M1912 488h8v8h-8z"/>
<path fill="#7e96fc" d="M1920 480h8v8h-8z"/>
<path fill="#8a90fc" d="M1928 480h8v8h-8z"/>
<path fill="#788afc" d="M1920 488h8v8h-8z"/>
<path fill="#8484fc" d="M1928 488h8v8h-8z"/>
<path fill="#9c90fc" d="M1936 480h8v8h-8z"/>
<path fill="#a88afc" d="M1944 480h8v8h-8z"/>
<path fill="#9084fc" d="M1936 488h8v8h-8z"/>
<path fill="#9c7efc" d="M1944 488h8v8h-8z"/>
<path fill="#b484fc" d="M1952 480h8v8h-8z"/>
<path fill="#c684fc" d="M1960 480h8v8h-8z"/>
<path fill="#ae7efc" d="M1952 488h8v8h-8z"/>
<path fill="#ba78fc" d="M1960 488h8v8h-8z"/>
<path fill="#d27efc" d="M1968 480h8v8h-8z"/>
<path fill="#de7efc" d="M1976 480h8v8h-8z"/>
<path fill="#c678fc" d="M1968 488h8v8h-8z"/>
<path fill="#d272fc" d="M1976 488h8v8h-8z"/>
<path fill="#f078fc" d="M1984 480h8v8h-8z"/>
<path fill="#fc78fc" d="M1992 480h8v8h-8z"/>
<path fill="#de72fc" d="M1984 488h8v8h-8z"/>
<path fill="#f06cfc" d="M1992 488h8v8h-8z"/>
<path fill="#fc6cf6" d="M2000 480h8v8h-8z"/>
<path fill="#fc66ea" d="M2008 480h8v8h-8z"/>
<path fill="#fc66fc" d="M2000 488h8v8h-8z"/>
<path fill="#fc60f6" d="M2008 488h8v8h-8z"/>
<path fill="#fc5ade" d="M2016 480h8v8h-8z"/>
<path fill="#fc54d2" d="M2024 480h8v8h-8z"/>
<path fill="#fc5aea" d="M2016 488h8v8h-8z"/>
<path fill="#fc54de" d="M2024 488h8v8h-8z"/>
<path fill="#fc4ecc" d="M2032 480h8v8h-8z"/>
<path fill="#fc48c0" d="M2040 480h8v8h-8z"/>
<path fill="#fc4ed2" d="M2032 488h8v8h-8z"/>
<path fill="#fc42cc" d="M2040 488h8v8h-8z"/>
<path fill="#fc42ba" d="M2048 480h8v8h-8z"/>
<path fill="#fc3cb4" d="M2056 480h8v8h-8z"/>
<path fill="#fc42c0" d="M2048 488h8v8h-8z"/>
<path fill="#fc3cba" d="M2056 488h8v8h-8z"/>
<path fill="#fc36a8" d="M2064 480h8v8h-8z"/>
<path fill="#fc30a2" d="M2072 480h8v8h-8z"/>
<path fill="#fc36b4" d="M2064 488h8v8h-8z"/>
<path fill="#fc30ae" d="M2072 488h8v8h-8z"/>
<path fill="#fc309c" d="M2080 480h8v8h-8z"/>
<path fill="#fc2a96" d="M2088 480h8v8h-8z"/>
<path fill="#fc2aa8" d="M2080 488h8v8h-8z"/>
<path fill="#fc2aa2" d="M2088 488h8v8h-8z"/>
<path fill="#fc2496" d="M2096 480h8v8h-8z"/>
<path fill="#fc2490" d="M2104 480h8v8h-8z"/>
<path fill="#fc249c" d="M2096 488h8v8h-8z"/>
<path fill="#fc1e96" d="M2104 488h8v8h-8z"/>
<path fill="#fc1e8a" d="M2112 480h8v8h-8z"/>
<path fill="#fc1e84" d="M2120 480h8v8h-8z"/>
<path fill="#fc1e90" d="M2112 488h8v8h-8z"/>
<path fill="#fc188a" d="M2120 488h8v8h-8zM2128 488h8v8h-8z"/>
<path fill="#fc1884" d="M2128 480h8v8h-8z"/>
<path fill="#fc187e" d="M2136 480h8v8h-8z"/>
<path fill="#fc1284" d="M2136 488h8v8h-8z"/>
<path fill="#fc1278" d="M2144 480h8v8h-8zM2152 480h8v8h-8z"/>
<path fill="#fc127e" d="M2144 488h8v8h-8z"/>
<path fill="#fc0c7e" d="M2152 488h8v8h-8z"/>
<path fill="#fc0c72" d="M2160 480h8v8h-8zM2168 480h8v8h-8z"/>
<path fill="#fc0c78" d="M2160 488h8v8h-8z"/>
<path fill="#fc0678" d="M2168 488h8v8h-8z"/>
<path fill="#fc066c" d="M2176 480h8v8h-8zM2184 480h8v8h-8z"/>
<path fill="#fc0672" d="M2176 488h8v8h-8z"/>
<path fill="#fc0072" d="M2184 488h8v8h-8zM2192 496h8v8h-8zM2200 496h8v8h-8zM2208 504h8v8h-8zM2216 504h8v8h-8zM2224 512h8v8h-8zM2232 512h8v8h-8zM2240 520h8v8h-8zM2248 520h8v8h-8zM2256 528h8v8h-8zM2264 528h8v8h-8zM2272 536h8v8h-8zM2280 536h8v8h-8zM2288 544h8v8h-8zM2296 544h8v8h-8zM2296 552h8v8h-8zM2304 552h8v8h-8zM2312 552h8v8h-8zM2312 560h8v8h-8zM2320 560h8v8h-8zM2328 560h8v8h-8zM2328 568h8v8h-8zM2336 568h8v8h-8zM2344 568h8v8h-8zM2344 576h8v8h-8zM2352 576h8v8h-8zM2360 576h8v8h-8zM2360 584h8v8h-8zM2368 576h16v16h-16zM2376 592h8v8h-8zM2384 592h16v16h-16zM2400 592h16v16h-16z"/>
<path fill="#fc0066" d="M2192 480h8v8h-8zM2200 480h8v8h-8zM2208 488h8v8h-8zM2216 488h8v8h-8zM2224 496h8v8h-8zM2232 496h8v8h-8zM2240 504h8v8h-8zM2248 504h8v8h-8zM2256 504h8v8h-8zM2256 512h8v8h-8zM2264 512h8v8h-8zM2272 512h8v8h-8zM2272 520h8v8h-8zM2280 520h8v8h-8zM2288 520h8v8h-8zM2296 528h8v8h-8zM2304 528h8v8h-8zM2312 536h8v8h-8zM2320 536h8v8h-8zM2328 536h8v8h-8zM2328 544h8v8h-8zM2336 544h8v8h-8zM2344 544h8v8h-8zM2344 552h8v8h-8zM2352 544h16v16h-16zM2360 560h8v8h-8zM2368 560h16v16h-16zM2384 560h16v16h-16zM2400 576h16v16h-16zM2416 576h16v16h-16z"/>
<path fill="#fc006c" d="M2192 488h8v8h-8zM2200 488h8v8h-8zM2208 496h8v8h-8zM2216 496h8v8h-8zM2224 504h8v8h-8zM2232 504h8v8h-8zM2240 512h8v8h-8zM2248 512h8v8h-8zM2256 520h8v8h-8zM2264 520h8v8h-8zM2272 528h8v8h-8zM2280 528h8v8h-8zM2288 528h8v8h-8zM2288 536h8v8h-8zM2296 536h8v8h-8zM2304 536h8v8h-8zM2304 544h8v8h-8zM2312 544h8v8h-8zM2320 544h8v8h-8zM2320 552h8v8h-8zM2328 552h8v8h-8zM2336 552h8v8h-8zM2336 560h8v8h-8zM2344 560h8v8h-8zM2352 560h8v8h-8zM2352 568h8v8h-8zM2360 568h8v8h-8zM2384 576h16v16h-16z"/>
<path fill="#009cfc" d="M1808 504h8v8h-8zM1816 504h8v8h-8zM1824 504h8v8h-8zM1840 496h8v8h-8zM1848 496h8v8h-8zM1752 520h8v8h-8zM1760 520h8v8h-8zM1768 520h8v8h-8zM1784 512h8v8h-8zM1792 512h8v8h-8zM1696 536h8v8h-8zM1704 536h8v8h-8zM1712 536h8v8h-8zM1728 528h8v8h-8zM1736 528h8v8h-8zM1744 528h8v8h-8zM1680 544h8v8h-8zM1688 544h8v8h-8z"/>
<path fill="#0096fc" d="M1832 504h8v8h-8zM1840 504h8v8h-8zM1856 496h8v8h-8zM1776 520h8v8h-8zM1784 520h8v8h-8zM1800 512h8v8h-8zM1808 512h8v8h-8zM1816 512h8v8h-8zM1720 536h8v8h-8zM1728 536h8v8h-8zM1736 536h8v8h-8zM1752 528h8v8h-8zM1760 528h8v8h-8zM1680 552h8v8h-8zM1696 544h8v8h-8zM1704 544h8v8h-8zM1712 544h8v8h-8z"/>
<path fill="#0090fc" d="M1848 504h8v8h-8zM1856 504h8v8h-8zM1792 520h8v8h-8zM1800 520h8v8h-8zM1808 520h8v8h-8zM1824 512h8v8h-8zM1832 512h8v8h-8zM1744 536h8v8h-8zM1752 536h8v8h-8zM1768 528h8v8h-8zM1760 536h8v8h-8zM1776 528h8v8h-8zM1784 528h8v8h-8zM1688 552h8v8h-8zM1696 552h8v8h-8zM1704 552h8v8h-8zM1720 544h8v8h-8zM1728 544h8v8h-8z"/>
<path fill="#1296fc" d="M1864 496h8v8h-8z"/>
<path fill="#0c8afc" d="M1864 504h8v8h-8z"/>
<path fill="#1e90fc" d="M1872 496h8v8h-8z"/>
<path fill="#3090fc" d="M1880 496h8v8h-8z"/>
<path fill="#1e8afc" d="M1872 504h8v8h-8z"/>
<path fill="#2a84fc" d="M1880 504h8v8h-8z"/>
<path fill="#3c8afc" d="M1888 496h8v8h-8z"/>
<path fill="#488afc" d="M1896 496h8v8h-8z"/>
<path fill="#3684fc" d="M1888 504h8v8h-8z"/>
<path fill="#427efc" d="M1896 504h8v8h-8z"/>
<path fill="#5484fc" d="M1904 496h8v8h-8z"/>
<path fill="#6084fc" d="M1912 496h8v8h-8z"/>
<path fill="#4e7efc" d="M1904 504h8v8h-8z"/>
<path fill="#5a7efc" d="M1912 504h8v8h-8z"/>
<path fill="#6c7efc" d="M1920 496h8v8h-8z"/>
<path fill="#7e7efc" d="M1928 496h8v8h-8z"/>
<path fill="#6678fc" d="M1920 504h8v8h-8z"/>
<path fill="#7278fc" d="M1928 504h8v8h-8z"/>
<path fill="#8a78fc" d="M1936 496h8v8h-8z"/>
<path fill="#9678fc" d="M1944 496h8v8h-8z"/>
<path fill="#8472fc" d="M1936 504h8v8h-8z"/>
<path fill="#9072fc" d="M1944 504h8v8h-8z"/>
<path fill="#a272fc" d="M1952 496h8v8h-8z"/>
<path fill="#ae72fc" d="M1960 496h8v8h-8z"/>
<path fill="#9c6cfc" d="M1952 504h8v8h-8z"/>
<path fill="#a866fc" d="M1960 504h8v8h-8z"/>
<path fill="#ba6cfc" d="M1968 496h8v8h-8z"/>
<path fill="#c66cfc" d="M1976 496h8v8h-8z"/>
<path fill="#b466fc" d="M1968 504h8v8h-8z"/>
<path fill="#c060fc" d="M1976 504h8v8h-8z"/>
<path fill="#d866fc" d="M1984 496h8v8h-8z"/>
<path fill="#e466fc" d="M1992 496h8v8h-8z"/>
<path fill="#cc60fc" d="M1984 504h8v8h-8z"/>
<path fill="#d85afc" d="M1992 504h8v8h-8z"/>
<path fill="#f060fc" d="M2000 496h8v8h-8z"/>
<path fill="#fc5afc" d="M2008 496h8v8h-8z"/>
<path fill="#e45afc" d="M2000 504h8v8h-8z"/>
<path fill="#f054fc" d="M2008 504h8v8h-8z"/>
<path fill="#fc54f6" d="M2016 496h8v8h-8z"/>
<path fill="#fc4eea" d="M2024 496h8v8h-8z"/>
<path fill="#fc54fc" d="M2016 504h8v8h-8z"/>
<path fill="#fc4ef6" d="M2024 504h8v8h-8z"/>
<path fill="#fc48de" d="M2032 496h8v8h-8z"/>
<path fill="#fc42d8" d="M2040 496h8v8h-8z"/>
<path fill="#fc48ea" d="M2032 504h8v8h-8z"/>
<path fill="#fc42de" d="M2040 504h8v8h-8z"/>
<path fill="#fc3ccc" d="M2048 496h8v8h-8z"/>
<path fill="#fc36c6" d="M2056 496h8v8h-8z"/>
<path fill="#fc3cd8" d="M2048 504h8v8h-8z"/>
<path fill="#fc36cc" d="M2056 504h8v8h-8z"/>
<path fill="#fc30c0" d="M2064 496h8v8h-8z"/>
<path fill="#fc30b4" d="M2072 496h8v8h-8z"/>
<path fill="#fc30c6" d="M2064 504h8v8h-8z"/>
<path fill="#fc2ac0" d="M2072 504h8v8h-8z"/>
<path fill="#fc2aae" d="M2080 496h8v8h-8z"/>
<path fill="#fc24a8" d="M2088 496h8v8h-8z"/>
<path fill="#fc24ba" d="M2080 504h8v8h-8z"/>
<path fill="#fc24b4" d="M2088 504h8v8h-8z"/>
<path fill="#fc24a2" d="M2096 496h8v8h-8z"/>
<path fill="#fc1e9c" d="M2104 496h8v8h-8z"/>
<path fill="#fc1eae" d="M2096 504h8v8h-8z"/>
<path fill="#fc18a8" d="M2104 504h8v8h-8z"/>
<path fill="#fc189c" d="M2112 496h8v8h-8z"/>
<path fill="#fc1896" d="M2120 496h8v8h-8z"/>
<path fill="#fc18a2" d="M2112 504h8v8h-8z"/>
<path fill="#fc129c" d="M2120 504h8v8h-8z"/>
<path fill="#fc1290" d="M2128 496h8v8h-8z"/>
<path fill="#fc128a" d="M2136 496h8v8h-8z"/>
<path fill="#fc1296" d="M2128 504h8v8h-8z"/>
<path fill="#fc0c90" d="M2136 504h8v8h-8zM2144 504h8v8h-8z"/>
<path fill="#fc0c8a" d="M2144 496h8v8h-8z"/>
<path fill="#fc0c84" d="M2152 496h8v8h-8z"/>
<path fill="#fc068a" d="M2152 504h8v8h-8z"/>
<path fill="#fc067e" d="M2160 496h8v8h-8zM2168 496h8v8h-8z"/>
<path fill="#fc0684" d="M2160 504h8v8h-8z"/>
<path fill="#fc0084" d="M2168 504h8v8h-8zM2176 512h8v8h-8zM2184 512h8v8h-8zM2192 520h8v8h-8zM2200 520h8v8h-8zM2208 528h8v8h-8zM2216 536h8v8h-8zM2224 536h8v8h-8zM2232 544h8v8h-8zM2240 544h8v8h-8zM2248 552h8v8h-8zM2256 552h8v8h-8zM2256 560h8v8h-8zM2264 560h8v8h-8zM2272 560h8v8h-8zM2272 568h8v8h-8zM2280 568h8v8h-8zM2288 576h8v8h-8zM2296 576h8v8h-8zM2304 584h8v8h-8zM2312 584h8v8h-8zM2312 592h8v8h-8zM2320 592h8v8h-8zM2328 592h8v8h-8zM2328 600h8v8h-8zM2336 600h8v8h-8zM2344 600h8v8h-8zM2344 608h8v8h-8zM2352 608h8v8h-8zM2360 616h8v8h-8zM2368 616h8v8h-8zM2368 624h8v8h-8zM2376 624h8v8h-8z"/>
<path fill="#fc0078" d="M2176 496h8v8h-8zM2184 496h8v8h-8zM2192 504h8v8h-8zM2200 504h8v8h-8zM2208 512h8v8h-8zM2216 512h8v8h-8zM2224 520h8v8h-8zM2232 520h8v8h-8zM2232 528h8v8h-8zM2240 528h8v8h-8zM2248 528h8v8h-8zM2248 536h8v8h-8zM2256 536h8v8h-8zM2264 536h8v8h-8zM2264 544h8v8h-8zM2272 544h8v8h-8zM2280 544h8v8h-8zM2280 552h8v8h-8zM2288 552h8v8h-8zM2296 560h8v8h-8zM2304 560h8v8h-8zM2312 568h8v8h-8zM2320 568h8v8h-8zM2328 576h8v8h-8zM2336 576h8v8h-8zM2344 584h8v8h-8zM2352 584h8v8h-8zM2352 592h8v8h-8zM2360 592h8v8h-8zM2368 592h8v8h-8zM2368 600h8v8h-8zM2376 600h8v8h-8z"/>
<path fill="#fc007e" d="M2176 504h8v8h-8zM2184 504h8v8h-8zM2192 512h8v8h-8zM2200 512h8v8h-8zM2208 520h8v8h-8zM2216 520h8v8h-8zM2216 528h8v8h-8zM2224 528h8v8h-8zM2232 536h8v8h-8zM2240 536h8v8h-8zM2248 544h8v8h-8zM2256 544h8v8h-8zM2264 552h8v8h-8zM2272 552h8v8h-8zM2280 560h8v8h-8zM2288 560h8v8h-8zM2288 568h8v8h-8zM2296 568h8v8h-8zM2304 568h8v8h-8zM2304 576h8v8h-8zM2312 576h8v8h-8zM2320 576h8v8h-8zM2320 584h8v8h-8zM2328 584h8v8h-8zM2336 584h8v8h-8zM2336 592h8v8h-8zM2344 592h8v8h-8zM2352 600h8v8h-8zM2360 600h8v8h-8zM2360 608h8v8h-8zM2368 608h8v8h-8zM2376 608h8v8h-8zM2376 616h8v8h-8zM2384 608h16v16h-16z"/>
<path fill="#008afc" d="M1816 520h8v8h-8zM1824 520h8v8h-8zM1840 512h8v8h-8zM1848 512h8v8h-8zM1768 536h8v8h-8zM1776 536h8v8h-8zM1792 528h8v8h-8zM1800 528h8v8h-8zM1712 552h8v8h-8zM1720 552h8v8h-8zM1736 544h8v8h-8zM1728 552h8v8h-8zM1744 544h8v8h-8zM1752 544h8v8h-8zM1688 560h8v8h-8zM1696 560h8v8h-8zM1704 560h8v8h-8z"/>
<path fill="#0084fc" d="M1832 520h8v8h-8zM1840 520h8v8h-8zM1848 520h8v8h-8zM1856 512h8v8h-8zM1784 536h8v8h-8zM1792 536h8v8h-8zM1800 536h8v8h-8zM1808 528h8v8h-8zM1816 528h8v8h-8zM1824 528h8v8h-8zM1736 552h8v8h-8zM1744 552h8v8h-8zM1752 552h8v8h-8zM1760 544h8v8h-8zM1768 544h8v8h-8zM1776 544h8v8h-8zM1688 568h8v8h-8zM1696 568h8v8h-8zM1704 568h8v8h-8zM1712 560h8v8h-8zM1720 560h8v8h-8zM1728 560h8v8h-8z"/>
<path fill="#0c84fc" d="M1864 512h8v8h-8z"/>
<path fill="#007efc" d="M1856 520h8v8h-8zM1808 536h8v8h-8zM1816 536h8v8h-8zM1832 528h8v8h-8zM1840 528h8v8h-8zM1760 552h8v8h-8zM1768 552h8v8h-8zM1784 544h8v8h-8zM1776 552h8v8h-8zM1792 544h8v8h-8zM1800 544h8v8h-8zM1712 568h8v8h-8zM1720 568h8v8h-8zM1736 560h8v8h-8zM1728 568h8v8h-8zM1744 560h8v8h-8zM1752 560h8v8h-8zM1696 576h8v8h-8zM1704 576h8v8h-8z"/>
<path fill="#067efc" d="M1864 520h8v8h-8z"/>
<path fill="#1884fc" d="M1872 512h8v8h-8z"/>
<path fill="#247efc" d="M1880 512h8v8h-8z"/>
<path fill="#1878fc" d="M1872 520h8v8h-8z"/>
<path fill="#2478fc" d="M1880 520h8v8h-8z"/>
<path fill="#307efc" d="M1888 512h8v8h-8z"/>
<path fill="#3c78fc" d="M1896 512h8v8h-8z"/>
<path fill="#3072fc" d="M1888 520h8v8h-8z"/>
<path fill="#3c72fc" d="M1896 520h8v8h-8z"/>
<path fill="#4878fc" d="M1904 512h8v8h-8z"/>
<path fill="#5472fc" d="M1912 512h8v8h-8z"/>
<path fill="#486cfc" d="M1904 520h8v8h-8z"/>
<path fill="#546cfc" d="M1912 520h8v8h-8z"/>
<path fill="#6072fc" d="M1920 512h8v8h-8z"/>
<path fill="#6c6cfc" d="M1928 512h8v8h-8z"/>
<path fill="#606cfc" d="M1920 520h8v8h-8z"/>
<path fill="#6666fc" d="M1928 520h8v8h-8z"/>
<path fill="#786cfc" d="M1936 512h8v8h-8z"/>
<path fill="#8466fc" d="M1944 512h8v8h-8z"/>
<path fill="#7266fc" d="M1936 520h8v8h-8z"/>
<path fill="#7e60fc" d="M1944 520h8v8h-8z"/>
<path fill="#9066fc" d="M1952 512h8v8h-8z"/>
<path fill="#9c60fc" d="M1960 512h8v8h-8z"/>
<path fill="#8a60fc" d="M1952 520h8v8h-8z"/>
<path fill="#965afc" d="M1960 520h8v8h-8z"/>
<path fill="#a860fc" d="M1968 512h8v8h-8z"/>
<path fill="#b45afc" d="M1976 512h8v8h-8z"/>
<path fill="#a25afc" d="M1968 520h8v8h-8z"/>
<path fill="#ae54fc" d="M1976 520h8v8h-8z"/>
<path fill="#c05afc" d="M1984 512h8v8h-8z"/>
<path fill="#cc54fc" d="M1992 512h8v8h-8z"/>
<path fill="#ba54fc" d="M1984 520h8v8h-8z"/>
<path fill="#c64efc" d="M1992 520h8v8h-8z"/>
<path fill="#d854fc" d="M2000 512h8v8h-8z"/>
<path fill="#e44efc" d="M2008 512h8v8h-8z"/>
<path fill="#cc4efc" d="M2000 520h8v8h-8z"/>
<path fill="#d848fc" d="M2008 520h8v8h-8z"/>
<path fill="#f04efc" d="M2016 512h8v8h-8z"/>
<path fill="#fc48fc" d="M2024 512h8v8h-8z"/>
<path fill="#e448fc" d="M2016 520h8v8h-8z"/>
<path fill="#f042fc" d="M2024 520h8v8h-8z"/>
<path fill="#fc42f6" d="M2032 512h8v8h-8z"/>
<path fill="#fc3cea" d="M2040 512h8v8h-8z"/>
<path fill="#fc3cfc" d="M2032 520h8v8h-8z"/>
<path fill="#fc3cf6" d="M2040 520h8v8h-8z"/>
<path fill="#fc36e4" d="M2048 512h8v8h-8z"/>
<path fill="#fc30d8" d="M2056 512h8v8h-8z"/>
<path fill="#fc36ea" d="M2048 520h8v8h-8z"/>
<path fill="#fc30e4" d="M2056 520h8v8h-8z"/>
<path fill="#fc2ad2" d="M2064 512h8v8h-8z"/>
<path fill="#fc2ac6" d="M2072 512h8v8h-8z"/>
<path fill="#fc2ad8" d="M2064 520h8v8h-8z"/>
<path fill="#fc24d2" d="M2072 520h8v8h-8z"/>
<path fill="#fc24c0" d="M2080 512h8v8h-8z"/>
<path fill="#fc1eba" d="M2088 512h8v8h-8z"/>
<path fill="#fc24cc" d="M2080 520h8v8h-8z"/>
<path fill="#fc1ec6" d="M2088 520h8v8h-8z"/>
<path fill="#fc1eb4" d="M2096 512h8v8h-8z"/>
<path fill="#fc18ae" d="M2104 512h8v8h-8z"/>
<path fill="#fc18ba" d="M2096 520h8v8h-8z"/>
<path fill="#fc18b4" d="M2104 520h8v8h-8z"/>
<path fill="#fc12a8" d="M2112 512h8v8h-8zM2120 520h8v8h-8z"/>
<path fill="#fc12a2" d="M2120 512h8v8h-8z"/>
<path fill="#fc12ae" d="M2112 520h8v8h-8z"/>
<path fill="#fc0c9c" d="M2128 512h8v8h-8zM2136 512h8v8h-8z"/>
<path fill="#fc0ca8" d="M2128 520h8v8h-8z"/>
<path fill="#fc06a2" d="M2136 520h8v8h-8zM2144 528h8v8h-8z"/>
<path fill="#fc0696" d="M2144 512h8v8h-8z"/>
<path fill="#fc0690" d="M2152 512h8v8h-8z"/>
<path fill="#fc069c" d="M2144 520h8v8h-8z"/>
<path fill="#fc0096" d="M2152 520h8v8h-8zM2160 520h8v8h-8zM2168 528h8v8h-8zM2176 536h8v8h-8zM2184 536h8v8h-8zM2192 544h8v8h-8zM2200 552h8v8h-8zM2208 552h8v8h-8zM2216 560h8v8h-8zM2224 560h8v8h-8zM2232 568h8v8h-8zM2240 576h8v8h-8zM2248 576h8v8h-8zM2256 584h8v8h-8zM2264 584h8v8h-8zM2264 592h8v8h-8zM2272 592h8v8h-8zM2280 600h8v8h-8zM2288 600h8v8h-8zM2288 608h8v8h-8zM2296 608h8v8h-8zM2304 616h8v8h-8zM2312 616h8v8h-8zM2312 624h8v8h-8zM2320 624h8v8h-8zM2328 624h8v8h-8zM2328 632h8v8h-8zM2336 632h8v8h-8zM2344 640h8v8h-8zM2352 640h8v8h-8zM2352 648h8v8h-8z"/>
<path fill="#fc008a" d="M2160 512h8v8h-8zM2168 512h8v8h-8zM2176 520h8v8h-8zM2184 520h8v8h-8zM2192 528h8v8h-8zM2200 528h8v8h-8zM2200 536h8v8h-8zM2208 536h8v8h-8zM2216 544h8v8h-8zM2224 544h8v8h-8zM2232 552h8v8h-8zM2240 552h8v8h-8zM2248 560h8v8h-8zM2256 568h8v8h-8zM2264 568h8v8h-8zM2272 576h8v8h-8zM2280 576h8v8h-8zM2288 584h8v8h-8zM2296 584h8v8h-8zM2296 592h8v8h-8zM2304 592h8v8h-8zM2312 600h8v8h-8zM2320 600h8v8h-8zM2328 608h8v8h-8zM2336 608h8v8h-8zM2336 616h8v8h-8zM2344 616h8v8h-8zM2352 616h8v8h-8zM2352 624h8v8h-8zM2360 624h8v8h-8zM2368 632h8v8h-8z"/>
<path fill="#fc0090" d="M2168 520h8v8h-8zM2176 528h8v8h-8zM2184 528h8v8h-8zM2192 536h8v8h-8zM2200 544h8v8h-8zM2208 544h8v8h-8zM2216 552h8v8h-8zM2224 552h8v8h-8zM2232 560h8v8h-8zM2240 560h8v8h-8zM2240 568h8v8h-8zM2248 568h8v8h-8zM2256 576h8v8h-8zM2264 576h8v8h-8zM2272 584h8v8h-8zM2280 584h8v8h-8zM2280 592h8v8h-8zM2288 592h8v8h-8zM2296 600h8v8h-8zM2304 600h8v8h-8zM2304 608h8v8h-8zM2312 608h8v8h-8zM2320 608h8v8h-8zM2320 616h8v8h-8zM2328 616h8v8h-8zM2336 624h8v8h-8zM2344 624h8v8h-8zM2344 632h8v8h-8zM2352 632h8v8h-8zM2360 632h8v8h-8zM2360 640h8v8h-8z"/>
<path fill="#0078fc" d="M1824 536h8v8h-8zM1832 536h8v8h-8zM1848 528h8v8h-8zM1840 536h8v8h-8zM1856 528h8v8h-8zM1784 552h8v8h-8zM1792 552h8v8h-8zM1800 552h8v8h-8zM1808 544h8v8h-8zM1816 544h8v8h-8zM1736 568h8v8h-8zM1744 568h8v8h-8zM1752 568h8v8h-8zM1760 560h8v8h-8zM1768 560h8v8h-8zM1776 560h8v8h-8zM1696 584h8v8h-8zM1704 584h8v8h-8zM1712 576h8v8h-8zM1720 576h8v8h-8zM1712 584h8v8h-8zM1728 576h8v8h-8zM1736 576h8v8h-8z"/>
<path fill="#0072fc" d="M1848 536h8v8h-8zM1856 536h8v8h-8zM1808 552h8v8h-8zM1816 552h8v8h-8zM1824 544h8v8h-8zM1832 544h8v8h-8zM1840 544h8v8h-8zM1760 568h8v8h-8zM1768 568h8v8h-8zM1784 560h8v8h-8zM1776 568h8v8h-8zM1792 560h8v8h-8zM1800 560h8v8h-8zM1720 584h8v8h-8zM1728 584h8v8h-8zM1736 584h8v8h-8zM1744 576h8v8h-8zM1752 576h8v8h-8zM1696 592h8v8h-8zM1704 592h8v8h-8zM1712 592h8v8h-8z"/>
<path fill="#0678fc" d="M1864 528h8v8h-8z"/>
<path fill="#066cfc" d="M1864 536h8v8h-8z"/>
<path fill="#1272fc" d="M1872 528h8v8h-8z"/>
<path fill="#1e72fc" d="M1880 528h8v8h-8z"/>
<path fill="#126cfc" d="M1872 536h8v8h-8z"/>
<path fill="#1e6cfc" d="M1880 536h8v8h-8z"/>
<path fill="#2a6cfc" d="M1888 528h8v8h-8z"/>
<path fill="#366cfc" d="M1896 528h8v8h-8z"/>
<path fill="#2a66fc" d="M1888 536h8v8h-8z"/>
<path fill="#3666fc" d="M1896 536h8v8h-8z"/>
<path fill="#4266fc" d="M1904 528h8v8h-8z"/>
<path fill="#4e66fc" d="M1912 528h8v8h-8z"/>
<path fill="#3c60fc" d="M1904 536h8v8h-8z"/>
<path fill="#4860fc" d="M1912 536h8v8h-8z"/>
<path fill="#5a60fc" d="M1920 528h8v8h-8z"/>
<path fill="#6660fc" d="M1928 528h8v8h-8z"/>
<path fill="#545afc" d="M1920 536h8v8h-8z"/>
<path fill="#605afc" d="M1928 536h8v8h-8z"/>
<path fill="#6c5afc" d="M1936 528h8v8h-8z"/>
<path fill="#785afc" d="M1944 528h8v8h-8z"/>
<path fill="#6654fc" d="M1936 536h8v8h-8zM1936 544h8v8h-8z"/>
<path fill="#7254fc" d="M1944 536h8v8h-8z"/>
<path fill="#845afc" d="M1952 528h8v8h-8z"/>
<path fill="#9054fc" d="M1960 528h8v8h-8z"/>
<path fill="#7e54fc" d="M1952 536h8v8h-8z"/>
<path fill="#8a4efc" d="M1960 536h8v8h-8z"/>
<path fill="#9c54fc" d="M1968 528h8v8h-8z"/>
<path fill="#a24efc" d="M1976 528h8v8h-8z"/>
<path fill="#904efc" d="M1968 536h8v8h-8z"/>
<path fill="#9c48fc" d="M1976 536h8v8h-8z"/>
<path fill="#ae4efc" d="M1984 528h8v8h-8z"/>
<path fill="#ba48fc" d="M1992 528h8v8h-8z"/>
<path fill="#a848fc" d="M1984 536h8v8h-8z"/>
<path fill="#b442fc" d="M1992 536h8v8h-8z"/>
<path fill="#c648fc" d="M2000 528h8v8h-8z"/>
<path fill="#d242fc" d="M2008 528h8v8h-8z"/>
<path fill="#ba42fc" d="M2000 536h8v8h-8z"/>
<path fill="#c63cfc" d="M2008 536h8v8h-8z"/>
<path fill="#de42fc" d="M2016 528h8v8h-8z"/>
<path fill="#e43cfc" d="M2024 528h8v8h-8z"/>
<path fill="#d23cfc" d="M2016 536h8v8h-8z"/>
<path fill="#de36fc" d="M2024 536h8v8h-8z"/>
<path fill="#f036fc" d="M2032 528h8v8h-8z"/>
<path fill="#fc36fc" d="M2040 528h8v8h-8z"/>
<path fill="#ea36fc" d="M2032 536h8v8h-8z"/>
<path fill="#f030fc" d="M2040 536h8v8h-8z"/>
<path fill="#fc30f6" d="M2048 528h8v8h-8z"/>
<path fill="#fc2af0" d="M2056 528h8v8h-8z"/>
<path fill="#fc30fc" d="M2048 536h8v8h-8z"/>
<path fill="#fc2af6" d="M2056 536h8v8h-8z"/>
<path fill="#fc24e4" d="M2064 528h8v8h-8z"/>
<path fill="#fc24de" d="M2072 528h8v8h-8z"/>
<path fill="#fc24f0" d="M2064 536h8v8h-8z"/>
<path fill="#fc1ee4" d="M2072 536h8v8h-8z"/>
<path fill="#fc1ed2" d="M2080 528h8v8h-8z"/>
<path fill="#fc18cc" d="M2088 528h8v8h-8z"/>
<path fill="#fc1ede" d="M2080 536h8v8h-8z"/>
<path fill="#fc18d2" d="M2088 536h8v8h-8z"/>
<path fill="#fc18c6" d="M2096 528h8v8h-8z"/>
<path fill="#fc12c0" d="M2104 528h8v8h-8z"/>
<path fill="#fc12cc" d="M2096 536h8v8h-8z"/>
<path fill="#fc12c6" d="M2104 536h8v8h-8z"/>
<path fill="#fc12ba" d="M2112 528h8v8h-8z"/>
<path fill="#fc0cb4" d="M2120 528h8v8h-8z"/>
<path fill="#fc0cc0" d="M2112 536h8v8h-8z"/>
<path fill="#fc0cba" d="M2120 536h8v8h-8z"/>
<path fill="#fc0cae" d="M2128 528h8v8h-8z"/>
<path fill="#fc06a8" d="M2136 528h8v8h-8z"/>
<path fill="#fc06b4" d="M2128 536h8v8h-8z"/>
<path fill="#fc06ae" d="M2136 536h8v8h-8z"/>
<path fill="#fc009c" d="M2152 528h8v8h-8zM2160 528h8v8h-8zM2168 536h8v8h-8zM2176 544h8v8h-8zM2184 544h8v8h-8zM2192 552h8v8h-8zM2200 560h8v8h-8zM2208 560h8v8h-8zM2216 568h8v8h-8zM2224 568h8v8h-8zM2224 576h8v8h-8zM2232 576h8v8h-8zM2240 584h8v8h-8zM2248 584h8v8h-8zM2248 592h8v8h-8zM2256 592h8v8h-8zM2264 600h8v8h-8zM2272 600h8v8h-8zM2272 608h8v8h-8zM2280 608h8v8h-8zM2288 616h8v8h-8zM2296 616h8v8h-8zM2296 624h8v8h-8zM2304 624h8v8h-8zM2312 632h8v8h-8zM2320 632h8v8h-8zM2328 640h8v8h-8zM2336 640h8v8h-8zM2336 648h8v8h-8zM2344 648h8v8h-8z"/>
<path fill="#fc00a8" d="M2144 536h8v8h-8zM2152 536h8v8h-8zM2160 544h8v8h-8zM2168 552h8v8h-8zM2184 560h8v8h-8zM2192 568h8v8h-8zM2200 576h8v8h-8zM2208 576h8v8h-8zM2216 584h8v8h-8zM2224 592h8v8h-8zM2232 592h8v8h-8zM2240 600h8v8h-8zM2248 608h8v8h-8zM2256 608h8v8h-8zM2256 616h8v8h-8zM2264 616h8v8h-8zM2272 624h8v8h-8zM2280 624h8v8h-8zM2280 632h8v8h-8zM2288 632h8v8h-8zM2296 640h8v8h-8zM2304 640h8v8h-8zM2304 648h8v8h-8zM2312 648h8v8h-8zM2320 656h8v8h-8zM2328 664h8v8h-8zM2336 664h8v8h-8z"/>
<path fill="#fc00a2" d="M2160 536h8v8h-8zM2168 544h8v8h-8zM2176 552h8v8h-8zM2184 552h8v8h-8zM2192 560h8v8h-8zM2200 568h8v8h-8zM2208 568h8v8h-8zM2216 576h8v8h-8zM2224 584h8v8h-8zM2232 584h8v8h-8zM2240 592h8v8h-8zM2248 600h8v8h-8zM2256 600h8v8h-8zM2264 608h8v8h-8zM2272 616h8v8h-8zM2280 616h8v8h-8zM2288 624h8v8h-8zM2296 632h8v8h-8zM2304 632h8v8h-8zM2312 640h8v8h-8zM2320 640h8v8h-8zM2320 648h8v8h-8zM2328 648h8v8h-8zM2328 656h8v8h-8zM2336 656h8v8h-8zM2344 656h8v8h-8z"/>
<path fill="#006cfc" d="M1824 552h8v8h-8zM1832 552h8v8h-8zM1848 544h8v8h-8zM1840 552h8v8h-8zM1856 544h8v8h-8zM1784 568h8v8h-8zM1792 568h8v8h-8zM1800 568h8v8h-8zM1808 560h8v8h-8zM1816 560h8v8h-8zM1744 584h8v8h-8zM1752 584h8v8h-8zM1760 576h8v8h-8zM1768 576h8v8h-8zM1760 584h8v8h-8zM1776 576h8v8h-8zM1704 600h8v8h-8zM1720 592h8v8h-8zM1712 600h8v8h-8zM1720 600h8v8h-8zM1728 592h8v8h-8zM1736 592h8v8h-8z"/>
<path fill="#0066fc" d="M1848 552h8v8h-8zM1864 544h8v8h-8zM1856 552h8v8h-8zM1808 568h8v8h-8zM1816 568h8v8h-8zM1824 560h8v8h-8zM1832 560h8v8h-8zM1824 568h8v8h-8zM1840 560h8v8h-8zM1768 584h8v8h-8zM1784 576h8v8h-8zM1776 584h8v8h-8zM1784 584h8v8h-8zM1792 576h8v8h-8zM1800 576h8v8h-8zM1728 600h8v8h-8zM1736 600h8v8h-8zM1744 592h8v8h-8zM1752 592h8v8h-8zM1744 600h8v8h-8zM1760 592h8v8h-8zM1768 592h8v8h-8zM1712 608h8v8h-8zM1720 608h8v8h-8zM1728 608h8v8h-8z"/>
<path fill="#0060fc" d="M1864 552h8v8h-8zM1832 568h8v8h-8zM1848 560h8v8h-8zM1840 568h8v8h-8zM1856 560h8v8h-8zM1864 560h8v8h-8zM1792 584h8v8h-8zM1800 584h8v8h-8zM1808 576h8v8h-8zM1816 576h8v8h-8zM1808 584h8v8h-8zM1824 576h8v8h-8zM1752 600h8v8h-8zM1760 600h8v8h-8zM1768 600h8v8h-8zM1776 592h8v8h-8zM1784 592h8v8h-8zM1792 592h8v8h-8zM1712 616h8v8h-8zM1720 616h8v8h-8zM1736 608h8v8h-8zM1728 616h8v8h-8zM1736 616h8v8h-8zM1744 608h8v8h-8zM1752 608h8v8h-8z"/>
<path fill="#0c66fc" d="M1872 544h8v8h-8z"/>
<path fill="#1866fc" d="M1880 544h8v8h-8z"/>
<path fill="#0c60fc" d="M1872 552h8v8h-8z"/>
<path fill="#1860fc" d="M1880 552h8v8h-8z"/>
<path fill="#2460fc" d="M1888 544h8v8h-8z"/>
<path fill="#3060fc" d="M1896 544h8v8h-8z"/>
<path fill="#245afc" d="M1888 552h8v8h-8z"/>
<path fill="#2a5afc" d="M1896 552h8v8h-8z"/>
<path fill="#3c5afc" d="M1904 544h8v8h-8z"/>
<path fill="#425afc" d="M1912 544h8v8h-8z"/>
<path fill="#3654fc" d="M1904 552h8v8h-8z"/>
<path fill="#4254fc" d="M1912 552h8v8h-8z"/>
<path fill="#4e54fc" d="M1920 544h8v8h-8zM1920 552h8v8h-8z"/>
<path fill="#5a54fc" d="M1928 544h8v8h-8z"/>
<path fill="#544efc" d="M1928 552h8v8h-8z"/>
<path fill="#6c4efc" d="M1944 544h8v8h-8z"/>
<path fill="#604efc" d="M1936 552h8v8h-8z"/>
<path fill="#6c48fc" d="M1944 552h8v8h-8z"/>
<path fill="#784efc" d="M1952 544h8v8h-8z"/>
<path fill="#8448fc" d="M1960 544h8v8h-8z"/>
<path fill="#7248fc" d="M1952 552h8v8h-8z"/>
<path fill="#7e42fc" d="M1960 552h8v8h-8z"/>
<path fill="#8a48fc" d="M1968 544h8v8h-8z"/>
<path fill="#9642fc" d="M1976 544h8v8h-8z"/>
<path fill="#8442fc" d="M1968 552h8v8h-8z"/>
<path fill="#903cfc" d="M1976 552h8v8h-8z"/>
<path fill="#a242fc" d="M1984 544h8v8h-8z"/>
<path fill="#a83cfc" d="M1992 544h8v8h-8z"/>
<path fill="#9c3cfc" d="M1984 552h8v8h-8z"/>
<path fill="#a236fc" d="M1992 552h8v8h-8z"/>
<path fill="#b43cfc" d="M2000 544h8v8h-8z"/>
<path fill="#c036fc" d="M2008 544h8v8h-8z"/>
<path fill="#ae36fc" d="M2000 552h8v8h-8z"/>
<path fill="#ba30fc" d="M2008 552h8v8h-8z"/>
<path fill="#cc36fc" d="M2016 544h8v8h-8z"/>
<path fill="#d230fc" d="M2024 544h8v8h-8z"/>
<path fill="#c030fc" d="M2016 552h8v8h-8z"/>
<path fill="#cc30fc" d="M2024 552h8v8h-8z"/>
<path fill="#de30fc" d="M2032 544h8v8h-8z"/>
<path fill="#ea2afc" d="M2040 544h8v8h-8z"/>
<path fill="#d22afc" d="M2032 552h8v8h-8z"/>
<path fill="#de2afc" d="M2040 552h8v8h-8z"/>
<path fill="#f02afc" d="M2048 544h8v8h-8z"/>
<path fill="#fc24fc" d="M2056 544h8v8h-8z"/>
<path fill="#ea24fc" d="M2048 552h8v8h-8z"/>
<path fill="#f01efc" d="M2056 552h8v8h-8z"/>
<path fill="#fc1ef6" d="M2064 544h8v8h-8z"/>
<path fill="#fc1ef0" d="M2072 544h8v8h-8z"/>
<path fill="#fc1efc" d="M2064 552h8v8h-8z"/>
<path fill="#fc18f6" d="M2072 552h8v8h-8z"/>
<path fill="#fc18e4" d="M2080 544h8v8h-8z"/>
<path fill="#fc12de" d="M2088 544h8v8h-8z"/>
<path fill="#fc18f0" d="M2080 552h8v8h-8z"/>
<path fill="#fc12e4" d="M2088 552h8v8h-8z"/>
<path fill="#fc12d8" d="M2096 544h8v8h-8z"/>
<path fill="#fc0ccc" d="M2104 544h8v8h-8z"/>
<path fill="#fc0cde" d="M2096 552h8v8h-8z"/>
<path fill="#fc0cd8" d="M2104 552h8v8h-8z"/>
<path fill="#fc0cc6" d="M2112 544h8v8h-8z"/>
<path fill="#fc06c0" d="M2120 544h8v8h-8z"/>
<path fill="#fc06d2" d="M2112 552h8v8h-8z"/>
<path fill="#fc06cc" d="M2120 552h8v8h-8z"/>
<path fill="#fc06ba" d="M2128 544h8v8h-8z"/>
<path fill="#fc00b4" d="M2136 544h8v8h-8zM2144 544h8v8h-8zM2152 552h8v8h-8zM2160 560h8v8h-8zM2168 568h8v8h-8zM2176 568h8v8h-8zM2184 576h8v8h-8zM2192 584h8v8h-8zM2200 592h8v8h-8zM2208 592h8v8h-8zM2216 600h8v8h-8zM2224 608h8v8h-8zM2232 608h8v8h-8zM2232 616h8v8h-8zM2240 616h8v8h-8zM2248 624h8v8h-8zM2256 632h8v8h-8zM2264 632h8v8h-8zM2264 640h8v8h-8zM2272 640h8v8h-8zM2280 648h8v8h-8zM2288 656h8v8h-8zM2296 656h8v8h-8zM2296 664h8v8h-8zM2304 664h8v8h-8zM2312 672h8v8h-8zM2320 672h8v8h-8zM2320 680h8v8h-8z"/>
<path fill="#fc00c6" d="M2128 552h8v8h-8zM2136 560h8v8h-8zM2144 568h8v8h-8zM2152 576h8v8h-8zM2168 584h8v8h-8zM2176 592h8v8h-8zM2184 600h8v8h-8zM2192 608h8v8h-8zM2200 616h8v8h-8zM2208 616h8v8h-8zM2216 624h8v8h-8zM2224 632h8v8h-8zM2232 640h8v8h-8zM2240 648h8v8h-8zM2248 648h8v8h-8zM2256 656h8v8h-8zM2264 664h8v8h-8zM2272 672h8v8h-8zM2280 672h8v8h-8zM2280 680h8v8h-8zM2288 680h8v8h-8zM2296 688h8v8h-8zM2304 696h8v8h-8z"/>
<path fill="#fc00c0" d="M2136 552h8v8h-8zM2144 560h8v8h-8zM2152 568h8v8h-8zM2160 576h8v8h-8zM2168 576h8v8h-8zM2176 584h8v8h-8zM2184 592h8v8h-8zM2192 600h8v8h-8zM2200 608h8v8h-8zM2208 608h8v8h-8zM2216 616h8v8h-8zM2224 624h8v8h-8zM2232 632h8v8h-8zM2240 632h8v8h-8zM2240 640h8v8h-8zM2248 640h8v8h-8zM2256 648h8v8h-8zM2264 656h8v8h-8zM2272 656h8v8h-8zM2272 664h8v8h-8zM2280 664h8v8h-8zM2288 672h8v8h-8zM2296 680h8v8h-8zM2304 688h8v8h-8zM2312 688h8v8h-8z"/>
<path fill="#fc00ae" d="M2152 544h8v8h-8zM2160 552h8v8h-8zM2168 560h8v8h-8zM2176 560h8v8h-8zM2184 568h8v8h-8zM2192 576h8v8h-8zM2200 584h8v8h-8zM2208 584h8v8h-8zM2216 592h8v8h-8zM2224 600h8v8h-8zM2232 600h8v8h-8zM2240 608h8v8h-8zM2248 616h8v8h-8zM2256 624h8v8h-8zM2264 624h8v8h-8zM2272 632h8v8h-8zM2280 640h8v8h-8zM2288 640h8v8h-8zM2288 648h8v8h-8zM2296 648h8v8h-8zM2304 656h8v8h-8zM2312 656h8v8h-8zM2312 664h8v8h-8zM2320 664h8v8h-8zM2328 672h8v8h-8z"/>
<path fill="#fc00ba" d="M2144 552h8v8h-8zM2152 560h8v8h-8zM2160 568h8v8h-8zM2176 576h8v8h-8zM2184 584h8v8h-8zM2192 592h8v8h-8zM2200 600h8v8h-8zM2208 600h8v8h-8zM2216 608h8v8h-8zM2224 616h8v8h-8zM2232 624h8v8h-8zM2240 624h8v8h-8zM2248 632h8v8h-8zM2256 640h8v8h-8zM2264 648h8v8h-8zM2272 648h8v8h-8zM2280 656h8v8h-8zM2288 664h8v8h-8zM2296 672h8v8h-8zM2304 672h8v8h-8zM2304 680h8v8h-8zM2312 680h8v8h-8z"/>
<path fill="#005afc" d="M1848 568h8v8h-8zM1856 568h8v8h-8zM1864 568h8v8h-8zM1816 584h8v8h-8zM1832 576h8v8h-8zM1824 584h8v8h-8zM1832 584h8v8h-8zM1840 576h8v8h-8zM1848 576h8v8h-8zM1776 600h8v8h-8zM1784 600h8v8h-8zM1800 592h8v8h-8zM1792 600h8v8h-8zM1808 592h8v8h-8zM1744 616h8v8h-8zM1752 616h8v8h-8zM1760 608h8v8h-8zM1768 608h8v8h-8zM1760 616h8v8h-8zM1776 608h8v8h-8zM1712 624h16v16h-16zM1728 624h16v16h-16z"/>
<path fill="#0c5afc" d="M1872 560h8v8h-8z"/>
<path fill="#125afc" d="M1880 560h8v8h-8z"/>
<path fill="#0654fc" d="M1872 568h8v8h-8z"/>
<path fill="#1254fc" d="M1880 568h8v8h-8z"/>
<path fill="#1e54fc" d="M1888 560h8v8h-8z"/>
<path fill="#2a54fc" d="M1896 560h8v8h-8z"/>
<path fill="#1e4efc" d="M1888 568h8v8h-8z"/>
<path fill="#244efc" d="M1896 568h8v8h-8z"/>
<path fill="#364efc" d="M1904 560h8v8h-8z"/>
<path fill="#3c4efc" d="M1912 560h8v8h-8z"/>
<path fill="#304efc" d="M1904 568h8v8h-8z"/>
<path fill="#3c48fc" d="M1912 568h8v8h-8z"/>
<path fill="#484efc" d="M1920 560h8v8h-8z"/>
<path fill="#5448fc" d="M1928 560h8v8h-8z"/>
<path fill="#4248fc" d="M1920 568h8v8h-8z"/>
<path fill="#4e42fc" d="M1928 568h8v8h-8z"/>
<path fill="#5a48fc" d="M1936 560h8v8h-8z"/>
<path fill="#6642fc" d="M1944 560h8v8h-8z"/>
<path fill="#5442fc" d="M1936 568h8v8h-8z"/>
<path fill="#6042fc" d="M1944 568h8v8h-8z"/>
<path fill="#6c42fc" d="M1952 560h8v8h-8z"/>
<path fill="#783cfc" d="M1960 560h8v8h-8z"/>
<path fill="#6c3cfc" d="M1952 568h8v8h-8z"/>
<path fill="#723cfc" d="M1960 568h8v8h-8z"/>
<path fill="#7e3cfc" d="M1968 560h8v8h-8z"/>
<path fill="#8a3cfc" d="M1976 560h8v8h-8z"/>
<path fill="#7e36fc" d="M1968 568h8v8h-8z"/>
<path fill="#8436fc" d="M1976 568h8v8h-8z"/>
<path fill="#9636fc" d="M1984 560h8v8h-8z"/>
<path fill="#9c36fc" d="M1992 560h8v8h-8z"/>
<path fill="#9030fc" d="M1984 568h8v8h-8z"/>
<path fill="#9630fc" d="M1992 568h8v8h-8z"/>
<path fill="#a830fc" d="M2000 560h8v8h-8z"/>
<path fill="#ae30fc" d="M2008 560h8v8h-8z"/>
<path fill="#a230fc" d="M2000 568h8v8h-8z"/>
<path fill="#a82afc" d="M2008 568h8v8h-8z"/>
<path fill="#ba2afc" d="M2016 560h8v8h-8z"/>
<path fill="#c62afc" d="M2024 560h8v8h-8z"/>
<path fill="#b42afc" d="M2016 568h8v8h-8z"/>
<path fill="#ba24fc" d="M2024 568h8v8h-8z"/>
<path fill="#cc24fc" d="M2032 560h8v8h-8z"/>
<path fill="#d824fc" d="M2040 560h8v8h-8z"/>
<path fill="#c624fc" d="M2032 568h8v8h-8z"/>
<path fill="#cc1efc" d="M2040 568h8v8h-8z"/>
<path fill="#de1efc" d="M2048 560h8v8h-8z"/>
<path fill="#ea1efc" d="M2056 560h8v8h-8z"/>
<path fill="#d81efc" d="M2048 568h8v8h-8z"/>
<path fill="#de18fc" d="M2056 568h8v8h-8z"/>
<path fill="#f018fc" d="M2064 560h8v8h-8z"/>
<path fill="#fc18fc" d="M2072 560h8v8h-8z"/>
<path fill="#ea18fc" d="M2064 568h8v8h-8z"/>
<path fill="#f612fc" d="M2072 568h8v8h-8z"/>
<path fill="#fc12f6" d="M2080 560h8v8h-8z"/>
<path fill="#fc0cf0" d="M2088 560h8v8h-8z"/>
<path fill="#fc0cfc" d="M2080 568h8v8h-8z"/>
<path fill="#fc0cf6" d="M2088 568h8v8h-8z"/>
<path fill="#fc0cea" d="M2096 560h8v8h-8z"/>
<path fill="#fc06de" d="M2104 560h8v8h-8z"/>
<path fill="#fc06f0" d="M2096 568h8v8h-8z"/>
<path fill="#fc06ea" d="M2104 568h8v8h-8z"/>
<path fill="#fc06d8" d="M2112 560h8v8h-8z"/>
<path fill="#fc00d2" d="M2120 560h8v8h-8zM2128 568h8v8h-8zM2136 576h8v8h-8zM2144 584h8v8h-8zM2160 592h8v8h-8zM2168 600h8v8h-8zM2176 608h8v8h-8zM2184 616h8v8h-8zM2192 624h8v8h-8zM2208 632h8v8h-8zM2216 640h8v8h-8zM2224 648h8v8h-8zM2232 656h8v8h-8zM2240 664h8v8h-8zM2248 672h8v8h-8zM2256 672h8v8h-8zM2264 680h8v8h-8zM2272 688h8v8h-8zM2280 696h8v8h-8zM2288 704h8v8h-8z"/>
<path fill="#fc00de" d="M2112 568h8v8h-8zM2136 584h8v8h-8zM2144 592h8v8h-8zM2152 600h8v8h-8zM2160 608h8v8h-8zM2168 616h8v8h-8zM2176 624h8v8h-8zM2184 632h8v8h-8zM2192 640h8v8h-8zM2200 640h8v8h-8zM2208 648h8v8h-8zM2216 656h8v8h-8zM2224 664h8v8h-8zM2232 672h8v8h-8zM2240 680h8v8h-8zM2248 688h8v8h-8zM2256 696h8v8h-8zM2264 696h8v8h-8zM2264 704h8v8h-8zM2272 704h8v8h-8zM2280 712h8v8h-8z"/>
<path fill="#fc00d8" d="M2120 568h8v8h-8zM2128 576h8v8h-8zM2152 592h8v8h-8zM2160 600h8v8h-8zM2168 608h8v8h-8zM2176 616h8v8h-8zM2184 624h8v8h-8zM2192 632h8v8h-8zM2200 632h8v8h-8zM2208 640h8v8h-8zM2216 648h8v8h-8zM2224 656h8v8h-8zM2232 664h8v8h-8zM2240 672h8v8h-8zM2248 680h8v8h-8zM2256 680h8v8h-8zM2256 688h8v8h-8zM2264 688h8v8h-8zM2272 696h8v8h-8zM2280 704h8v8h-8zM2288 712h8v8h-8z"/>
<path fill="#fc00cc" d="M2128 560h8v8h-8zM2136 568h8v8h-8zM2144 576h8v8h-8zM2152 584h8v8h-8zM2160 584h8v8h-8zM2168 592h8v8h-8zM2176 600h8v8h-8zM2184 608h8v8h-8zM2192 616h8v8h-8zM2200 624h8v8h-8zM2208 624h8v8h-8zM2216 632h8v8h-8zM2224 640h8v8h-8zM2232 648h8v8h-8zM2240 656h8v8h-8zM2248 656h8v8h-8zM2248 664h8v8h-8zM2256 664h8v8h-8zM2264 672h8v8h-8zM2272 680h8v8h-8zM2280 688h8v8h-8zM2288 688h8v8h-8zM2288 696h8v8h-8zM2296 696h8v8h-8zM2296 704h8v8h-8z"/>
<path fill="#0054fc" d="M1840 584h8v8h-8zM1848 584h8v8h-8zM1856 576h8v8h-8zM1864 576h8v8h-8zM1800 600h8v8h-8zM1816 592h8v8h-8zM1808 600h8v8h-8zM1816 600h8v8h-8zM1824 592h8v8h-8zM1832 592h8v8h-8zM1768 616h8v8h-8zM1784 608h8v8h-8zM1776 616h8v8h-8zM1784 616h8v8h-8zM1792 608h16v16h-16zM1744 624h16v16h-16zM1760 624h16v16h-16z"/>
<path fill="#004efc" d="M1856 584h8v8h-8zM1864 584h8v8h-8zM1824 600h8v8h-8zM1832 600h8v8h-8zM1840 592h8v8h-8zM1848 592h8v8h-8zM1840 600h8v8h-8zM1856 592h8v8h-8zM1808 608h16v16h-16zM1776 624h16v16h-16zM1728 640h16v16h-16zM1744 640h16v16h-16z"/>
<path fill="#064efc" d="M1872 576h8v8h-8zM1872 584h8v8h-8z"/>
<path fill="#124efc" d="M1880 576h8v8h-8z"/>
<path fill="#0c48fc" d="M1880 584h8v8h-8zM1880 592h8v8h-8z"/>
<path fill="#184efc" d="M1888 576h8v8h-8z"/>
<path fill="#2448fc" d="M1896 576h8v8h-8zM1896 584h8v8h-8z"/>
<path fill="#1848fc" d="M1888 584h8v8h-8z"/>
<path fill="#3048fc" d="M1904 576h8v8h-8z"/>
<path fill="#3642fc" d="M1912 576h8v8h-8zM1912 584h8v8h-8z"/>
<path fill="#2a42fc" d="M1904 584h8v8h-8z"/>
<path fill="#4242fc" d="M1920 576h8v8h-8z"/>
<path fill="#4842fc" d="M1928 576h8v8h-8z"/>
<path fill="#3c3cfc" d="M1920 584h8v8h-8zM1920 592h8v8h-8z"/>
<path fill="#483cfc" d="M1928 584h8v8h-8z"/>
<path fill="#543cfc" d="M1936 576h8v8h-8z"/>
<path fill="#5a3cfc" d="M1944 576h8v8h-8z"/>
<path fill="#4e3cfc" d="M1936 584h8v8h-8z"/>
<path fill="#5a36fc" d="M1944 584h8v8h-8z"/>
<path fill="#6636fc" d="M1952 576h8v8h-8z"/>
<path fill="#6c36fc" d="M1960 576h8v8h-8z"/>
<path fill="#6036fc" d="M1952 584h8v8h-8z"/>
<path fill="#6c30fc" d="M1960 584h8v8h-8z"/>
<path fill="#7836fc" d="M1968 576h8v8h-8z"/>
<path fill="#7e30fc" d="M1976 576h8v8h-8z"/>
<path fill="#7230fc" d="M1968 584h8v8h-8z"/>
<path fill="#782afc" d="M1976 584h8v8h-8zM1976 592h8v8h-8z"/>
<path fill="#8a30fc" d="M1984 576h8v8h-8z"/>
<path fill="#902afc" d="M1992 576h8v8h-8z"/>
<path fill="#842afc" d="M1984 584h8v8h-8z"/>
<path fill="#8a2afc" d="M1992 584h8v8h-8z"/>
<path fill="#9c2afc" d="M2000 576h8v8h-8z"/>
<path fill="#a224fc" d="M2008 576h8v8h-8z"/>
<path fill="#9624fc" d="M2000 584h8v8h-8z"/>
<path fill="#9c24fc" d="M2008 584h8v8h-8z"/>
<path fill="#ae24fc" d="M2016 576h8v8h-8z"/>
<path fill="#b41efc" d="M2024 576h8v8h-8z"/>
<path fill="#a81efc" d="M2016 584h8v8h-8z"/>
<path fill="#ae1efc" d="M2024 584h8v8h-8z"/>
<path fill="#c01efc" d="M2032 576h8v8h-8z"/>
<path fill="#c618fc" d="M2040 576h8v8h-8z"/>
<path fill="#ba18fc" d="M2032 584h8v8h-8z"/>
<path fill="#c018fc" d="M2040 584h8v8h-8z"/>
<path fill="#d218fc" d="M2048 576h8v8h-8z"/>
<path fill="#d812fc" d="M2056 576h8v8h-8z"/>
<path fill="#c612fc" d="M2048 584h8v8h-8z"/>
<path fill="#d212fc" d="M2056 584h8v8h-8z"/>
<path fill="#e412fc" d="M2064 576h8v8h-8z"/>
<path fill="#ea0cfc" d="M2072 576h8v8h-8z"/>
<path fill="#d80cfc" d="M2064 584h8v8h-8z"/>
<path fill="#e40cfc" d="M2072 584h8v8h-8z"/>
<path fill="#f60cfc" d="M2080 576h8v8h-8z"/>
<path fill="#fc06fc" d="M2088 576h8v8h-8z"/>
<path fill="#ea06fc" d="M2080 584h8v8h-8z"/>
<path fill="#f606fc" d="M2088 584h8v8h-8z"/>
<path fill="#fc06f6" d="M2096 576h8v8h-8z"/>
<path fill="#fc00f0" d="M2104 576h8v8h-8zM2112 584h8v8h-8zM2120 592h8v8h-8zM2128 600h8v8h-8zM2136 608h8v8h-8zM2144 616h8v8h-8zM2152 624h8v8h-8zM2160 632h8v8h-8zM2184 648h8v8h-8zM2192 656h8v8h-8zM2200 664h8v8h-8zM2208 672h8v8h-8zM2216 680h8v8h-8zM2224 688h8v8h-8zM2232 696h8v8h-8zM2240 704h8v8h-8zM2248 712h8v8h-8zM2256 720h8v8h-8zM2264 728h8v8h-8z"/>
<path fill="#fc00fc" d="M2096 584h8v8h-8zM2104 592h8v8h-8zM2112 592h8v8h-8zM2112 600h8v8h-8zM2120 600h8v8h-8zM2120 608h8v8h-8zM2128 608h8v8h-8zM2128 616h8v8h-8zM2136 616h8v8h-8zM2136 624h8v8h-8zM2144 624h8v8h-8zM2144 632h8v8h-8zM2152 632h8v8h-8zM2152 640h8v8h-8zM2160 640h8v8h-8zM2160 648h8v8h-8zM2168 648h8v8h-8zM2168 656h8v8h-8zM2176 656h8v8h-8zM2176 664h8v8h-8zM2184 664h8v8h-8zM2184 672h8v8h-8zM2192 672h8v8h-8zM2192 680h8v8h-8zM2200 680h8v8h-8zM2200 688h8v8h-8zM2208 688h8v8h-8zM2208 696h8v8h-8zM2216 696h8v8h-8zM2216 704h8v8h-8zM2224 704h8v8h-8zM2224 712h8v8h-8zM2232 712h8v8h-8zM2232 720h8v8h-8zM2240 720h8v8h-8zM2240 728h8v8h-8zM2248 728h8v8h-8zM2248 736h8v8h-8zM2256 736h8v8h-8zM2256 744h8v8h-8z"/>
<path fill="#fc00f6" d="M2104 584h8v8h-8zM2168 640h8v8h-8zM2176 648h8v8h-8zM2184 656h8v8h-8zM2192 664h8v8h-8zM2200 672h8v8h-8zM2208 680h8v8h-8zM2216 688h8v8h-8zM2224 696h8v8h-8zM2232 704h8v8h-8zM2240 712h8v8h-8zM2248 720h8v8h-8zM2256 728h8v8h-8zM2264 736h8v8h-8z"/>
<path fill="#fc00ea" d="M2112 576h8v8h-8zM2120 584h8v8h-8zM2128 592h8v8h-8zM2136 600h8v8h-8zM2144 608h8v8h-8zM2152 616h8v8h-8zM2160 624h8v8h-8zM2168 632h8v8h-8zM2176 640h8v8h-8zM2192 648h8v8h-8zM2200 656h8v8h-8zM2208 664h8v8h-8zM2216 672h8v8h-8zM2224 680h8v8h-8zM2232 688h8v8h-8zM2240 696h8v8h-8zM2248 704h8v8h-8zM2256 712h8v8h-8zM2264 720h8v8h-8zM2272 728h8v8h-8z"/>
<path fill="#fc00e4" d="M2120 576h8v8h-8zM2128 584h8v8h-8zM2136 592h8v8h-8zM2144 600h8v8h-8zM2152 608h8v8h-8zM2160 616h8v8h-8zM2168 624h8v8h-8zM2176 632h8v8h-8zM2184 640h8v8h-8zM2200 648h8v8h-8zM2208 656h8v8h-8zM2216 664h8v8h-8zM2224 672h8v8h-8zM2232 680h8v8h-8zM2240 688h8v8h-8zM2248 696h8v8h-8zM2256 704h8v8h-8zM2264 712h8v8h-8zM2272 712h8v8h-8zM2272 720h8v8h-8zM2280 720h8v8h-8z"/>
<path fill="#0048fc" d="M1848 600h8v8h-8zM1864 592h8v8h-8zM1856 600h8v8h-8zM1864 600h8v8h-8zM1872 592h8v8h-8zM1824 608h16v16h-16zM1840 608h16v16h-16zM1792 624h16v16h-16zM1808 624h16v16h-16zM1760 640h16v16h-16zM1776 640h16v16h-16zM1728 656h16v16h-16zM1744 656h16v16h-16z"/>
<path fill="#0042fc" d="M1872 600h8v8h-8zM1856 608h16v16h-16zM1872 608h8v8h-8zM1824 624h16v16h-16zM1792 640h16v16h-16zM1760 656h16v16h-16zM1776 656h16v16h-16zM1744 672h16v16h-16z"/>
<path fill="#0c42fc" d="M1880 600h8v8h-8z"/>
<path fill="#1842fc" d="M1888 592h8v8h-8z"/>
<path fill="#1e42fc" d="M1896 592h8v8h-8z"/>
<path fill="#1242fc" d="M1888 600h8v8h-8z"/>
<path fill="#1e3cfc" d="M1896 600h8v8h-8z"/>
<path fill="#2a3cfc" d="M1904 592h8v8h-8z"/>
<path fill="#303cfc" d="M1912 592h8v8h-8z"/>
<path fill="#243cfc" d="M1904 600h8v8h-8z"/>
<path fill="#3036fc" d="M1912 600h8v8h-8z"/>
<path fill="#4236fc" d="M1928 592h8v8h-8zM1928 600h8v8h-8z"/>
<path fill="#3636fc" d="M1920 600h8v8h-8z"/>
<path fill="#4e36fc" d="M1936 592h8v8h-8z"/>
<path fill="#5436fc" d="M1944 592h8v8h-8z"/>
<path fill="#4830fc" d="M1936 600h8v8h-8zM1936 608h8v8h-8z"/>
<path fill="#4e30fc" d="M1944 600h8v8h-8z"/>
<path fill="#5a30fc" d="M1952 592h8v8h-8z"/>
<path fill="#6630fc" d="M1960 592h8v8h-8z"/>
<path fill="#5a2afc" d="M1952 600h8v8h-8z"/>
<path fill="#602afc" d="M1960 600h8v8h-8z"/>
<path fill="#6c2afc" d="M1968 592h8v8h-8zM1968 600h8v8h-8z"/>
<path fill="#7224fc" d="M1976 600h8v8h-8z"/>
<path fill="#7e24fc" d="M1984 592h8v8h-8z"/>
<path fill="#8424fc" d="M1992 592h8v8h-8z"/>
<path fill="#7824fc" d="M1984 600h8v8h-8z"/>
<path fill="#841efc" d="M1992 600h8v8h-8z"/>
<path fill="#9024fc" d="M2000 592h8v8h-8z"/>
<path fill="#961efc" d="M2008 592h8v8h-8z"/>
<path fill="#8a1efc" d="M2000 600h8v8h-8z"/>
<path fill="#901efc" d="M2008 600h8v8h-8z"/>
<path fill="#a21efc" d="M2016 592h8v8h-8z"/>
<path fill="#a818fc" d="M2024 592h8v8h-8z"/>
<path fill="#9c18fc" d="M2016 600h8v8h-8z"/>
<path fill="#a218fc" d="M2024 600h8v8h-8z"/>
<path fill="#ae18fc" d="M2032 592h8v8h-8z"/>
<path fill="#ba12fc" d="M2040 592h8v8h-8z"/>
<path fill="#a812fc" d="M2032 600h8v8h-8zM2032 608h8v8h-8z"/>
<path fill="#b412fc" d="M2040 600h8v8h-8z"/>
<path fill="#c012fc" d="M2048 592h8v8h-8z"/>
<path fill="#cc0cfc" d="M2056 592h8v8h-8z"/>
<path fill="#ba0cfc" d="M2048 600h8v8h-8z"/>
<path fill="#c60cfc" d="M2056 600h8v8h-8z"/>
<path fill="#d20cfc" d="M2064 592h8v8h-8z"/>
<path fill="#d806fc" d="M2072 592h8v8h-8z"/>
<path fill="#cc06fc" d="M2064 600h8v8h-8z"/>
<path fill="#d206fc" d="M2072 600h8v8h-8z"/>
<path fill="#e406fc" d="M2080 592h8v8h-8z"/>
<path fill="#ea00fc" d="M2088 592h8v8h-8zM2096 600h8v8h-8zM2104 608h8v8h-8zM2128 640h8v8h-8zM2136 648h8v8h-8zM2144 656h8v8h-8zM2152 664h8v8h-8zM2160 672h8v8h-8zM2168 680h8v8h-8zM2176 688h8v8h-8zM2184 696h8v8h-8zM2192 704h8v8h-8zM2200 712h8v8h-8zM2208 720h8v8h-8zM2216 728h8v8h-8zM2224 736h8v8h-8zM2224 744h8v8h-8zM2232 744h8v8h-8zM2232 752h8v8h-8zM2240 752h8v8h-8zM2240 760h8v8h-8z"/>
<path fill="#de00fc" d="M2080 600h8v8h-8zM2088 608h8v8h-8zM2096 616h8v8h-8zM2104 624h8v8h-8zM2112 632h8v8h-8zM2120 640h8v8h-8zM2128 648h8v8h-8zM2136 664h8v8h-8zM2144 672h8v8h-8zM2152 680h8v8h-8zM2160 688h8v8h-8zM2168 696h8v8h-8zM2176 704h8v8h-8zM2184 712h8v8h-8zM2192 720h8v8h-8zM2200 728h8v8h-8zM2200 736h8v8h-8zM2208 744h8v8h-8zM2216 752h8v8h-8zM2224 760h8v8h-8zM2232 768h8v8h-8z"/>
<path fill="#e400fc" d="M2088 600h8v8h-8zM2096 608h8v8h-8zM2104 616h8v8h-8zM2112 624h8v8h-8zM2120 632h8v8h-8zM2136 656h8v8h-8zM2144 664h8v8h-8zM2152 672h8v8h-8zM2160 680h8v8h-8zM2168 688h8v8h-8zM2176 696h8v8h-8zM2184 704h8v8h-8zM2192 712h8v8h-8zM2200 720h8v8h-8zM2208 728h8v8h-8zM2208 736h8v8h-8zM2216 736h8v8h-8zM2216 744h8v8h-8zM2224 752h8v8h-8zM2232 760h8v8h-8z"/>
<path fill="#f600fc" d="M2096 592h8v8h-8zM2104 600h8v8h-8zM2112 608h8v8h-8zM2120 616h8v8h-8zM2128 624h8v8h-8zM2136 632h8v8h-8zM2144 640h8v8h-8zM2152 648h8v8h-8zM2160 656h8v8h-8zM2168 664h8v8h-8zM2176 672h8v8h-8zM2184 680h8v8h-8zM2192 688h8v8h-8zM2200 696h8v8h-8zM2208 704h8v8h-8zM2216 712h8v8h-8zM2224 720h8v8h-8zM2232 728h8v8h-8zM2240 736h8v8h-8zM2248 744h8v8h-8z"/>
<path fill="#063cfc" d="M1880 608h8v8h-8zM1880 616h8v8h-8z"/>
<path fill="#003cfc" d="M1872 616h8v8h-8zM1840 624h16v16h-16zM1856 624h16v16h-16zM1808 640h16v16h-16zM1824 640h16v16h-16zM1792 656h16v16h-16zM1760 672h16v16h-16zM1776 672h16v16h-16zM1744 688h16v16h-16z"/>
<path fill="#123cfc" d="M1888 608h8v8h-8z"/>
<path fill="#183cfc" d="M1896 608h8v8h-8z"/>
<path fill="#1236fc" d="M1888 616h8v8h-8z"/>
<path fill="#1836fc" d="M1896 616h8v8h-8z"/>
<path fill="#2436fc" d="M1904 608h8v8h-8zM1904 616h8v8h-8z"/>
<path fill="#2a36fc" d="M1912 608h8v8h-8z"/>
<path fill="#2a30fc" d="M1912 616h8v8h-8zM1912 624h8v8h-8z"/>
<path fill="#3630fc" d="M1920 608h8v8h-8z"/>
<path fill="#3c30fc" d="M1928 608h8v8h-8z"/>
<path fill="#3030fc" d="M1920 616h8v8h-8z"/>
<path fill="#3c2afc" d="M1928 616h8v8h-8z"/>
<path fill="#4e2afc" d="M1944 608h8v8h-8z"/>
<path fill="#422afc" d="M1936 616h8v8h-8zM1936 624h8v8h-8z"/>
<path fill="#482afc" d="M1944 616h8v8h-8z"/>
<path fill="#542afc" d="M1952 608h8v8h-8z"/>
<path fill="#6024fc" d="M1960 608h8v8h-8zM1968 616h8v8h-8z"/>
<path fill="#5424fc" d="M1952 616h8v8h-8z"/>
<path fill="#5a24fc" d="M1960 616h8v8h-8z"/>
<path fill="#6624fc" d="M1968 608h8v8h-8z"/>
<path fill="#6c24fc" d="M1976 608h8v8h-8z"/>
<path fill="#6c1efc" d="M1976 616h8v8h-8z"/>
<path fill="#781efc" d="M1984 608h8v8h-8z"/>
<path fill="#7e1efc" d="M1992 608h8v8h-8z"/>
<path fill="#721efc" d="M1984 616h8v8h-8z"/>
<path fill="#7818fc" d="M1992 616h8v8h-8z"/>
<path fill="#8418fc" d="M2000 608h8v8h-8z"/>
<path fill="#9018fc" d="M2008 608h8v8h-8z"/>
<path fill="#7e18fc" d="M2000 616h8v8h-8z"/>
<path fill="#8a12fc" d="M2008 616h8v8h-8zM2016 624h8v8h-8z"/>
<path fill="#9618fc" d="M2016 608h8v8h-8z"/>
<path fill="#9c12fc" d="M2024 608h8v8h-8z"/>
<path fill="#9012fc" d="M2016 616h8v8h-8z"/>
<path fill="#9612fc" d="M2024 616h8v8h-8z"/>
<path fill="#ae0cfc" d="M2040 608h8v8h-8z"/>
<path fill="#a20cfc" d="M2032 616h8v8h-8z"/>
<path fill="#a80cfc" d="M2040 616h8v8h-8z"/>
<path fill="#b40cfc" d="M2048 608h8v8h-8z"/>
<path fill="#ba06fc" d="M2056 608h8v8h-8z"/>
<path fill="#ae06fc" d="M2048 616h8v8h-8z"/>
<path fill="#b406fc" d="M2056 616h8v8h-8z"/>
<path fill="#c606fc" d="M2064 608h8v8h-8z"/>
<path fill="#cc00fc" d="M2072 608h8v8h-8zM2080 616h8v8h-8zM2088 632h8v8h-8zM2096 640h8v8h-8zM2104 648h8v8h-8zM2112 656h8v8h-8zM2120 664h8v8h-8zM2128 672h8v8h-8zM2128 680h8v8h-8zM2136 688h8v8h-8zM2144 696h8v8h-8zM2152 704h8v8h-8zM2160 712h8v8h-8zM2168 720h8v8h-8zM2168 728h8v8h-8zM2176 736h8v8h-8zM2184 744h8v8h-8zM2192 752h8v8h-8zM2200 760h8v8h-8zM2200 768h8v8h-8zM2208 768h8v8h-8zM2208 776h8v8h-8zM2216 784h8v8h-8z"/>
<path fill="#c000fc" d="M2064 616h8v8h-8zM2072 624h8v8h-8zM2080 632h8v8h-8zM2088 648h8v8h-8zM2096 656h8v8h-8zM2104 664h8v8h-8zM2112 672h8v8h-8zM2120 688h8v8h-8zM2128 696h8v8h-8zM2136 704h8v8h-8zM2144 712h8v8h-8zM2144 720h8v8h-8zM2152 728h8v8h-8zM2160 736h8v8h-8zM2168 744h8v8h-8zM2176 752h8v8h-8zM2176 760h8v8h-8zM2184 768h8v8h-8zM2192 776h8v8h-8zM2200 784h8v8h-8zM2200 792h8v8h-8zM2208 792h8v8h-8zM2208 800h8v8h-8z"/>
<path fill="#c600fc" d="M2072 616h8v8h-8zM2080 624h8v8h-8zM2088 640h8v8h-8zM2096 648h8v8h-8zM2104 656h8v8h-8zM2112 664h8v8h-8zM2120 672h8v8h-8zM2120 680h8v8h-8zM2128 688h8v8h-8zM2136 696h8v8h-8zM2144 704h8v8h-8zM2152 712h8v8h-8zM2152 720h8v8h-8zM2160 720h8v8h-8zM2160 728h8v8h-8zM2168 736h8v8h-8zM2176 744h8v8h-8zM2184 752h8v8h-8zM2184 760h8v8h-8zM2192 760h8v8h-8zM2192 768h8v8h-8zM2200 776h8v8h-8zM2208 784h8v8h-8zM2216 792h8v8h-8z"/>
<path fill="#d200fc" d="M2080 608h8v8h-8zM2088 624h8v8h-8zM2096 632h8v8h-8zM2104 640h8v8h-8zM2112 648h8v8h-8zM2120 656h8v8h-8zM2128 664h8v8h-8zM2136 680h8v8h-8zM2144 688h8v8h-8zM2152 696h8v8h-8zM2160 704h8v8h-8zM2168 712h8v8h-8zM2176 720h8v8h-8zM2176 728h8v8h-8zM2184 736h8v8h-8zM2192 744h8v8h-8zM2200 752h8v8h-8zM2208 760h8v8h-8zM2216 768h8v8h-8zM2216 776h8v8h-8zM2224 776h8v8h-8zM2224 784h8v8h-8z"/>
<path fill="#d800fc" d="M2088 616h8v8h-8zM2096 624h8v8h-8zM2104 632h8v8h-8zM2112 640h8v8h-8zM2120 648h8v8h-8zM2128 656h8v8h-8zM2136 672h8v8h-8zM2144 680h8v8h-8zM2152 688h8v8h-8zM2160 696h8v8h-8zM2168 704h8v8h-8zM2176 712h8v8h-8zM2184 720h8v8h-8zM2184 728h8v8h-8zM2192 728h8v8h-8zM2192 736h8v8h-8zM2200 744h8v8h-8zM2208 752h8v8h-8zM2216 760h8v8h-8zM2224 768h8v8h-8zM2232 776h8v8h-8z"/>
<path fill="#f000fc" d="M2112 616h8v8h-8zM2120 624h8v8h-8zM2128 632h8v8h-8zM2136 640h8v8h-8zM2144 648h8v8h-8zM2152 656h8v8h-8zM2160 664h8v8h-8zM2168 672h8v8h-8zM2176 680h8v8h-8zM2184 688h8v8h-8zM2192 696h8v8h-8zM2200 704h8v8h-8zM2208 712h8v8h-8zM2216 720h8v8h-8zM2224 728h8v8h-8zM2232 736h8v8h-8zM2240 744h8v8h-8zM2248 752h8v8h-8z"/>
<path fill="#0036fc" d="M1872 624h16v16h-16zM1840 640h16v16h-16zM1856 640h16v16h-16zM1808 656h16v16h-16zM1824 656h16v16h-16zM1792 672h16v16h-16zM1760 688h16v16h-16zM1776 688h16v16h-16z"/>
<path fill="#0c36fc" d="M1888 624h8v8h-8z"/>
<path fill="#1830fc" d="M1896 624h8v8h-8zM1896 632h8v8h-8z"/>
<path fill="#0c30fc" d="M1888 632h8v8h-8zM1888 640h8v8h-8z"/>
<path fill="#1e30fc" d="M1904 624h8v8h-8z"/>
<path fill="#1e2afc" d="M1904 632h8v8h-8zM1904 640h8v8h-8z"/>
<path fill="#242afc" d="M1912 632h8v8h-8zM1912 640h8v8h-8z"/>
<path fill="#302afc" d="M1920 624h8v8h-8zM1920 632h8v8h-8z"/>
<path fill="#362afc" d="M1928 624h8v8h-8z"/>
<path fill="#3624fc" d="M1928 632h8v8h-8z"/>
<path fill="#4824fc" d="M1944 624h8v8h-8z"/>
<path fill="#3c24fc" d="M1936 632h8v8h-8zM1936 640h8v8h-8z"/>
<path fill="#4224fc" d="M1944 632h8v8h-8z"/>
<path fill="#4e24fc" d="M1952 624h8v8h-8z"/>
<path fill="#541efc" d="M1960 624h8v8h-8zM1960 632h8v8h-8z"/>
<path fill="#4e1efc" d="M1952 632h8v8h-8z"/>
<path fill="#601efc" d="M1968 624h8v8h-8z"/>
<path fill="#661efc" d="M1976 624h8v8h-8z"/>
<path fill="#5a1efc" d="M1968 632h8v8h-8z"/>
<path fill="#6018fc" d="M1976 632h8v8h-8zM1976 640h8v8h-8z"/>
<path fill="#6c18fc" d="M1984 624h8v8h-8zM1984 632h8v8h-8z"/>
<path fill="#7218fc" d="M1992 624h8v8h-8z"/>
<path fill="#7212fc" d="M1992 632h8v8h-8z"/>
<path fill="#7e12fc" d="M2000 624h8v8h-8z"/>
<path fill="#8412fc" d="M2008 624h8v8h-8z"/>
<path fill="#7812fc" d="M2000 632h8v8h-8z"/>
<path fill="#7e0cfc" d="M2008 632h8v8h-8zM2008 640h8v8h-8z"/>
<path fill="#960cfc" d="M2024 624h8v8h-8z"/>
<path fill="#8a0cfc" d="M2016 632h8v8h-8z"/>
<path fill="#900cfc" d="M2024 632h8v8h-8z"/>
<path fill="#9c0cfc" d="M2032 624h8v8h-8z"/>
<path fill="#a206fc" d="M2040 624h8v8h-8z"/>
<path fill="#9606fc" d="M2032 632h8v8h-8z"/>
<path fill="#9c06fc" d="M2040 632h8v8h-8z"/>
<path fill="#a806fc" d="M2048 624h8v8h-8z"/>
<path fill="#b400fc" d="M2056 624h8v8h-8zM2064 632h8v8h-8zM2072 640h8v8h-8zM2080 648h8v8h-8zM2080 656h8v8h-8zM2088 664h8v8h-8zM2096 672h8v8h-8zM2104 680h8v8h-8zM2104 688h8v8h-8zM2112 696h8v8h-8zM2120 704h8v8h-8zM2128 712h8v8h-8zM2128 720h8v8h-8zM2136 728h8v8h-8zM2144 736h8v8h-8zM2152 744h8v8h-8zM2152 752h8v8h-8zM2160 760h8v8h-8zM2168 768h8v8h-8zM2168 776h8v8h-8zM2176 776h8v8h-8zM2176 784h8v8h-8zM2184 792h8v8h-8zM2192 800h8v8h-8zM2192 808h8v8h-8zM2200 808h8v8h-8z"/>
<path fill="#a200fc" d="M2048 632h8v8h-8zM2048 640h8v8h-8zM2056 648h8v8h-8zM2064 656h8v8h-8zM2064 664h8v8h-8zM2072 672h8v8h-8zM2080 680h8v8h-8zM2080 688h8v8h-8zM2088 696h8v8h-8zM2096 704h8v8h-8zM2104 712h8v8h-8zM2104 720h8v8h-8zM2112 728h8v8h-8zM2120 736h8v8h-8zM2120 744h8v8h-8zM2128 752h8v8h-8zM2136 760h8v8h-8zM2136 768h8v8h-8zM2144 776h8v8h-8zM2152 784h8v8h-8zM2152 792h8v8h-8zM2160 792h8v8h-8zM2160 800h8v8h-8zM2168 808h8v8h-8zM2168 816h8v8h-8zM2176 816h8v8h-8zM2176 824h8v8h-8z"/>
<path fill="#ae00fc" d="M2056 632h8v8h-8zM2064 640h8v8h-8zM2072 648h8v8h-8zM2080 664h8v8h-8zM2088 672h8v8h-8zM2096 680h8v8h-8zM2096 688h8v8h-8zM2104 696h8v8h-8zM2112 704h8v8h-8zM2120 712h8v8h-8zM2120 720h8v8h-8zM2128 728h8v8h-8zM2136 736h8v8h-8zM2136 744h8v8h-8zM2144 744h8v8h-8zM2144 752h8v8h-8zM2152 760h8v8h-8zM2160 768h8v8h-8zM2160 776h8v8h-8zM2168 784h8v8h-8zM2176 792h8v8h-8zM2176 800h8v8h-8zM2184 800h8v8h-8zM2184 808h8v8h-8zM2192 816h8v8h-8z"/>
<path fill="#ba00fc" d="M2064 624h8v8h-8zM2072 632h8v8h-8zM2080 640h8v8h-8zM2088 656h8v8h-8zM2096 664h8v8h-8zM2104 672h8v8h-8zM2112 680h8v8h-8zM2112 688h8v8h-8zM2120 696h8v8h-8zM2128 704h8v8h-8zM2136 712h8v8h-8zM2136 720h8v8h-8zM2144 728h8v8h-8zM2152 736h8v8h-8zM2160 744h8v8h-8zM2160 752h8v8h-8zM2168 752h8v8h-8zM2168 760h8v8h-8zM2176 768h8v8h-8zM2184 776h8v8h-8zM2184 784h8v8h-8zM2192 784h8v8h-8zM2192 792h8v8h-8zM2200 800h8v8h-8z"/>
<path fill="#0030fc" d="M1872 640h16v16h-16zM1840 656h16v16h-16zM1856 656h16v16h-16zM1808 672h16v16h-16zM1824 672h16v16h-16zM1792 688h16v16h-16zM1808 688h16v16h-16zM1760 704h16v16h-16zM1776 704h16v16h-16z"/>
<path fill="#122afc" d="M1896 640h8v8h-8zM1896 648h8v8h-8z"/>
<path fill="#0c2afc" d="M1888 648h8v8h-8z"/>
<path fill="#1824fc" d="M1904 648h8v8h-8zM1904 656h8v8h-8z"/>
<path fill="#2424fc" d="M1912 648h8v8h-8z"/>
<path fill="#2a24fc" d="M1920 640h8v8h-8zM1920 648h8v8h-8z"/>
<path fill="#3024fc" d="M1928 640h8v8h-8z"/>
<path fill="#301efc" d="M1928 648h8v8h-8zM1928 656h8v8h-8z"/>
<path fill="#421efc" d="M1944 640h8v8h-8z"/>
<path fill="#361efc" d="M1936 648h8v8h-8zM1936 656h8v8h-8z"/>
<path fill="#3c1efc" d="M1944 648h8v8h-8z"/>
<path fill="#481efc" d="M1952 640h8v8h-8z"/>
<path fill="#4e18fc" d="M1960 640h8v8h-8zM1960 648h8v8h-8z"/>
<path fill="#4818fc" d="M1952 648h8v8h-8z"/>
<path fill="#5a18fc" d="M1968 640h8v8h-8z"/>
<path fill="#5418fc" d="M1968 648h8v8h-8z"/>
<path fill="#5a12fc" d="M1976 648h8v8h-8zM1976 656h8v8h-8z"/>
<path fill="#6612fc" d="M1984 640h8v8h-8z"/>
<path fill="#6c12fc" d="M1992 640h8v8h-8z"/>
<path fill="#6012fc" d="M1984 648h8v8h-8z"/>
<path fill="#6c0cfc" d="M1992 648h8v8h-8zM2000 656h8v8h-8z"/>
<path fill="#720cfc" d="M2000 640h8v8h-8zM2000 648h8v8h-8z"/>
<path fill="#780cfc" d="M2008 648h8v8h-8z"/>
<path fill="#840cfc" d="M2016 640h8v8h-8z"/>
<path fill="#8a06fc" d="M2024 640h8v8h-8z"/>
<path fill="#7e06fc" d="M2016 648h8v8h-8z"/>
<path fill="#8406fc" d="M2024 648h8v8h-8z"/>
<path fill="#9006fc" d="M2032 640h8v8h-8z"/>
<path fill="#9600fc" d="M2040 640h8v8h-8zM2040 648h8v8h-8zM2048 656h8v8h-8zM2056 664h8v8h-8zM2056 672h8v8h-8zM2064 680h8v8h-8zM2072 688h8v8h-8zM2072 696h8v8h-8zM2080 704h8v8h-8zM2080 712h8v8h-8zM2088 720h8v8h-8zM2096 728h8v8h-8zM2096 736h8v8h-8zM2104 744h8v8h-8zM2112 752h8v8h-8zM2112 760h8v8h-8zM2120 768h8v8h-8zM2128 776h8v8h-8zM2128 784h8v8h-8zM2136 792h8v8h-8zM2136 800h8v8h-8zM2144 800h8v8h-8zM2144 808h8v8h-8zM2152 816h8v8h-8zM2152 824h8v8h-8zM2160 824h8v8h-8zM2160 832h8v8h-8zM2168 840h8v8h-8z"/>
<path fill="#8a00fc" d="M2032 648h8v8h-8zM2032 656h8v8h-8zM2040 664h8v8h-8zM2040 672h8v8h-8zM2048 680h8v8h-8zM2056 688h8v8h-8zM2056 696h8v8h-8zM2064 704h8v8h-8zM2064 712h8v8h-8zM2072 720h8v8h-8zM2080 728h8v8h-8zM2080 736h8v8h-8zM2088 744h8v8h-8zM2088 752h8v8h-8zM2096 752h8v8h-8zM2096 760h8v8h-8zM2104 768h8v8h-8zM2104 776h8v8h-8zM2112 784h8v8h-8zM2112 792h8v8h-8zM2120 792h8v8h-8zM2120 800h8v8h-8zM2128 808h8v8h-8zM2128 816h8v8h-8zM2136 824h8v8h-8zM2136 832h8v8h-8zM2144 832h8v8h-8zM2144 840h8v8h-8zM2152 848h8v8h-8zM2152 856h8v8h-8z"/>
<path fill="#a800fc" d="M2056 640h8v8h-8zM2064 648h8v8h-8zM2072 656h8v8h-8zM2072 664h8v8h-8zM2080 672h8v8h-8zM2088 680h8v8h-8zM2088 688h8v8h-8zM2096 696h8v8h-8zM2104 704h8v8h-8zM2112 712h8v8h-8zM2112 720h8v8h-8zM2120 728h8v8h-8zM2128 736h8v8h-8zM2128 744h8v8h-8zM2136 752h8v8h-8zM2144 760h8v8h-8zM2144 768h8v8h-8zM2152 768h8v8h-8zM2152 776h8v8h-8zM2160 784h8v8h-8zM2168 792h8v8h-8zM2168 800h8v8h-8zM2176 808h8v8h-8zM2184 816h8v8h-8zM2184 824h8v8h-8z"/>
<path fill="#9c00fc" d="M2048 648h8v8h-8zM2056 656h8v8h-8zM2064 672h8v8h-8zM2072 680h8v8h-8zM2080 696h8v8h-8zM2088 704h8v8h-8zM2088 712h8v8h-8zM2096 712h8v8h-8zM2096 720h8v8h-8zM2104 728h8v8h-8zM2104 736h8v8h-8zM2112 736h8v8h-8zM2112 744h8v8h-8zM2120 752h8v8h-8zM2120 760h8v8h-8zM2128 760h8v8h-8zM2128 768h8v8h-8zM2136 776h8v8h-8zM2136 784h8v8h-8zM2144 784h8v8h-8zM2144 792h8v8h-8zM2152 800h8v8h-8zM2152 808h8v8h-8zM2160 808h8v8h-8zM2160 816h8v8h-8zM2168 824h8v8h-8zM2168 832h8v8h-8zM2176 832h8v8h-8z"/>
<path fill="#002afc" d="M1872 656h16v16h-16zM1840 672h16v16h-16zM1856 672h16v16h-16zM1824 688h16v16h-16zM1792 704h16v16h-16zM1808 704h16v16h-16zM1776 720h16v16h-16z"/>
<path fill="#062afc" d="M1888 656h8v8h-8z"/>
<path fill="#1224fc" d="M1896 656h8v8h-8z"/>
<path fill="#0624fc" d="M1888 664h8v8h-8zM1888 672h8v8h-8z"/>
<path fill="#0c24fc" d="M1896 664h8v8h-8z"/>
<path fill="#1e24fc" d="M1912 656h8v8h-8z"/>
<path fill="#181efc" d="M1904 664h8v8h-8z"/>
<path fill="#1e1efc" d="M1912 664h8v8h-8zM1912 672h8v8h-8z"/>
<path fill="#241efc" d="M1920 656h8v8h-8zM1920 664h8v8h-8z"/>
<path fill="#2a18fc" d="M1928 664h8v8h-8zM1928 672h8v8h-8zM1928 680h8v8h-8z"/>
<path fill="#3c18fc" d="M1944 656h8v8h-8zM1944 664h8v8h-8z"/>
<path fill="#3618fc" d="M1936 664h8v8h-8z"/>
<path fill="#4218fc" d="M1952 656h8v8h-8z"/>
<path fill="#4812fc" d="M1960 656h8v8h-8zM1960 664h8v8h-8zM1960 672h8v8h-8z"/>
<path fill="#4212fc" d="M1952 664h8v8h-8z"/>
<path fill="#5412fc" d="M1968 656h8v8h-8z"/>
<path fill="#4e12fc" d="M1968 664h8v8h-8z"/>
<path fill="#540cfc" d="M1976 664h8v8h-8zM1976 672h8v8h-8z"/>
<path fill="#600cfc" d="M1984 656h8v8h-8z"/>
<path fill="#660cfc" d="M1992 656h8v8h-8z"/>
<path fill="#5a0cfc" d="M1984 664h8v8h-8z"/>
<path fill="#6606fc" d="M1992 664h8v8h-8zM2000 672h8v8h-8z"/>
<path fill="#7206fc" d="M2008 656h8v8h-8zM2008 664h8v8h-8z"/>
<path fill="#6c06fc" d="M2000 664h8v8h-8z"/>
<path fill="#7806fc" d="M2016 656h8v8h-8z"/>
<path fill="#8400fc" d="M2024 656h8v8h-8zM2032 664h8v8h-8zM2040 680h8v8h-8zM2048 688h8v8h-8zM2048 696h8v8h-8zM2056 704h8v8h-8zM2056 712h8v8h-8zM2064 720h8v8h-8zM2072 728h8v8h-8zM2072 736h8v8h-8zM2080 744h8v8h-8zM2080 752h8v8h-8zM2088 760h8v8h-8zM2088 768h8v8h-8zM2096 768h8v8h-8zM2096 776h8v8h-8zM2104 784h8v8h-8zM2104 792h8v8h-8zM2112 800h8v8h-8zM2112 808h8v8h-8zM2120 808h8v8h-8zM2120 816h8v8h-8zM2120 824h8v8h-8zM2128 824h8v8h-8zM2128 832h8v8h-8zM2136 840h8v8h-8zM2136 848h8v8h-8zM2144 848h8v8h-8zM2144 856h8v8h-8zM2144 864h8v8h-8z"/>
<path fill="#7800fc" d="M2016 664h8v8h-8zM2024 672h8v8h-8zM2024 680h8v8h-8zM2032 688h8v8h-8zM2032 696h8v8h-8zM2040 704h8v8h-8zM2040 712h8v8h-8zM2048 720h8v8h-8zM2048 728h8v8h-8zM2056 736h8v8h-8zM2064 744h8v8h-8zM2064 752h8v8h-8zM2072 760h8v8h-8zM2072 768h8v8h-8zM2080 776h8v8h-8zM2080 784h8v8h-8zM2088 792h8v8h-8zM2088 800h8v8h-8zM2096 808h8v8h-8zM2096 816h8v8h-8zM2104 816h8v8h-8zM2104 824h8v8h-8zM2104 832h8v8h-8zM2112 832h8v8h-8zM2112 840h8v8h-8zM2112 848h8v8h-8zM2120 848h8v8h-8zM2120 856h8v8h-8zM2120 864h8v8h-8zM2128 864h8v8h-8zM2128 872h8v8h-8z"/>
<path fill="#7e00fc" d="M2024 664h8v8h-8zM2032 672h8v8h-8zM2032 680h8v8h-8zM2040 688h8v8h-8zM2040 696h8v8h-8zM2048 704h8v8h-8zM2048 712h8v8h-8zM2056 720h8v8h-8zM2056 728h8v8h-8zM2064 728h8v8h-8zM2064 736h8v8h-8zM2072 744h8v8h-8zM2072 752h8v8h-8zM2080 760h8v8h-8zM2080 768h8v8h-8zM2088 776h8v8h-8zM2088 784h8v8h-8zM2096 784h8v8h-8zM2096 792h8v8h-8zM2096 800h8v8h-8zM2104 800h8v8h-8zM2104 808h8v8h-8zM2112 816h8v8h-8zM2112 824h8v8h-8zM2120 832h8v8h-8zM2120 840h8v8h-8zM2128 840h8v8h-8zM2128 848h8v8h-8zM2128 856h8v8h-8zM2136 856h8v8h-8zM2136 864h8v8h-8zM2136 872h8v8h-8z"/>
<path fill="#9000fc" d="M2040 656h8v8h-8zM2048 664h8v8h-8zM2048 672h8v8h-8zM2056 680h8v8h-8zM2064 688h8v8h-8zM2064 696h8v8h-8zM2072 704h8v8h-8zM2072 712h8v8h-8zM2080 720h8v8h-8zM2088 728h8v8h-8zM2088 736h8v8h-8zM2096 744h8v8h-8zM2104 752h8v8h-8zM2104 760h8v8h-8zM2112 768h8v8h-8zM2112 776h8v8h-8zM2120 776h8v8h-8zM2120 784h8v8h-8zM2128 792h8v8h-8zM2128 800h8v8h-8zM2136 808h8v8h-8zM2136 816h8v8h-8zM2144 816h8v8h-8zM2144 824h8v8h-8zM2152 832h8v8h-8zM2152 840h8v8h-8zM2160 840h8v8h-8zM2160 848h8v8h-8z"/>
<path fill="#0024fc" d="M1872 672h16v16h-16zM1840 688h16v16h-16zM1856 688h16v16h-16zM1824 704h16v16h-16zM1840 704h16v16h-16zM1792 720h16v16h-16zM1808 720h16v16h-16zM1776 736h16v16h-16zM1792 736h16v16h-16z"/>
<path fill="#0c1efc" d="M1896 672h8v8h-8zM1896 680h8v8h-8zM1896 688h8v8h-8z"/>
<path fill="#061efc" d="M1888 680h8v8h-8z"/>
<path fill="#121efc" d="M1904 672h8v8h-8zM1904 680h8v8h-8z"/>
<path fill="#1818fc" d="M1912 680h8v8h-8zM1912 688h8v8h-8z"/>
<path fill="#2418fc" d="M1920 672h8v8h-8zM1920 680h8v8h-8z"/>
<path fill="#3018fc" d="M1936 672h8v8h-8z"/>
<path fill="#3612fc" d="M1944 672h8v8h-8zM1944 680h8v8h-8zM1944 688h8v8h-8z"/>
<path fill="#3012fc" d="M1936 680h8v8h-8z"/>
<path fill="#3c12fc" d="M1952 672h8v8h-8zM1952 680h8v8h-8z"/>
<path fill="#420cfc" d="M1960 680h8v8h-8zM1960 688h8v8h-8z"/>
<path fill="#4e0cfc" d="M1968 672h8v8h-8z"/>
<path fill="#480cfc" d="M1968 680h8v8h-8z"/>
<path fill="#4e06fc" d="M1976 680h8v8h-8zM1976 688h8v8h-8z"/>
<path fill="#5a06fc" d="M1984 672h8v8h-8zM1992 680h8v8h-8z"/>
<path fill="#6006fc" d="M1992 672h8v8h-8z"/>
<path fill="#5406fc" d="M1984 680h8v8h-8zM1984 688h8v8h-8z"/>
<path fill="#6c00fc" d="M2008 672h8v8h-8zM2008 680h8v8h-8zM2016 688h8v8h-8zM2016 696h8v8h-8zM2024 704h8v8h-8zM2024 712h8v8h-8zM2032 720h8v8h-8zM2032 728h8v8h-8zM2040 736h8v8h-8zM2040 744h8v8h-8zM2048 752h8v8h-8zM2048 760h8v8h-8zM2056 768h8v8h-8zM2056 776h8v8h-8zM2064 784h8v8h-8zM2064 792h8v8h-8zM2072 800h8v8h-8zM2072 808h8v8h-8zM2080 808h8v8h-8zM2080 816h8v8h-8zM2080 824h8v8h-8zM2088 824h8v8h-8zM2088 832h8v8h-8zM2088 840h8v8h-8zM2096 840h8v8h-8zM2096 848h8v8h-8zM2096 856h8v8h-8zM2104 856h8v8h-8zM2104 864h8v8h-8zM2104 872h8v8h-8zM2112 872h8v8h-8zM2112 880h8v8h-8zM2112 888h8v8h-8zM2120 888h8v8h-8z"/>
<path fill="#6600fc" d="M2000 680h8v8h-8zM2008 688h8v8h-8zM2008 696h8v8h-8zM2016 704h8v8h-8zM2016 712h8v8h-8zM2024 720h8v8h-8zM2024 728h8v8h-8zM2032 736h8v8h-8zM2032 744h8v8h-8zM2040 752h8v8h-8zM2040 760h8v8h-8zM2048 768h8v8h-8zM2048 776h8v8h-8zM2056 784h8v8h-8zM2056 792h8v8h-8zM2064 800h8v8h-8zM2064 808h8v8h-8zM2064 816h8v8h-8zM2072 816h8v8h-8zM2072 824h8v8h-8zM2072 832h8v8h-8zM2080 832h8v8h-8zM2080 840h8v8h-8zM2080 848h8v8h-8zM2088 848h8v8h-8zM2088 856h8v8h-8zM2088 864h8v8h-8zM2096 864h8v8h-8zM2096 872h8v8h-8zM2096 880h8v8h-8zM2104 880h8v8h-8zM2104 888h8v8h-8zM2112 896h8v8h-8z"/>
<path fill="#7200fc" d="M2016 672h8v8h-8zM2016 680h8v8h-8zM2024 688h8v8h-8zM2024 696h8v8h-8zM2032 704h8v8h-8zM2032 712h8v8h-8zM2040 720h8v8h-8zM2040 728h8v8h-8zM2048 736h8v8h-8zM2048 744h8v8h-8zM2056 744h8v8h-8zM2056 752h8v8h-8zM2056 760h8v8h-8zM2064 760h8v8h-8zM2064 768h8v8h-8zM2064 776h8v8h-8zM2072 776h8v8h-8zM2072 784h8v8h-8zM2072 792h8v8h-8zM2080 792h8v8h-8zM2080 800h8v8h-8zM2088 808h8v8h-8zM2088 816h8v8h-8zM2096 824h8v8h-8zM2096 832h8v8h-8zM2104 840h8v8h-8zM2104 848h8v8h-8zM2112 856h8v8h-8zM2112 864h8v8h-8zM2120 872h8v8h-8zM2120 880h8v8h-8zM2128 880h8v8h-8z"/>
<path fill="#001efc" d="M1872 688h16v16h-16zM1888 688h8v8h-8zM1856 704h16v16h-16zM1824 720h16v16h-16zM1840 720h16v16h-16zM1808 736h16v16h-16zM1824 736h16v16h-16zM1792 752h16v16h-16z"/>
<path fill="#0018fc" d="M1888 696h8v8h-8zM1872 704h16v16h-16zM1888 704h16v16h-16zM1856 720h16v16h-16zM1872 720h16v16h-16zM1840 736h16v16h-16zM1808 752h16v16h-16zM1824 752h16v16h-16zM1808 768h16v16h-16z"/>
<path fill="#0618fc" d="M1896 696h8v8h-8z"/>
<path fill="#1218fc" d="M1904 688h8v8h-8zM1904 696h8v8h-8z"/>
<path fill="#1812fc" d="M1912 696h8v8h-8zM1912 704h8v8h-8z"/>
<path fill="#1e18fc" d="M1920 688h8v8h-8z"/>
<path fill="#2412fc" d="M1928 688h8v8h-8zM1928 696h8v8h-8z"/>
<path fill="#1e12fc" d="M1920 696h8v8h-8zM1920 704h8v8h-8z"/>
<path fill="#2a12fc" d="M1936 688h8v8h-8z"/>
<path fill="#2a0cfc" d="M1936 696h8v8h-8zM1936 704h8v8h-8zM1936 712h8v8h-8z"/>
<path fill="#300cfc" d="M1944 696h8v8h-8zM1944 704h8v8h-8z"/>
<path fill="#3c0cfc" d="M1952 688h8v8h-8z"/>
<path fill="#360cfc" d="M1952 696h8v8h-8z"/>
<path fill="#3c06fc" d="M1960 696h8v8h-8zM1960 704h8v8h-8zM1960 712h8v8h-8z"/>
<path fill="#4806fc" d="M1968 688h8v8h-8zM1976 696h8v8h-8z"/>
<path fill="#4206fc" d="M1968 696h8v8h-8zM1968 704h8v8h-8z"/>
<path fill="#5a00fc" d="M1992 688h8v8h-8zM1992 696h8v8h-8zM2000 704h8v8h-8zM2000 712h8v8h-8zM2008 720h8v8h-8zM2008 728h8v8h-8zM2016 736h8v8h-8zM2016 744h8v8h-8zM2016 752h8v8h-8zM2024 752h8v8h-8zM2024 760h8v8h-8zM2024 768h8v8h-8zM2032 776h8v8h-8zM2032 784h8v8h-8zM2040 792h8v8h-8zM2040 800h8v8h-8zM2040 808h8v8h-8zM2048 808h8v8h-8zM2048 816h8v8h-8zM2048 824h8v8h-8zM2056 824h8v8h-8zM2056 832h8v8h-8zM2056 840h8v8h-8zM2064 840h8v8h-8zM2064 848h8v8h-8zM2064 856h8v8h-8zM2072 864h8v8h-8zM2072 872h8v8h-8zM2080 880h8v8h-8zM2080 888h8v8h-8zM2080 896h16v16h-16z"/>
<path fill="#5400fc" d="M1984 696h8v8h-8zM1992 704h8v8h-8zM1992 712h8v8h-8zM2000 720h8v8h-8zM2000 728h8v8h-8zM2008 736h8v8h-8zM2008 744h8v8h-8zM2008 752h8v8h-8zM2016 760h8v8h-8zM2016 768h8v8h-8zM2024 776h8v8h-8zM2024 784h8v8h-8zM2024 792h8v8h-8zM2032 792h8v8h-8zM2032 800h8v8h-8zM2032 808h8v8h-8zM2040 816h8v8h-8zM2040 824h8v8h-8zM2040 832h8v8h-8zM2048 832h8v8h-8zM2048 840h8v8h-8zM2048 848h8v8h-8zM2056 848h8v8h-8zM2056 856h8v8h-8zM2056 864h8v8h-8zM2064 864h8v8h-8zM2064 872h8v8h-8zM2064 880h16v16h-16zM2064 896h16v16h-16zM2080 912h16v16h-16zM2080 928h16v16h-16z"/>
<path fill="#6000fc" d="M2000 688h8v8h-8zM2000 696h8v8h-8zM2008 704h8v8h-8zM2008 712h8v8h-8zM2016 720h8v8h-8zM2016 728h8v8h-8zM2024 736h8v8h-8zM2024 744h8v8h-8zM2032 752h8v8h-8zM2032 760h8v8h-8zM2032 768h8v8h-8zM2040 768h8v8h-8zM2040 776h8v8h-8zM2040 784h8v8h-8zM2048 784h8v8h-8zM2048 792h8v8h-8zM2048 800h8v8h-8zM2056 800h8v8h-8zM2056 808h8v8h-8zM2056 816h8v8h-8zM2064 824h8v8h-8zM2064 832h8v8h-8zM2072 840h8v8h-8zM2072 848h8v8h-8zM2072 856h8v8h-8zM2080 856h8v8h-8zM2080 864h8v8h-8zM2080 872h8v8h-8zM2088 872h8v8h-8zM2088 880h8v8h-8zM2088 888h8v8h-8zM2096 888h8v8h-8zM2096 896h16v16h-16zM2096 912h16v16h-16z"/>
<path fill="#0c12fc" d="M1904 704h8v8h-8zM1904 712h8v8h-8zM1904 720h8v8h-8z"/>
<path fill="#1212fc" d="M1912 712h8v8h-8z"/>
<path fill="#240cfc" d="M1928 704h8v8h-8z"/>
<path fill="#180cfc" d="M1920 712h8v8h-8zM1920 720h8v8h-8zM1920 728h8v8h-8z"/>
<path fill="#1e0cfc" d="M1928 712h8v8h-8zM1928 720h8v8h-8z"/>
<path fill="#3006fc" d="M1944 712h8v8h-8zM1952 720h8v8h-8z"/>
<path fill="#3606fc" d="M1952 704h8v8h-8zM1952 712h8v8h-8z"/>
<path fill="#4800fc" d="M1976 704h8v8h-8zM1976 712h8v8h-8zM1984 720h8v8h-8zM1984 728h8v8h-8zM1984 736h8v8h-8zM1992 744h8v8h-8zM1992 752h8v8h-8zM2000 760h8v8h-8zM2000 768h8v8h-8zM2000 776h8v8h-8zM2008 784h8v8h-8zM2008 792h8v8h-8zM2008 800h8v8h-8zM2016 800h8v8h-8zM2016 808h8v8h-8zM2016 816h8v8h-8zM2024 824h8v8h-8zM2024 832h8v8h-8zM2024 840h8v8h-8zM2032 840h8v8h-8zM2032 848h8v8h-8zM2032 856h8v8h-8zM2032 864h16v16h-16zM2048 896h16v16h-16zM2048 912h16v16h-16zM2064 928h16v16h-16zM2064 944h16v16h-16z"/>
<path fill="#4200fc" d="M1968 712h8v8h-8zM1976 720h8v8h-8zM1976 728h8v8h-8zM1976 736h8v8h-8zM1984 744h8v8h-8zM1984 752h8v8h-8zM1984 760h8v8h-8zM1992 760h8v8h-8zM1992 768h8v8h-8zM1992 776h8v8h-8zM1992 784h8v8h-8zM2000 784h8v8h-8zM2000 792h8v8h-8zM2000 800h8v8h-8zM2008 808h8v8h-8zM2008 816h8v8h-8zM2008 824h8v8h-8zM2016 824h8v8h-8zM2016 832h8v8h-8zM2016 840h8v8h-8zM2016 848h8v8h-8zM2024 848h8v8h-8zM2024 856h8v8h-8zM2032 880h16v16h-16zM2032 896h16v16h-16zM2048 928h16v16h-16zM2048 944h16v16h-16z"/>
<path fill="#4e00fc" d="M1984 704h8v8h-8zM1984 712h8v8h-8zM1992 720h8v8h-8zM1992 728h8v8h-8zM1992 736h8v8h-8zM2000 736h8v8h-8zM2000 744h8v8h-8zM2000 752h8v8h-8zM2008 760h8v8h-8zM2008 768h8v8h-8zM2008 776h8v8h-8zM2016 776h8v8h-8zM2016 784h8v8h-8zM2016 792h8v8h-8zM2024 800h8v8h-8zM2024 808h8v8h-8zM2024 816h8v8h-8zM2032 816h8v8h-8zM2032 824h8v8h-8zM2032 832h8v8h-8zM2040 840h8v8h-8zM2040 848h8v8h-8zM2040 856h8v8h-8zM2048 856h8v8h-8zM2048 864h8v8h-8zM2048 872h8v8h-8zM2056 872h8v8h-8zM2048 880h16v16h-16zM2064 912h16v16h-16z"/>
<path fill="#0012fc" d="M1888 720h16v16h-16zM1856 736h16v16h-16zM1872 736h16v16h-16zM1840 752h16v16h-16zM1856 752h16v16h-16zM1824 768h16v16h-16zM1840 768h16v16h-16zM1808 784h16v16h-16zM1824 784h16v16h-16z"/>
<path fill="#120cfc" d="M1912 720h8v8h-8zM1912 728h8v8h-8zM1912 736h8v8h-8z"/>
<path fill="#0c0cfc" d="M1904 728h8v8h-8z"/>
<path fill="#1e06fc" d="M1928 728h8v8h-8zM1928 736h8v8h-8z"/>
<path fill="#2406fc" d="M1936 720h8v8h-8zM1936 728h8v8h-8zM1936 736h8v8h-8z"/>
<path fill="#2a06fc" d="M1944 720h8v8h-8zM1944 728h8v8h-8z"/>
<path fill="#3600fc" d="M1960 720h8v8h-8zM1960 728h8v8h-8zM1960 736h8v8h-8zM1968 744h8v8h-8zM1968 752h8v8h-8zM1968 760h8v8h-8zM1976 768h8v8h-8zM1976 776h8v8h-8zM1976 784h8v8h-8zM1976 792h8v8h-8zM1984 792h8v8h-8zM1984 800h8v8h-8zM1984 808h8v8h-8zM1984 816h8v8h-8zM1992 816h8v8h-8zM1992 824h8v8h-8zM1992 832h8v8h-8zM1992 840h8v8h-8zM2000 840h8v8h-8zM2000 848h8v8h-8zM2000 856h8v8h-8zM2000 864h16v16h-16zM2016 896h16v16h-16zM2016 912h16v16h-16zM2016 928h16v16h-16zM2032 944h16v16h-16zM2032 960h16v16h-16z"/>
<path fill="#3000fc" d="M1952 728h8v8h-8zM1952 736h8v8h-8zM1960 744h8v8h-8zM1960 752h8v8h-8zM1960 760h8v8h-8zM1960 768h8v8h-8zM1968 768h8v8h-8zM1968 776h8v8h-8zM1968 784h8v8h-8zM1968 792h8v8h-8zM1976 800h8v8h-8zM1976 808h8v8h-8zM1976 816h8v8h-8zM1984 824h8v8h-8zM1984 832h8v8h-8zM1984 840h8v8h-8zM1984 848h16v16h-16zM2000 880h16v16h-16zM2000 896h16v16h-16zM2000 912h16v16h-16zM2016 944h16v16h-16zM2016 960h16v16h-16z"/>
<path fill="#3c00fc" d="M1968 720h8v8h-8zM1968 728h8v8h-8zM1968 736h8v8h-8zM1976 744h8v8h-8zM1976 752h8v8h-8zM1976 760h8v8h-8zM1984 768h8v8h-8zM1984 776h8v8h-8zM1984 784h8v8h-8zM1992 792h8v8h-8zM1992 800h8v8h-8zM1992 808h8v8h-8zM2000 808h8v8h-8zM2000 816h8v8h-8zM2000 824h8v8h-8zM2000 832h8v8h-8zM2008 832h8v8h-8zM2008 840h8v8h-8zM2008 848h8v8h-8zM2008 856h8v8h-8zM2016 856h8v8h-8zM2016 864h16v16h-16zM2016 880h16v16h-16zM2032 912h16v16h-16zM2032 928h16v16h-16zM2048 960h16v16h-16z"/>
<path fill="#000cfc" d="M1888 736h16v16h-16zM1872 752h16v16h-16zM1888 752h16v16h-16zM1856 768h16v16h-16zM1872 768h16v16h-16zM1840 784h16v16h-16zM1824 800h16v16h-16z"/>
<path fill="#060cfc" d="M1904 736h8v8h-8zM1904 744h8v8h-8z"/>
<path fill="#0c06fc" d="M1912 744h8v8h-8zM1912 752h8v8h-8zM1912 760h8v8h-8z"/>
<path fill="#1806fc" d="M1920 736h8v8h-8zM1928 744h8v8h-8z"/>
<path fill="#1206fc" d="M1920 744h8v8h-8zM1920 752h8v8h-8z"/>
<path fill="#2a00fc" d="M1944 736h8v8h-8zM1952 744h8v8h-8zM1952 752h8v8h-8zM1952 760h8v8h-8zM1952 768h8v8h-8zM1960 776h8v8h-8zM1960 784h8v8h-8zM1960 792h8v8h-8zM1960 800h8v8h-8zM1968 800h8v8h-8zM1968 808h8v8h-8zM1968 816h8v8h-8zM1968 824h8v8h-8zM1976 824h8v8h-8zM1976 832h8v8h-8zM1976 840h8v8h-8zM1984 864h16v16h-16zM1984 880h16v16h-16zM1984 896h16v16h-16zM2000 928h16v16h-16zM2000 944h16v16h-16z"/>
<path fill="#1e00fc" d="M1936 744h8v8h-8zM1936 752h8v8h-8zM1936 760h8v8h-8zM1936 768h8v8h-8zM1936 776h8v8h-8zM1944 776h8v8h-8zM1944 784h8v8h-8zM1944 792h8v8h-8zM1944 800h8v8h-8zM1944 808h8v8h-8zM1952 808h8v8h-8zM1952 816h8v8h-8zM1952 824h8v8h-8zM1952 832h8v8h-8zM1952 840h8v8h-8zM1960 840h8v8h-8zM1952 848h16v16h-16zM1968 896h16v16h-16zM1968 912h16v16h-16zM1984 944h16v16h-16zM1984 960h16v16h-16z"/>
<path fill="#2400fc" d="M1944 744h8v8h-8zM1944 752h8v8h-8zM1944 760h8v8h-8zM1944 768h8v8h-8zM1952 776h8v8h-8zM1952 784h8v8h-8zM1952 792h8v8h-8zM1952 800h8v8h-8zM1960 808h8v8h-8zM1960 816h8v8h-8zM1960 824h8v8h-8zM1960 832h8v8h-8zM1968 832h8v8h-8zM1968 840h8v8h-8zM1968 848h16v16h-16zM1968 864h16v16h-16zM1968 880h16v16h-16zM1984 912h16v16h-16zM1984 928h16v16h-16zM2000 960h16v16h-16z"/>
<path fill="#0606fc" d="M1904 752h8v8h-8zM1904 760h8v8h-8zM1904 768h8v8h-8z"/>
<path fill="#1800fc" d="M1928 752h8v8h-8zM1928 760h8v8h-8zM1928 768h8v8h-8zM1928 776h8v8h-8zM1936 784h8v8h-8zM1936 792h8v8h-8zM1936 800h8v8h-8zM1936 808h8v8h-8zM1944 816h8v8h-8zM1944 824h8v8h-8zM1944 832h8v8h-8zM1944 840h8v8h-8zM1944 848h8v8h-8zM1952 864h16v16h-16zM1952 880h16v16h-16zM1952 896h16v16h-16zM1968 928h16v16h-16zM1968 944h16v16h-16z"/>
<path fill="#1200fc" d="M1920 760h8v8h-8zM1920 768h8v8h-8zM1920 776h8v8h-8zM1928 784h8v8h-8zM1928 792h8v8h-8zM1928 800h8v8h-8zM1928 808h8v8h-8zM1928 816h8v8h-8zM1936 816h8v8h-8zM1936 824h8v8h-8zM1936 832h8v8h-8zM1936 840h8v8h-8zM1936 848h8v8h-8zM1936 856h8v8h-8zM1944 856h8v8h-8zM1936 864h16v16h-16zM1952 912h16v16h-16zM1952 928h16v16h-16z"/>
<path fill="#0006fc" d="M1888 768h16v16h-16zM1856 784h16v16h-16zM1872 784h16v16h-16zM1840 800h16v16h-16zM1856 800h16v16h-16zM1840 816h16v16h-16z"/>
<path fill="#0c00fc" d="M1912 768h8v8h-8zM1912 776h8v8h-8zM1920 784h8v8h-8zM1920 792h8v8h-8zM1920 800h8v8h-8zM1920 808h8v8h-8zM1920 816h8v8h-8zM1928 824h8v8h-8zM1928 832h8v8h-8zM1928 840h8v8h-8zM1928 848h8v8h-8zM1928 856h8v8h-8zM1928 864h8v8h-8zM1936 880h16v16h-16zM1936 896h16v16h-16zM1936 912h16v16h-16z"/>
<path fill="#0000fc" d="M1904 776h8v8h-8zM1888 784h16v16h-16zM1872 800h16v16h-16zM1888 800h16v16h-16zM1904 800h16v16h-16zM1856 816h16v16h-16zM1872 816h16v16h-16zM1888 816h16v16h-16zM1904 816h16v16h-16zM1856 832h16v16h-16zM1872 832h16v16h-16zM1888 832h16v16h-16zM1904 832h16v16h-16zM1856 848h16v16h-16zM1872 848h16v16h-16zM1888 848h16v16h-16zM1904 848h16v16h-16zM1872 864h16v16h-16zM1888 864h16v16h-16zM1904 864h16v16h-16zM1920 872h8v8h-8zM1888 880h16v16h-16zM1904 880h16v16h-16zM1904 896h16v16h-16zM1920 896h16v16h-16zM1920 912h16v16h-16z"/>
<path fill="#0600fc" d="M1904 784h16v16h-16zM1920 824h8v8h-8zM1920 832h8v8h-8zM1920 840h8v8h-8zM1920 848h8v8h-8zM1920 856h8v8h-8zM1920 864h8v8h-8zM1928 872h8v8h-8zM1920 880h16v16h-16z"/></g></g>
<path d="M2028.6 950.5 L2028.6 950.5 L2028.6 950.5 L2028.5 950.5 L2028.5 950.5 L2028.4 950.5 L2028.4 950.5 L2028.3 950.6 L2028.3 950.6 L2028.2 950.7 L2028.2 950.8 L2028.1 950.9 L2028.0 950.9 L2028.0 950.9 L2027.9 950.9 L2027.8 950.9 L2027.7 950.9 L2027.6 950.9 L2027.5 950.9 L2027.4 951.0 L2027.4 951.0 L2027.3 951.1 L2027.2 951.2 L2027.1 951.3 L2027.0 951.3 L2026.8 951.3 L2026.7 951.3 L2026.6 951.3 L2026.5 951.3 L2026.3 951.3 L2026.2 951.3 L2026.1 951.3 L2025.9 951.3 L2025.7 951.3 L2025.6 951.3 L2025.4 951.3 L2025.2 951.3 L2025.0 951.3 L2024.8 951.4 L2024.7 951.4 L2024.5 951.4 L2024.2 951.4 L2024.0 951.3 L2023.7 951.2 L2023.3 951.1 L2023.0 950.9 L2022.6 950.7 L2022.2 950.5 L2021.7 950.2 L2021.2 949.9 L2020.6 949.5 L2019.9 949.1 L2019.3 948.6 L2018.5 948.1 L2017.8 947.6 L2017.0 947.0 L2016.2 946.4 L2015.4 945.8 L2014.5 945.1 L2013.6 944.4 L2012.5 943.5 L2011.4 942.7 L2010.2 941.7 L2009.0 940.7 L2007.7 939.6 L2006.3 938.5 L2004.9 937.4 L2003.5 936.1 L2002.0 934.8 L2000.4 933.5 L1998.8 932.1 L1997.1 930.7 L1995.3 929.2 L1993.5 927.6 L1991.6 926.0 L1989.7 924.4 L1987.6 922.7 L1985.5 921.0 L1983.2 919.1 L1980.8 917.1 L1978.3 915.1 L1975.7 912.9 L1973.0 910.7 L1970.2 908.4 L1967.3 906.0 L1964.3 903.6 L1961.3 901.1 L1958.2 898.5 L1955.0 895.8 L1951.6 893.0 L1948.1 889.9 L1944.5 886.8 L1940.8 883.5 L1936.9 880.1 L1933.0 876.5 L1928.9 872.7 L1924.6 868.7 L1920.3 864.5 L1915.9 860.2 L1911.4 855.7 L1906.6 850.9 L1901.7 845.7 L1896.4 839.8 L1890.7 833.4 L1884.8 826.6 L1878.6 819.2 L1872.2 811.5 L1865.6 803.2 L1858.9 794.5 L1852.0 785.3 L1844.8 775.6 L1837.4 765.5 L1829.9 754.9 L1822.3 743.9 L1814.7 732.5 L1806.9 720.6 L1798.9 708.2 L1790.8 695.3 L1782.7 682.1 L1774.6 668.8 L1766.7 655.4 L1758.8 641.8 L1750.8 627.9 L1742.8 613.8 L1735.1 599.7 L1727.6 585.7 L1720.5 571.9 L1713.8 558.3 L1707.3 544.5 L1701.1 530.9 L1695.2 517.5 L1689.6 504.4 L1684.4 491.8 L1679.5 479.7 L1674.9 467.8 L1670.7 456.2 L1666.8 445.1 L1663.2 434.4 L1659.9 424.3 L1657.0 414.8 L1654.4 405.7 L1652.2 397.2 L1650.3 389.1 L1648.6 381.4 L1647.2 374.1 L1646.1 367.3 L1645.2 360.9 L1644.6 355.0 L1644.2 349.5 L1644.1 344.2 L1644.2 339.2 L1644.4 334.5 L1644.9 330.1 L1645.7 326.0 L1646.6 322.1 L1647.7 318.5 L1649.0 315.2 L1650.5 312.0 L1652.2 309.2 L1654.0 306.5 L1656.1 304.1 L1658.2 301.9 L1660.5 299.9 L1662.9 298.2 L1665.5 296.6 L1668.2 295.3 L1671.0 294.1 L1673.8 293.1 L1676.8 292.2 L1679.8 291.4 L1683.0 290.8 L1686.2 290.3 L1689.5 289.9 L1692.8 289.6 L1696.2 289.3 L1699.6 289.0 L1703.1 288.9 L1706.7 288.7 L1710.2 288.7 L1713.8 288.6 L1717.4 288.6 L1720.9 288.6 L1724.5 288.6 L1728.0 288.6 L1731.6 288.7 L1735.2 288.7 L1738.9 288.8 L1742.5 289.0 L1746.2 289.1 L1749.9 289.3 L1753.6 289.5 L1757.4 289.7 L1761.3 289.9 L1765.2 290.1 L1769.1 290.4 L1773.1 290.7 L1777.2 291.0 L1781.3 291.3 L1785.4 291.6 L1789.7 292.0 L1793.9 292.4 L1798.3 292.8 L1802.7 293.2 L1807.1 293.6 L1811.7 294.0 L1816.3 294.5 L1821.0 294.9 L1825.7 295.4 L1830.6 295.9 L1835.5 296.4 L1840.5 296.9 L1845.6 297.5 L1850.8 298.0 L1856.1 298.6 L1861.5 299.2 L1866.9 299.8 L1872.5 300.4 L1878.1 301.0 L1883.9 301.6 L1889.7 302.3 L1895.7 303.0 L1901.7 303.6 L1907.9 304.3 L1914.1 305.0 L1920.5 305.8 L1927.0 306.5 L1933.5 307.2 L1940.2 308.0 L1947.0 308.8 L1953.9 309.6 L1960.9 310.4 L1968.0 311.2 L1975.3 312.0 L1982.6 312.9 L1990.0 313.7 L1997.6 314.6 L2005.2 315.5 L2013.0 316.4 L2020.9 317.3 L2028.9 318.2 L2037.0 319.1 L2045.1 320.1 L2053.4 321.0 L2061.8 322.0 L2070.3 323.0 L2078.9 324.0 L2087.6 325.0 L2096.3 326.0 L2105.1 327.0 L2114.1 328.0 L2123.0 329.0 L2132.1 330.1 L2141.1 331.1 L2150.2 332.2 L2159.4 333.2 L2168.6 334.3 L2177.9 335.4 L2187.0 336.4 L2196.1 337.5 L2205.1 338.5 L2214.1 339.6 L2223.0 340.6 L2231.8 341.6 L2240.6 342.6 L2249.4 343.6 L2258.2 344.6 L2267.0 345.7 L2275.8 346.7 L2284.4 347.7 L2293.0 348.7 L2301.3 349.6 L2309.5 350.5 L2317.6 351.5 L2325.5 352.4 L2333.3 353.3 L2340.9 354.1 L2348.3 355.0 L2355.6 355.8 L2362.8 356.7 L2369.8 357.5 L2376.7 358.3 L2383.4 359.0 L2389.9 359.8 L2396.2 360.5 L2402.3 361.2 L2408.3 361.9 L2414.1 362.6 L2419.8 363.2 L2425.2 363.9 L2430.6 364.5 L2435.7 365.1 L2440.7 365.6 L2445.5 366.2 L2450.3 366.7 L2454.8 367.3 L2459.3 367.8 L2463.6 368.3 L2467.8 368.8 L2471.9 369.2 L2475.9 369.7 L2479.8 370.2 L2483.7 370.6 L2487.4 371.0 L2491.1 371.5 L2494.6 371.9 L2498.1 372.3 L2501.5 372.7 L2504.7 373.0 L2507.9 373.4 L2511.0 373.8 L2514.0 374.1 L2517.0 374.5 L2519.8 374.8 L2522.5 375.1 L2525.1 375.4 L2527.6 375.7 L2530.0 375.9 L2532.3 376.2 L2534.6 376.4 L2536.6 376.7 L2538.5 376.9 L2540.3 377.1 L2542.0 377.3 L2543.9 377.5 L2546.0 377.8 L2548.5 378.1 L2551.2 378.4 L2554.1 378.7 L2556.9 379.0 L2559.5 379.3 L2561.7 379.6 L2563.5 379.8 L2565.0 380.0 L2566.3 380.1 L2567.4 380.3 L2568.5 380.4 L2569.6 380.5 L2570.7 380.7 L2571.7 380.9 L2572.6 381.1 L2573.5 381.2 L2574.4 381.3 L2575.3 381.2 L2576.2 380.8 L2577.2 380.2 L2578.2 379.5 L2579.2 378.8 L2579.9 378.2 L2580.5 377.8 Z M2389.3 359.6 L1790.4 299.1 L1906.1 786.5 Z" fill="#000" fill-opacity="0.4" fill-rule="evenodd"/></g>
<rect x="1639" y="273" width="906" height="698" fill="none" stroke="#9a9a9a" stroke-width="2"/>
<rect x="1631" y="969.1" width="9" height="2" fill="#e0e0e0"/>
<text x="1620.0" y="977.1" font-size="20.35" fill="#d2d2d2" textLength="11.3" lengthAdjust="spacingAndGlyphs">0</text>
<rect x="1631" y="911.2" width="9" height="2" fill="#e0e0e0"/>
<text x="1591.7" y="919.2" font-size="20.35" fill="#d2d2d2" textLength="39.7" lengthAdjust="spacingAndGlyphs">0.05</text>
<rect x="1631" y="853.4" width="9" height="2" fill="#e0e0e0"/>
<text x="1603.1" y="861.4" font-size="20.35" fill="#d2d2d2" textLength="28.4" lengthAdjust="spacingAndGlyphs">0.1</text>
<rect x="1631" y="795.5" width="9" height="2" fill="#e0e0e0"/>
<text x="1591.7" y="803.5" font-size="20.35" fill="#d2d2d2" textLength="39.7" lengthAdjust="spacingAndGlyphs">0.15</text>
<rect x="1631" y="737.7" width="9" height="2" fill="#e0e0e0"/>
<text x="1603.2" y="745.7" font-size="20.35" fill="#d2d2d2" textLength="28.4" lengthAdjust="spacingAndGlyphs">0.2</text>
<rect x="1631" y="679.9" width="9" height="2" fill="#e0e0e0"/>
<text x="1591.7" y="687.9" font-size="20.35" fill="#d2d2d2" textLength="39.7" lengthAdjust="spacingAndGlyphs">0.25</text>
<rect x="1631" y="622.0" width="9" height="2" fill="#e0e0e0"/>
<text x="1603.0" y="630.0" font-size="20.35" fill="#d2d2d2" textLength="28.4" lengthAdjust="spacingAndGlyphs">0.3</text>
<rect x="1631" y="564.1" width="9" height="2" fill="#e0e0e0"/>
<text x="1591.7" y="572.1" font-size="20.35" fill="#d2d2d2" textLength="39.7" lengthAdjust="spacingAndGlyphs">0.35</text>
<rect x="1631" y="506.3" width="9" height="2" fill="#e0e0e0"/>
<text x="1602.7" y="514.3" font-size="20.35" fill="#d2d2d2" textLength="28.4" lengthAdjust="spacingAndGlyphs">0.4</text>
<rect x="1631" y="448.5" width="9" height="2" fill="#e0e0e0"/>
<text x="1591.7" y="456.5" font-size="20.35" fill="#d2d2d2" textLength="39.7" lengthAdjust="spacingAndGlyphs">0.45</text>
<rect x="1631" y="390.6" width="9" height="2" fill="#e0e0e0"/>
<text x="1603.0" y="398.6" font-size="20.35" fill="#d2d2d2" textLength="28.4" lengthAdjust="spacingAndGlyphs">0.5</text>
<rect x="1631" y="332.8" width="9" height="2" fill="#e0e0e0"/>
<text x="1591.7" y="340.8" font-size="20.35" fill="#d2d2d2" textLength="39.7" lengthAdjust="spacingAndGlyphs">0.55</text>
<rect x="1638.7" y="970" width="2" height="8.5" fill="#e0e0e0"/>
<text x="1634.0" y="1001.0" font-size="20.35" fill="#d2d2d2" textLength="11.3" lengthAdjust="spacingAndGlyphs">0</text>
<rect x="1714.0" y="970" width="2" height="8.5" fill="#e0e0e0"/>
<text x="1695.2" y="1001.0" font-size="20.35" fill="#d2d2d2" textLength="39.7" lengthAdjust="spacingAndGlyphs">0.05</text>
<rect x="1789.2" y="970" width="2" height="8.5" fill="#e0e0e0"/>
<text x="1776.2" y="1001.0" font-size="20.35" fill="#d2d2d2" textLength="28.4" lengthAdjust="spacingAndGlyphs">0.1</text>
<rect x="1864.5" y="970" width="2" height="8.5" fill="#e0e0e0"/>
<text x="1845.7" y="1001.0" font-size="20.35" fill="#d2d2d2" textLength="39.7" lengthAdjust="spacingAndGlyphs">0.15</text>
<rect x="1939.8" y="970" width="2" height="8.5" fill="#e0e0e0"/>
<text x="1926.7" y="1001.0" font-size="20.35" fill="#d2d2d2" textLength="28.4" lengthAdjust="spacingAndGlyphs">0.2</text>
<rect x="2015.1" y="970" width="2" height="8.5" fill="#e0e0e0"/>
<text x="1996.3" y="1001.0" font-size="20.35" fill="#d2d2d2" textLength="39.7" lengthAdjust="spacingAndGlyphs">0.25</text>
<rect x="2090.4" y="970" width="2" height="8.5" fill="#e0e0e0"/>
<text x="2077.2" y="1001.0" font-size="20.35" fill="#d2d2d2" textLength="28.4" lengthAdjust="spacingAndGlyphs">0.3</text>
<rect x="2165.6" y="970" width="2" height="8.5" fill="#e0e0e0"/>
<text x="2146.8" y="1001.0" font-size="20.35" fill="#d2d2d2" textLength="39.7" lengthAdjust="spacingAndGlyphs">0.35</text>
<rect x="2240.9" y="970" width="2" height="8.5" fill="#e0e0e0"/>
<text x="2227.6" y="1001.0" font-size="20.35" fill="#d2d2d2" textLength="28.4" lengthAdjust="spacingAndGlyphs">0.4</text>
<rect x="2316.2" y="970" width="2" height="8.5" fill="#e0e0e0"/>
<text x="2297.4" y="1001.0" font-size="20.35" fill="#d2d2d2" textLength="39.7" lengthAdjust="spacingAndGlyphs">0.45</text>
<rect x="2391.4" y="970" width="2" height="8.5" fill="#e0e0e0"/>
<text x="2378.3" y="1001.0" font-size="20.35" fill="#d2d2d2" textLength="28.4" lengthAdjust="spacingAndGlyphs">0.5</text>
<rect x="2466.7" y="970" width="2" height="8.5" fill="#e0e0e0"/>
<text x="2447.9" y="1001.0" font-size="20.35" fill="#d2d2d2" textLength="39.7" lengthAdjust="spacingAndGlyphs">0.55</text>
<rect x="1778.9" y="289.0" width="19" height="19" fill="none" stroke="#fff" stroke-width="2.2"/>
<rect x="1798.0" y="304.7" width="19" height="19" fill="none" stroke="#fff" stroke-width="2.2"/>
<rect x="1819.4" y="323.8" width="19" height="19" fill="none" stroke="#fff" stroke-width="2.2"/>
<rect x="1848.5" y="348.9" width="19" height="19" fill="none" stroke="#fff" stroke-width="2.2"/>
<rect x="1882.9" y="377.6" width="19" height="19" fill="none" stroke="#fff" stroke-width="2.2"/>
<rect x="1939.0" y="304.8" width="19" height="19" fill="none" stroke="#fff" stroke-width="2.2"/>
<rect x="1937.0" y="321.9" width="19" height="19" fill="none" stroke="#fff" stroke-width="2.2"/>
<rect x="1935.2" y="342.7" width="19" height="19" fill="none" stroke="#fff" stroke-width="2.2"/>
<rect x="1933.2" y="364.2" width="19" height="19" fill="none" stroke="#fff" stroke-width="2.2"/>
<rect x="1931.1" y="387.9" width="19" height="19" fill="none" stroke="#fff" stroke-width="2.2"/>
<rect x="2377.8" y="348.8" width="19" height="19" fill="none" stroke="#fff" stroke-width="2.2"/>
<rect x="2277.9" y="364.5" width="19" height="19" fill="none" stroke="#fff" stroke-width="2.2"/>
<rect x="2185.1" y="377.6" width="19" height="19" fill="none" stroke="#fff" stroke-width="2.2"/>
<rect x="2088.7" y="392.8" width="19" height="19" fill="none" stroke="#fff" stroke-width="2.2"/>
<rect x="2005.9" y="404.4" width="19" height="19" fill="none" stroke="#fff" stroke-width="2.2"/>
<rect x="1811.8" y="433.2" width="19" height="19" fill="none" stroke="#fff" stroke-width="2.2"/>
<rect x="1834.7" y="429.6" width="19" height="19" fill="none" stroke="#fff" stroke-width="2.2"/>
<rect x="1857.6" y="425.7" width="19" height="19" fill="none" stroke="#fff" stroke-width="2.2"/>
<rect x="1880.6" y="423.2" width="19" height="19" fill="none" stroke="#fff" stroke-width="2.2"/>
<rect x="1903.5" y="419.7" width="19" height="19" fill="none" stroke="#fff" stroke-width="2.2"/>
<rect x="2120.1" y="577.6" width="19" height="19" fill="none" stroke="#fff" stroke-width="2.2"/>
<rect x="2065.9" y="533.7" width="19" height="19" fill="none" stroke="#fff" stroke-width="2.2"/>
<rect x="2022.9" y="496.5" width="19" height="19" fill="none" stroke="#fff" stroke-width="2.2"/>
<rect x="1984.7" y="464.5" width="19" height="19" fill="none" stroke="#fff" stroke-width="2.2"/>
<rect x="1953.8" y="437.4" width="19" height="19" fill="none" stroke="#fff" stroke-width="2.2"/>
<rect x="1894.8" y="776.3" width="19" height="19" fill="none" stroke="#fff" stroke-width="2.2"/>
<rect x="1903.2" y="664.3" width="19" height="19" fill="none" stroke="#fff" stroke-width="2.2"/>
<rect x="1913.5" y="578.1" width="19" height="19" fill="none" stroke="#fff" stroke-width="2.2"/>
<rect x="1918.3" y="513.0" width="19" height="19" fill="none" stroke="#fff" stroke-width="2.2"/>
<rect x="1923.0" y="458.8" width="19" height="19" fill="none" stroke="#fff" stroke-width="2.2"/>
<circle cx="1769.3" cy="296.6" r="5.8" fill="#22aa22" stroke="#000" stroke-width="1.6"/>
<circle cx="1794.4" cy="316.6" r="5.8" fill="#44b044" stroke="#000" stroke-width="1.6"/>
<circle cx="1824.9" cy="339.4" r="5.8" fill="#62b262" stroke="#000" stroke-width="1.6"/>
<circle cx="1858.0" cy="363.8" r="5.8" fill="#86b486" stroke="#000" stroke-width="1.6"/>
<circle cx="1896.3" cy="391.4" r="5.8" fill="#a6c0a6" stroke="#000" stroke-width="1.6"/>
<circle cx="1952.1" cy="316.4" r="5.8" fill="#c8c000" stroke="#000" stroke-width="1.6"/>
<circle cx="1950.5" cy="333.2" r="5.8" fill="#c0bb30" stroke="#000" stroke-width="1.6"/>
<circle cx="1948.5" cy="352.8" r="5.8" fill="#c0bb60" stroke="#000" stroke-width="1.6"/>
<circle cx="1946.4" cy="373.9" r="5.8" fill="#c0bb80" stroke="#000" stroke-width="1.6"/>
<circle cx="1942.5" cy="396.9" r="5.8" fill="#c0bc9c" stroke="#000" stroke-width="1.6"/>
<circle cx="2377.5" cy="358.3" r="5.8" fill="#cc0808" stroke="#000" stroke-width="1.6"/>
<circle cx="2304.3" cy="367.8" r="5.8" fill="#c04444" stroke="#000" stroke-width="1.6"/>
<circle cx="2215.8" cy="381.3" r="5.8" fill="#c05a5a" stroke="#000" stroke-width="1.6"/>
<circle cx="2129.6" cy="394.7" r="5.8" fill="#b87878" stroke="#000" stroke-width="1.6"/>
<circle cx="2032.7" cy="410.5" r="5.8" fill="#c09898" stroke="#000" stroke-width="1.6"/>
<circle cx="1805.9" cy="446.7" r="5.8" fill="#20c0c0" stroke="#000" stroke-width="1.6"/>
<circle cx="1832.7" cy="443.0" r="5.8" fill="#50b8b8" stroke="#000" stroke-width="1.6"/>
<circle cx="1861.9" cy="437.1" r="5.8" fill="#70b4b4" stroke="#000" stroke-width="1.6"/>
<circle cx="1888.7" cy="433.1" r="5.8" fill="#90b4b4" stroke="#000" stroke-width="1.6"/>
<circle cx="1913.0" cy="429.4" r="5.8" fill="#a8c0c0" stroke="#000" stroke-width="1.6"/>
<circle cx="2153.0" cy="583.9" r="5.8" fill="#c010c0" stroke="#000" stroke-width="1.6"/>
<circle cx="2098.3" cy="543.4" r="5.8" fill="#c050c0" stroke="#000" stroke-width="1.6"/>
<circle cx="2048.3" cy="506.9" r="5.8" fill="#c070c0" stroke="#000" stroke-width="1.6"/>
<circle cx="2012.0" cy="478.1" r="5.8" fill="#c090c0" stroke="#000" stroke-width="1.6"/>
<circle cx="1975.1" cy="450.8" r="5.8" fill="#c0a8c0" stroke="#000" stroke-width="1.6"/>
<circle cx="1904.1" cy="829.8" r="5.8" fill="#0000cc" stroke="#000" stroke-width="1.6"/>
<circle cx="1913.2" cy="706.9" r="5.8" fill="#5050c0" stroke="#000" stroke-width="1.6"/>
<circle cx="1923.0" cy="605.0" r="5.8" fill="#7070b8" stroke="#000" stroke-width="1.6"/>
<circle cx="1930.8" cy="531.9" r="5.8" fill="#8888c0" stroke="#000" stroke-width="1.6"/>
<circle cx="1935.0" cy="473.5" r="5.8" fill="#a0a0c0" stroke="#000" stroke-width="1.6"/>
<rect x="1927" y="416.3" width="19" height="19" fill="none" stroke="#000" stroke-width="2.2"/>
<circle cx="1935" cy="423.8" r="5.8" fill="#fff" stroke="#000" stroke-width="1.6"/>
<circle cx="1956.2" cy="419.7" r="6.9" fill="#000"/>
<rect x="2232.4" y="751.7" width="307.3" height="211.3" fill="#262626"/>
<rect x="2236.5" y="755.3" width="299.7" height="203.6" fill="#9a9a9a"/>
<rect x="2238.5" y="757.3" width="295.7" height="199.6" fill="#222"/>
<path d="M2238.5 757.3H2385.2L2534.2 857.4V956.9H2238.5Z" fill="url(#insd)"/>
<path d="M2238.5 766.8L2534.2 948V956.9H2238.5Z" fill="url(#insb)"/>
<rect x="2374.9" y="845.7" width="19" height="19" fill="none" stroke="#fff" stroke-width="2.2"/>
<circle cx="2398.4" cy="875.2" r="5.8" fill="#b8b400" stroke="#000" stroke-width="1.6"/>
<rect x="2553" y="88" width="7" height="1402" fill="url(#rshadow)"/>
<rect x="200" y="1490" width="2360" height="62" fill="url(#bbar)"/>
<rect x="200" y="1490" width="815" height="62" fill="#2a2a2a"/>
<rect x="201.3" y="1489.6" width="44.3" height="64" rx="4" fill="url(#sbtn)"/>
<circle cx="223.4" cy="1499" r="7" fill="url(#knob)"/><path d="M219.5 1500.5H227.3L223.4 1496Z" fill="#222"/>
<rect x="206.4" y="1516" width="34.6" height="29.8" rx="2" fill="#ffff00" stroke="#777" stroke-width="0.8"/>
<rect x="252.0" y="1489.6" width="150" height="64" rx="4" fill="url(#sbtn)"/>
<rect x="257.5" y="1495.4" width="139.5" height="35.1" rx="3" fill="#c0c19f" stroke="#8a8a6a" stroke-width="1"/>
<text x="314.5" y="1545.8" font-size="12.50" fill="#2a2a2a" textLength="24.8" lengthAdjust="spacingAndGlyphs">20%</text>
<rect x="404.0" y="1489.6" width="150" height="64" rx="4" fill="url(#sbtn)"/>
<rect x="409.5" y="1495.4" width="139.5" height="35.1" rx="3" fill="#c0c17f" stroke="#8a8a6a" stroke-width="1"/>
<text x="466.7" y="1545.8" font-size="12.50" fill="#2a2a2a" textLength="24.8" lengthAdjust="spacingAndGlyphs">40%</text>
<rect x="555.8" y="1489.6" width="150" height="64" rx="4" fill="url(#sbtn)"/>
<rect x="561.3" y="1495.4" width="139.5" height="35.1" rx="3" fill="#c0c15e" stroke="#8a8a6a" stroke-width="1"/>
<text x="618.3" y="1545.8" font-size="12.50" fill="#2a2a2a" textLength="24.8" lengthAdjust="spacingAndGlyphs">60%</text>
<rect x="708.0" y="1489.6" width="150" height="64" rx="4" fill="url(#sbtn)"/>
<rect x="713.5" y="1495.4" width="139.5" height="35.1" rx="3" fill="#c0c12e" stroke="#8a8a6a" stroke-width="1"/>
<text x="770.5" y="1545.8" font-size="12.50" fill="#2a2a2a" textLength="24.8" lengthAdjust="spacingAndGlyphs">80%</text>
<rect x="860.0" y="1489.6" width="150" height="64" rx="4" fill="url(#sbtn2)"/>
<rect x="865.5" y="1495.4" width="139.5" height="35.1" rx="3" fill="#c4c000" stroke="#c4c000" stroke-width="1"/>
<text x="918.9" y="1545.8" font-size="12.50" font-weight="bold" fill="#fff" textLength="31.7" lengthAdjust="spacingAndGlyphs">100%</text>
<rect x="2237" y="1509.4" width="48" height="44" rx="4" fill="url(#cbtn)"/>
<rect x="2247" y="1515" width="28" height="30" rx="3" fill="none" stroke="#222" stroke-width="2"/><rect x="2254" y="1522" width="13" height="13" fill="#000"/>
<rect x="2286.6" y="1490.7" width="280" height="29" rx="3" fill="url(#cbtn)"/>
<rect x="2332.1" y="1491" width="1" height="29" fill="#555"/>
<rect x="2377.6" y="1491" width="1" height="29" fill="#555"/>
<rect x="2423.1" y="1491" width="1" height="29" fill="#555"/>
<rect x="2468.6" y="1491" width="1" height="29" fill="#555"/>
<rect x="2514.1" y="1491" width="1" height="29" fill="#555"/>
<rect x="2286.6" y="1521.4" width="280" height="32" rx="3" fill="url(#cbtn)"/>
<rect x="2421.5" y="1522" width="1" height="31" fill="#666"/>
<text x="2341.6" y="1545.3" font-size="22.53" fill="#2a2a2a" textLength="52.4" lengthAdjust="spacingAndGlyphs">Back</text>
<text x="2448.4" y="1545.3" font-size="22.53" fill="#2a2a2a" textLength="53.8" lengthAdjust="spacingAndGlyphs">Next</text>
<circle cx="2317" cy="1535.7" r="9.5" fill="url(#mknob)"/><circle cx="2530" cy="1535.7" r="9.5" fill="url(#mknob)"/>
<path d="M2316 1531.5L2312.5 1535.7L2316 1539.9M2320 1531.5L2316.5 1535.7L2320 1539.9" fill="none" stroke="#222" stroke-width="1.3"/>
<path d="M2527 1531.5L2530.5 1535.7L2527 1539.9M2531 1531.5L2534.5 1535.7L2531 1539.9" fill="none" stroke="#222" stroke-width="1.3"/>
<circle cx="2309.3" cy="1501" r="9" fill="url(#mknob)"/>
<circle cx="2354.5" cy="1501" r="9" fill="url(#mknob)"/>
<circle cx="2399.7" cy="1501" r="9" fill="url(#mknob)"/>
<circle cx="2444.9" cy="1501" r="9" fill="url(#mknob)"/>
<circle cx="2490.1" cy="1501" r="9" fill="url(#mknob)"/>
<circle cx="2535.3" cy="1501" r="9" fill="url(#mknob)"/>
<path d="M2174.2 1469.2L2226.5 1480.3L2227.8 1511.1L2187.1 1514.2" fill="none" stroke="#c8c8c8" stroke-opacity="0.85" stroke-width="7.5" stroke-linejoin="round" stroke-linecap="round"/>
<path d="M2174.2 1469.2L2176.6 1519.1L2208.7 1534.5L2263.5 1517.3L2232 1511.7" fill="none" stroke="#c8c8c8" stroke-opacity="0.85" stroke-width="7.5" stroke-linejoin="round" stroke-linecap="round"/>
<path d="M2174.2 1469.2L2226.5 1480.3L2227.8 1511.1L2187.1 1514.2" fill="none" stroke="#74262b" stroke-width="4.6" stroke-linejoin="round" stroke-linecap="round"/>
<path d="M2174.2 1469.2L2176.6 1519.1L2208.7 1534.5L2263.5 1517.3L2232 1511.7" fill="none" stroke="#74262b" stroke-width="4.6" stroke-linejoin="round" stroke-linecap="round"/>
<path d="M2189 1487L2197 1483L2204.3 1498L2232.7 1469.2L2205 1507Z" fill="#2e2e2e" stroke="#c0c0c0" stroke-width="1.6" stroke-linejoin="round"/>
<text x="2231.0" y="1508.2" font-size="38.52" font-weight="bold" fill="none" textLength="199.3" lengthAdjust="spacingAndGlyphs" stroke="#d0d0d0" stroke-opacity="0.75" stroke-width="4.2" stroke-linejoin="round">NOTEBOOK</text>
<text x="2231.0" y="1508.2" font-size="38.52" font-weight="bold" fill="#8e2a30" textLength="199.3" lengthAdjust="spacingAndGlyphs" fill-opacity="0.8" stroke="#8e2a30" stroke-opacity="0.8" stroke-width="1.6" stroke-linejoin="round">NOTEBOOK</text>
<text x="2430.6" y="1508.2" font-size="38.52" font-weight="bold" fill="none" textLength="119.7" lengthAdjust="spacingAndGlyphs" stroke="#dcdcdc" stroke-opacity="0.85" stroke-width="4" stroke-linejoin="round">CHECK</text>
<text x="2430.6" y="1508.2" font-size="38.52" font-weight="bold" fill="#3a3a3a" textLength="119.7" lengthAdjust="spacingAndGlyphs" fill-opacity="0.85" stroke="#3a3a3a" stroke-opacity="0.85" stroke-width="1.4" stroke-linejoin="round">CHECK</text>
</svg>
</body></html>
